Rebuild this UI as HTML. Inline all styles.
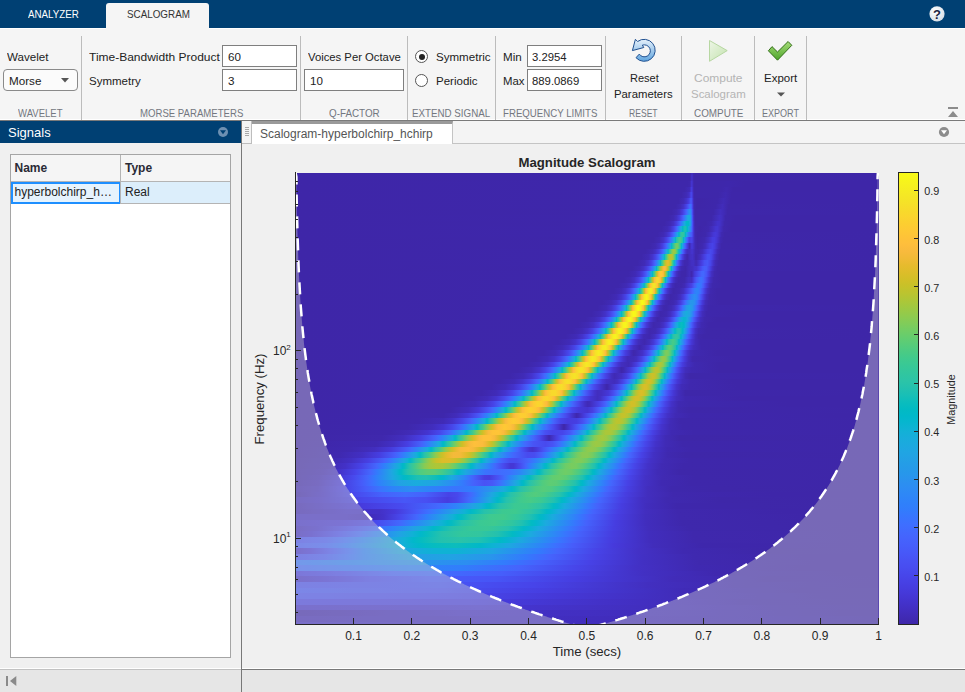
<!DOCTYPE html>
<html lang="en">
<head>
<meta charset="utf-8">
<title>Wavelet Time-Frequency Analyzer</title>
<style>
html,body{margin:0;padding:0}
body{width:965px;height:692px;overflow:hidden;background:#f0f0f0;font-family:"Liberation Sans",Arial,sans-serif;font-size:12px;color:#222}
#app{position:relative;width:965px;height:692px;overflow:hidden;background:#f0f0f0}
#app div,#app span,#app svg{position:absolute;box-sizing:border-box}
.t{white-space:nowrap;line-height:normal;transform-origin:0 0}
.titlebar{left:0;top:0;width:965px;height:28px;background:#004073}
.tabsel{left:106px;top:3px;width:103px;height:26px;background:#f5f5f5;border-radius:3px 3px 0 0}
.toolstrip{left:0;top:28px;width:965px;height:93px;background:#f5f5f5;border-top:1px solid #fff;border-bottom:1px solid #7a7a7a;box-shadow:inset 0 -1px 0 #fff}
.sep{top:36px;width:1px;height:84px;background:#bcbcbc}
.inp{height:22px;background:#fff;border:1px solid #7f7f7f}
.dd{left:3px;top:69px;width:75px;height:22px;background:#fbfbfb;border:1px solid #8a8a8a;border-radius:4px}
.radio{width:13px;height:13px;border-radius:50%;border:1px solid #555;background:#fff}
.radio.on::after{content:"";position:absolute;left:2.5px;top:2.5px;width:6px;height:6px;border-radius:50%;background:#222}
.sighead{left:0;top:121px;width:241px;height:22px;background:#004073}
.divider{left:241px;top:121px;width:1px;height:571px;background:#787878}
.tabstrip{left:242px;top:121px;width:723px;height:23px;background:#f4f4f4;border-bottom:1px solid #c4c4c4}
.grip{left:242px;top:121px;width:10px;height:23px;background:#f4f4f4;border-right:1px solid #bdbdbd;border-bottom:1px solid #bdbdbd}
.doctab{left:252px;top:121px;width:201px;height:23px;background:#fff;border-top:3px solid #9a9a9a;border-right:1px solid #c4c4c4}
.table{left:10px;top:154px;width:221px;height:504px;background:#fff;border:1px solid #a5a5a5}
.thead{left:0;top:0;width:219px;height:27px;background:#f5f5f5;border-bottom:1px solid #b4b4b4}
.colsep{left:109px;top:0;width:1px;height:49px;background:#b4b4b4}
.row{left:0;top:27px;width:219px;height:22px;background:#dceefb;border-bottom:1px solid #b4b4b4}
.cellsel{left:0;top:27px;width:110px;height:22px;border:2px solid #1e8fff;background:#e6f3fd}
.status{left:0;top:668px;width:965px;height:24px;background:#e6e6e6;border-top:1px solid #fff}
.stl{left:0;top:669px;width:241px;height:1px;background:#c2c2c2}
.str{left:242px;top:669px;width:723px;height:1px;background:#787878}
.plot{left:242px;top:144px}
</style>
</head>
<body>
<div id="app">
  <div class="titlebar"></div>
  <div class="toolstrip"></div>
  <div class="tabsel"></div>
  <div class="sep" style="left:81px"></div>
  <div class="sep" style="left:300px"></div>
  <div class="sep" style="left:407px"></div>
  <div class="sep" style="left:495px"></div>
  <div class="sep" style="left:605px"></div>
  <div class="sep" style="left:681px"></div>
  <div class="sep" style="left:754px"></div>
  <div class="sep" style="left:806px"></div>
  <div class="dd"></div>
  <div class="inp" style="left:222px;top:45px;width:75px"></div>
  <div class="inp" style="left:222px;top:69px;width:75px"></div>
  <div class="inp" style="left:304px;top:69px;width:100px"></div>
  <div class="inp" style="left:527px;top:45px;width:75px"></div>
  <div class="inp" style="left:527px;top:69px;width:75px"></div>
  <div class="radio on" style="left:415px;top:50px"></div>
  <div class="radio" style="left:415px;top:74px"></div>
  <svg style="left:0;top:0" width="965" height="121" viewBox="0 0 965 121">
    <defs>
      <linearGradient id="gr" x1="0" y1="0" x2="0" y2="1"><stop offset="0" stop-color="#e6f1fb"/><stop offset="1" stop-color="#5fa4de"/></linearGradient>
      <linearGradient id="gc" x1="0" y1="0" x2="0" y2="1"><stop offset="0" stop-color="#a6dc78"/><stop offset="1" stop-color="#4ea52c"/></linearGradient>
      <linearGradient id="gp" x1="0" y1="0" x2="1" y2="1"><stop offset="0" stop-color="#edf6e6"/><stop offset="1" stop-color="#c3e2ae"/></linearGradient>
      <radialGradient id="gh" cx=".4" cy=".35" r=".7"><stop offset="0" stop-color="#fff"/><stop offset="1" stop-color="#d5dde6"/></radialGradient>
    </defs>
    <path d="M61 78h8l-4 4.5z" fill="#555"/>
    <path d="M637.6 41.5A11 11 0 1 1 636 57.7L639.3 54.1A6 6 0 1 0 642.3 45.2L643.8 47.5L632.4 50.6L635.4 39.3Z" fill="url(#gr)" stroke="#1f4f8f" stroke-width="1" stroke-linejoin="round"/>
    <path d="M709.5 40.5V61.3L727.2 50.6Z" fill="url(#gp)" stroke="#b7d7a2" stroke-width="1" stroke-linejoin="round"/>
    <path d="M768.4 50.8L772 46.6L777.5 52L788.1 41.5L791.8 45.3L777.5 60.2Z" fill="url(#gc)" stroke="#336f18" stroke-width="1" stroke-linejoin="round"/>
    <path d="M777 92.5h8l-4 4z" fill="#555"/>
    <circle cx="937" cy="13.8" r="7.6" fill="url(#gh)"/>
    <text x="937" y="18.5" text-anchor="middle" font-family="Liberation Sans, Arial, sans-serif" font-weight="bold" font-size="13" fill="#1b2440">?</text>
    <path d="M948 107h10v2h-10zM948 117h10l-5-6z" fill="#8c8c8c"/>
  </svg>
<span class="t" style="left:27.6px;top:6.6px;font-size:11.6px;color:#ffffff;transform:scaleX(0.8433)">ANALYZER</span>
<span class="t" style="left:127.3px;top:6.6px;font-size:11.6px;color:#333333;transform:scaleX(0.8489)">SCALOGRAM</span>
<span class="t" style="left:7.0px;top:50.2px;font-size:11.6px;color:#222222;transform:scaleX(0.9987)">Wavelet</span>
<span class="t" style="left:8.6px;top:74.2px;font-size:11.6px;color:#222222;transform:scaleX(1.0056)">Morse</span>
<span class="t" style="left:88.7px;top:50.1px;font-size:11.6px;color:#222222;transform:scaleX(1.0339)">Time-Bandwidth Product</span>
<span class="t" style="left:88.7px;top:74.2px;font-size:11.6px;color:#222222;transform:scaleX(0.9910)">Symmetry</span>
<span class="t" style="left:227.7px;top:50.1px;font-size:11.6px;color:#222222;transform:scaleX(0.9995)">60</span>
<span class="t" style="left:227.7px;top:74.2px;font-size:11.6px;color:#222222;transform:scaleX(1.0073)">3</span>
<span class="t" style="left:307.5px;top:50.1px;font-size:11.6px;color:#222222;transform:scaleX(0.9730)">Voices Per Octave</span>
<span class="t" style="left:309.8px;top:74.2px;font-size:11.6px;color:#222222;transform:scaleX(0.9995)">10</span>
<span class="t" style="left:436.4px;top:50.1px;font-size:11.6px;color:#222222;transform:scaleX(0.9973)">Symmetric</span>
<span class="t" style="left:436.4px;top:74.2px;font-size:11.6px;color:#222222;transform:scaleX(0.9931)">Periodic</span>
<span class="t" style="left:503.2px;top:50.1px;font-size:11.6px;color:#222222;transform:scaleX(1.0007)">Min</span>
<span class="t" style="left:503.2px;top:74.2px;font-size:11.6px;color:#222222;transform:scaleX(0.9815)">Max</span>
<span class="t" style="left:532.2px;top:50.1px;font-size:11.6px;color:#222222;transform:scaleX(0.9755)">3.2954</span>
<span class="t" style="left:532.2px;top:74.2px;font-size:11.6px;color:#222222;transform:scaleX(0.9760)">889.0869</span>
<span class="t" style="left:629.5px;top:71.2px;font-size:11.6px;color:#222222;transform:scaleX(0.9506)">Reset</span>
<span class="t" style="left:614.3px;top:87.2px;font-size:11.6px;color:#222222;transform:scaleX(0.9779)">Parameters</span>
<span class="t" style="left:693.7px;top:71.2px;font-size:11.6px;color:#b4b4b4;transform:scaleX(1.0309)">Compute</span>
<span class="t" style="left:690.8px;top:87.2px;font-size:11.6px;color:#b4b4b4;transform:scaleX(0.9870)">Scalogram</span>
<span class="t" style="left:763.7px;top:71.2px;font-size:11.6px;color:#222222;transform:scaleX(0.9906)">Export</span>
<span class="t" style="left:18.2px;top:107.0px;font-size:11px;color:#737780;transform:scaleX(0.8667)">WAVELET</span>
<span class="t" style="left:139.7px;top:107.0px;font-size:11px;color:#737780;transform:scaleX(0.8727)">MORSE PARAMETERS</span>
<span class="t" style="left:328.7px;top:107.0px;font-size:11px;color:#737780;transform:scaleX(0.8951)">Q-FACTOR</span>
<span class="t" style="left:412.4px;top:107.0px;font-size:11px;color:#737780;transform:scaleX(0.8883)">EXTEND SIGNAL</span>
<span class="t" style="left:503.2px;top:107.0px;font-size:11px;color:#737780;transform:scaleX(0.8792)">FREQUENCY LIMITS</span>
<span class="t" style="left:629.0px;top:107.0px;font-size:11px;color:#737780;transform:scaleX(0.7796)">RESET</span>
<span class="t" style="left:693.6px;top:107.0px;font-size:11px;color:#737780;transform:scaleX(0.8982)">COMPUTE</span>
<span class="t" style="left:762.0px;top:107.0px;font-size:11px;color:#737780;transform:scaleX(0.8217)">EXPORT</span>
  <div class="sighead"></div>
  <span class="t" style="left:8px;top:125.2px;font-size:13px;color:#fff">Signals</span>
  <div class="tabstrip"></div>
  <div class="grip"></div>
  <div class="doctab"></div>
  <span class="t" style="left:260px;top:127.2px;font-size:12px;color:#555">Scalogram-hyperbolchirp_hchirp</span>
  <svg style="left:0;top:121px" width="965" height="23" viewBox="0 121 965 23">
    <circle cx="223" cy="132" r="5" fill="#6d90b2"/><path d="M220 130.3h6l-3 4z" fill="#004073"/>
    <circle cx="944" cy="132" r="5.1" fill="#8c8c8c"/><path d="M941 130.3h6l-3 4z" fill="#fff"/>
    <path d="M245 127.5h4M245 129.5h4M245 131.5h4M245 133.5h4M245 135.5h4" stroke="#a8a8a8" stroke-width="1"/>
  </svg>
  <div class="table">
    <div class="thead"></div>
    <div class="row"></div>
    <div class="cellsel"></div>
    <div class="colsep"></div>
    <span class="t" style="left:3.5px;top:5.7px;font-size:12px;font-weight:bold;color:#2a2a35">Name</span>
    <span class="t" style="left:114px;top:5.7px;font-size:12px;font-weight:bold;color:#2a2a35">Type</span>
    <span class="t" style="left:3.5px;top:30.1px;font-size:12px">hyperbolchirp_h…</span>
    <span class="t" style="left:114px;top:30.1px;font-size:12px">Real</span>
  </div>
  <div class="status"></div>
  <div class="stl"></div>
  <div class="str"></div>
  <svg style="left:0;top:670px" width="30" height="22" viewBox="0 670 30 22"><path d="M6 676h2v10h-2zM16.3 676v10l-6.3-5z" fill="#8a8a8a"/></svg>
  <div class="divider"></div>
<svg class="plot" width="723" height="525" viewBox="242 144 723 525" font-family="Liberation Sans, Arial, sans-serif" fill="#262626">
<defs><clipPath id="ax"><rect x="296" y="173" width="583" height="451"/></clipPath>
<linearGradient id="cb" x1="0" y1="0" x2="0" y2="1"><stop offset="0.0000" stop-color="#f9fb15"/><stop offset="0.0159" stop-color="#f7f51b"/><stop offset="0.0317" stop-color="#f6ef20"/><stop offset="0.0476" stop-color="#f5e924"/><stop offset="0.0635" stop-color="#f5e327"/><stop offset="0.0794" stop-color="#f7dc2a"/><stop offset="0.0952" stop-color="#fad62d"/><stop offset="0.1111" stop-color="#fccf30"/><stop offset="0.1270" stop-color="#fec934"/><stop offset="0.1429" stop-color="#fec338"/><stop offset="0.1587" stop-color="#febe3c"/><stop offset="0.1746" stop-color="#f8ba3d"/><stop offset="0.1905" stop-color="#f0ba36"/><stop offset="0.2063" stop-color="#e6bb2d"/><stop offset="0.2222" stop-color="#dcbd29"/><stop offset="0.2381" stop-color="#d1bf27"/><stop offset="0.2540" stop-color="#c5c22a"/><stop offset="0.2698" stop-color="#b9c431"/><stop offset="0.2857" stop-color="#abc739"/><stop offset="0.3016" stop-color="#9dc943"/><stop offset="0.3175" stop-color="#8fcb4e"/><stop offset="0.3333" stop-color="#81cc59"/><stop offset="0.3492" stop-color="#72cd64"/><stop offset="0.3651" stop-color="#64cd6f"/><stop offset="0.3810" stop-color="#57cc7a"/><stop offset="0.3968" stop-color="#4acb84"/><stop offset="0.4127" stop-color="#3fca8e"/><stop offset="0.4286" stop-color="#37c897"/><stop offset="0.4444" stop-color="#31c69f"/><stop offset="0.4603" stop-color="#2cc4a7"/><stop offset="0.4762" stop-color="#24c1ae"/><stop offset="0.4921" stop-color="#19bfb6"/><stop offset="0.5079" stop-color="#0bbdbd"/><stop offset="0.5238" stop-color="#02bac3"/><stop offset="0.5397" stop-color="#01b8ca"/><stop offset="0.5556" stop-color="#08b5d0"/><stop offset="0.5714" stop-color="#12b1d6"/><stop offset="0.5873" stop-color="#18addb"/><stop offset="0.6032" stop-color="#1ca9df"/><stop offset="0.6190" stop-color="#20a5e3"/><stop offset="0.6349" stop-color="#23a0e5"/><stop offset="0.6508" stop-color="#259be8"/><stop offset="0.6667" stop-color="#2797eb"/><stop offset="0.6825" stop-color="#2b91ef"/><stop offset="0.6984" stop-color="#2d8cf3"/><stop offset="0.7143" stop-color="#2e87f7"/><stop offset="0.7302" stop-color="#2f81fa"/><stop offset="0.7460" stop-color="#327cfc"/><stop offset="0.7619" stop-color="#3875fe"/><stop offset="0.7778" stop-color="#3e6fff"/><stop offset="0.7937" stop-color="#4269fe"/><stop offset="0.8095" stop-color="#4563fd"/><stop offset="0.8254" stop-color="#465efb"/><stop offset="0.8413" stop-color="#4758f8"/><stop offset="0.8571" stop-color="#4852f4"/><stop offset="0.8730" stop-color="#484df0"/><stop offset="0.8889" stop-color="#4747eb"/><stop offset="0.9048" stop-color="#4741e5"/><stop offset="0.9206" stop-color="#463cde"/><stop offset="0.9365" stop-color="#4537d5"/><stop offset="0.9524" stop-color="#4332cb"/><stop offset="0.9683" stop-color="#422ec0"/><stop offset="0.9841" stop-color="#402ab4"/><stop offset="1.0000" stop-color="#3e26a8"/></linearGradient>
<linearGradient id="r0"><stop offset=".0009" stop-color="#3e26a8"/><stop offset=".675" stop-color="#3e27a9"/><stop offset=".6767" stop-color="#3f28ad"/><stop offset=".6784" stop-color="#412dbc"/><stop offset=".6801" stop-color="#412dbb"/><stop offset=".6818" stop-color="#3f28ae"/><stop offset=".6852" stop-color="#3e27a9"/><stop offset=".9991" stop-color="#3e26a8"/></linearGradient>
<linearGradient id="r1"><stop offset=".0009" stop-color="#3e26a8"/><stop offset=".675" stop-color="#3e27aa"/><stop offset=".6767" stop-color="#3f29b1"/><stop offset=".6784" stop-color="#4230c4"/><stop offset=".6801" stop-color="#422fc0"/><stop offset=".6818" stop-color="#3f28af"/><stop offset=".6835" stop-color="#3e27a9"/><stop offset=".7453" stop-color="#3e27a9"/><stop offset=".9991" stop-color="#3e26a8"/></linearGradient>
<linearGradient id="r2"><stop offset=".0009" stop-color="#3e26a8"/><stop offset=".6715" stop-color="#3e27ab"/><stop offset=".675" stop-color="#3f28ad"/><stop offset=".6767" stop-color="#412cba"/><stop offset=".6784" stop-color="#4434cf"/><stop offset=".6801" stop-color="#4331c6"/><stop offset=".6818" stop-color="#3f29b1"/><stop offset=".6835" stop-color="#3e27a9"/><stop offset=".7333" stop-color="#3e27ab"/><stop offset=".7419" stop-color="#3e27ac"/><stop offset=".771" stop-color="#3e26a8"/><stop offset=".9991" stop-color="#3e26a8"/></linearGradient>
<linearGradient id="r3"><stop offset=".0009" stop-color="#3e26a8"/><stop offset=".6664" stop-color="#3e27ab"/><stop offset=".675" stop-color="#402bb7"/><stop offset=".6784" stop-color="#463bdd"/><stop offset=".6801" stop-color="#4434ce"/><stop offset=".6818" stop-color="#402ab4"/><stop offset=".6835" stop-color="#3e27aa"/><stop offset=".7298" stop-color="#3e27ab"/><stop offset=".7384" stop-color="#3f28af"/><stop offset=".7504" stop-color="#3e26a8"/><stop offset=".9991" stop-color="#3e26a8"/></linearGradient>
<linearGradient id="r4"><stop offset=".0009" stop-color="#3e26a8"/><stop offset=".6612" stop-color="#3e27ab"/><stop offset=".6698" stop-color="#402bb6"/><stop offset=".6732" stop-color="#422fc2"/><stop offset=".675" stop-color="#4433cd"/><stop offset=".6767" stop-color="#473fe2"/><stop offset=".6784" stop-color="#4746ea"/><stop offset=".6801" stop-color="#4538d7"/><stop offset=".6818" stop-color="#402bb8"/><stop offset=".6835" stop-color="#3e27ab"/><stop offset=".7247" stop-color="#3e27aa"/><stop offset=".7367" stop-color="#3f29b2"/><stop offset=".747" stop-color="#3e26a9"/><stop offset=".9991" stop-color="#3e26a8"/></linearGradient>
<linearGradient id="r5"><stop offset=".0009" stop-color="#3e26a8"/><stop offset=".6561" stop-color="#3e27ab"/><stop offset=".6647" stop-color="#402bb6"/><stop offset=".6698" stop-color="#4332ca"/><stop offset=".6732" stop-color="#463cdf"/><stop offset=".6767" stop-color="#4854f5"/><stop offset=".6784" stop-color="#4853f5"/><stop offset=".6801" stop-color="#463ee1"/><stop offset=".6818" stop-color="#412dbc"/><stop offset=".6835" stop-color="#3e28ac"/><stop offset=".6887" stop-color="#3e26a8"/><stop offset=".723" stop-color="#3e27ab"/><stop offset=".7333" stop-color="#402bb6"/><stop offset=".7453" stop-color="#3e26a9"/><stop offset=".9991" stop-color="#3e26a8"/></linearGradient>
<linearGradient id="r6"><stop offset=".0009" stop-color="#3e26a8"/><stop offset=".6509" stop-color="#3e27ab"/><stop offset=".6595" stop-color="#402bb6"/><stop offset=".6647" stop-color="#4332c9"/><stop offset=".6698" stop-color="#4744e8"/><stop offset=".6732" stop-color="#475af9"/><stop offset=".675" stop-color="#4368fe"/><stop offset=".6767" stop-color="#3e70ff"/><stop offset=".6784" stop-color="#4563fc"/><stop offset=".6801" stop-color="#4745e9"/><stop offset=".6818" stop-color="#422fc2"/><stop offset=".6835" stop-color="#3f28ae"/><stop offset=".687" stop-color="#3e26a8"/><stop offset=".7196" stop-color="#3e27ab"/><stop offset=".7316" stop-color="#412cba"/><stop offset=".7419" stop-color="#3e27a9"/><stop offset=".9991" stop-color="#3e26a8"/></linearGradient>
<linearGradient id="r7"><stop offset=".0009" stop-color="#3e26a8"/><stop offset=".6441" stop-color="#3e27aa"/><stop offset=".6527" stop-color="#402ab3"/><stop offset=".6578" stop-color="#422fc2"/><stop offset=".663" stop-color="#463cdf"/><stop offset=".6681" stop-color="#475af9"/><stop offset=".6698" stop-color="#4367fd"/><stop offset=".6715" stop-color="#3777fe"/><stop offset=".6732" stop-color="#2e86f8"/><stop offset=".675" stop-color="#2c90f0"/><stop offset=".6767" stop-color="#2d8cf3"/><stop offset=".6784" stop-color="#3b72fe"/><stop offset=".6801" stop-color="#484cf0"/><stop offset=".6818" stop-color="#4332c9"/><stop offset=".6835" stop-color="#3f29b1"/><stop offset=".6852" stop-color="#3e27a9"/><stop offset=".7161" stop-color="#3e27ab"/><stop offset=".7281" stop-color="#422ebf"/><stop offset=".7333" stop-color="#402bb8"/><stop offset=".7401" stop-color="#3e27aa"/><stop offset=".9991" stop-color="#3e26a8"/></linearGradient>
<linearGradient id="r8"><stop offset=".0009" stop-color="#3e26a8"/><stop offset=".6389" stop-color="#3e27ab"/><stop offset=".6475" stop-color="#402ab3"/><stop offset=".6527" stop-color="#4230c3"/><stop offset=".6578" stop-color="#463de0"/><stop offset=".663" stop-color="#475cfa"/><stop offset=".6647" stop-color="#4269fe"/><stop offset=".6664" stop-color="#347afd"/><stop offset=".6715" stop-color="#21a3e4"/><stop offset=".6732" stop-color="#1caadf"/><stop offset=".675" stop-color="#1baade"/><stop offset=".6767" stop-color="#259de7"/><stop offset=".6784" stop-color="#317dfc"/><stop offset=".6801" stop-color="#4852f4"/><stop offset=".6818" stop-color="#4434d0"/><stop offset=".6835" stop-color="#402ab4"/><stop offset=".6852" stop-color="#3e27aa"/><stop offset=".7127" stop-color="#3e27ab"/><stop offset=".7213" stop-color="#412dbb"/><stop offset=".7264" stop-color="#4330c5"/><stop offset=".7298" stop-color="#422fc0"/><stop offset=".7367" stop-color="#3e27ac"/><stop offset=".7539" stop-color="#3e26a8"/><stop offset=".9991" stop-color="#3e26a8"/></linearGradient>
<linearGradient id="r9"><stop offset=".0009" stop-color="#3e26a8"/><stop offset=".6321" stop-color="#3e27aa"/><stop offset=".6424" stop-color="#402ab5"/><stop offset=".6475" stop-color="#4330c4"/><stop offset=".6527" stop-color="#473fe2"/><stop offset=".6578" stop-color="#465efb"/><stop offset=".6595" stop-color="#406dfe"/><stop offset=".6612" stop-color="#317efb"/><stop offset=".6664" stop-color="#1da9e0"/><stop offset=".6698" stop-color="#02b7cb"/><stop offset=".6715" stop-color="#01b9c7"/><stop offset=".6732" stop-color="#01b8ca"/><stop offset=".675" stop-color="#12b1d6"/><stop offset=".6767" stop-color="#249ee6"/><stop offset=".6784" stop-color="#317dfb"/><stop offset=".6801" stop-color="#4854f6"/><stop offset=".6818" stop-color="#4537d5"/><stop offset=".6835" stop-color="#402bb7"/><stop offset=".6852" stop-color="#3e27ab"/><stop offset=".7024" stop-color="#3e27a9"/><stop offset=".7127" stop-color="#3f29b0"/><stop offset=".723" stop-color="#4332cb"/><stop offset=".7264" stop-color="#4332ca"/><stop offset=".735" stop-color="#3e28ac"/><stop offset=".7487" stop-color="#3e26a8"/><stop offset=".9991" stop-color="#3e26a8"/></linearGradient>
<linearGradient id="r10"><stop offset=".0009" stop-color="#3e26a8"/><stop offset=".6269" stop-color="#3e27ab"/><stop offset=".6372" stop-color="#402bb6"/><stop offset=".6424" stop-color="#4331c7"/><stop offset=".6475" stop-color="#4740e4"/><stop offset=".6509" stop-color="#4854f5"/><stop offset=".6527" stop-color="#4562fc"/><stop offset=".6544" stop-color="#3c72ff"/><stop offset=".6561" stop-color="#2e83f9"/><stop offset=".6595" stop-color="#22a2e4"/><stop offset=".6612" stop-color="#16afd9"/><stop offset=".663" stop-color="#01b7ca"/><stop offset=".6647" stop-color="#0bbdbd"/><stop offset=".6664" stop-color="#1abfb5"/><stop offset=".6681" stop-color="#1bc0b4"/><stop offset=".6698" stop-color="#0dbdbb"/><stop offset=".6715" stop-color="#01b8c9"/><stop offset=".6732" stop-color="#17aeda"/><stop offset=".6767" stop-color="#2d8df2"/><stop offset=".6784" stop-color="#3c72ff"/><stop offset=".6801" stop-color="#4852f4"/><stop offset=".6818" stop-color="#4538d7"/><stop offset=".6835" stop-color="#412cba"/><stop offset=".6852" stop-color="#3f28ad"/><stop offset=".6921" stop-color="#3e26a8"/><stop offset=".7075" stop-color="#3f28ae"/><stop offset=".7144" stop-color="#422ebf"/><stop offset=".7196" stop-color="#4435d0"/><stop offset=".723" stop-color="#4536d2"/><stop offset=".7281" stop-color="#422fc0"/><stop offset=".7333" stop-color="#3f28ad"/><stop offset=".7453" stop-color="#3e26a8"/><stop offset=".9991" stop-color="#3e26a8"/></linearGradient>
<linearGradient id="r11"><stop offset=".0009" stop-color="#3e26a8"/><stop offset=".6201" stop-color="#3e27ab"/><stop offset=".6304" stop-color="#402ab5"/><stop offset=".6355" stop-color="#4230c4"/><stop offset=".6407" stop-color="#463cdf"/><stop offset=".6458" stop-color="#4759f8"/><stop offset=".6475" stop-color="#4466fd"/><stop offset=".6492" stop-color="#3876fe"/><stop offset=".6509" stop-color="#2e87f7"/><stop offset=".6544" stop-color="#1da9e0"/><stop offset=".6561" stop-color="#07b5d0"/><stop offset=".6578" stop-color="#0abdbd"/><stop offset=".6595" stop-color="#25c2ad"/><stop offset=".6612" stop-color="#30c5a2"/><stop offset=".663" stop-color="#32c69e"/><stop offset=".6647" stop-color="#2fc5a3"/><stop offset=".6664" stop-color="#20c1b1"/><stop offset=".6681" stop-color="#01bac5"/><stop offset=".6698" stop-color="#19addc"/><stop offset=".6715" stop-color="#269ae9"/><stop offset=".6732" stop-color="#2e85f8"/><stop offset=".675" stop-color="#3974fe"/><stop offset=".6784" stop-color="#475dfa"/><stop offset=".6801" stop-color="#484aee"/><stop offset=".6818" stop-color="#4537d6"/><stop offset=".6835" stop-color="#412dbc"/><stop offset=".6852" stop-color="#3f28ae"/><stop offset=".6887" stop-color="#3e26a9"/><stop offset=".7024" stop-color="#3e28ac"/><stop offset=".7093" stop-color="#412cbb"/><stop offset=".7161" stop-color="#4537d5"/><stop offset=".7196" stop-color="#4639da"/><stop offset=".723" stop-color="#4536d3"/><stop offset=".7298" stop-color="#3f29b1"/><stop offset=".735" stop-color="#3e27a9"/><stop offset=".9991" stop-color="#3e26a8"/></linearGradient>
<linearGradient id="r12"><stop offset=".0009" stop-color="#3e26a8"/><stop offset=".6132" stop-color="#3e27aa"/><stop offset=".6235" stop-color="#402ab4"/><stop offset=".6304" stop-color="#4332c8"/><stop offset=".6355" stop-color="#4740e4"/><stop offset=".6407" stop-color="#465ffb"/><stop offset=".6424" stop-color="#406dfe"/><stop offset=".6441" stop-color="#307efb"/><stop offset=".6475" stop-color="#239fe5"/><stop offset=".6492" stop-color="#16aeda"/><stop offset=".6509" stop-color="#01b9c6"/><stop offset=".6527" stop-color="#25c2ae"/><stop offset=".6561" stop-color="#42ca8b"/><stop offset=".6578" stop-color="#4bcb84"/><stop offset=".6595" stop-color="#46cb88"/><stop offset=".6612" stop-color="#38c896"/><stop offset=".663" stop-color="#27c2ac"/><stop offset=".6647" stop-color="#01bac5"/><stop offset=".6664" stop-color="#1babde"/><stop offset=".6698" stop-color="#327cfc"/><stop offset=".6715" stop-color="#4562fc"/><stop offset=".6732" stop-color="#484df0"/><stop offset=".675" stop-color="#4741e5"/><stop offset=".6784" stop-color="#4746ea"/><stop offset=".6801" stop-color="#473fe3"/><stop offset=".6835" stop-color="#412dbc"/><stop offset=".6852" stop-color="#3f29b0"/><stop offset=".6887" stop-color="#3e26a9"/><stop offset=".7007" stop-color="#3f29b0"/><stop offset=".7075" stop-color="#4230c4"/><stop offset=".7144" stop-color="#463cdf"/><stop offset=".7178" stop-color="#463de0"/><stop offset=".7213" stop-color="#4537d6"/><stop offset=".7281" stop-color="#3f29b2"/><stop offset=".7333" stop-color="#3e27a9"/><stop offset=".9991" stop-color="#3e26a8"/></linearGradient>
<linearGradient id="r13"><stop offset=".0009" stop-color="#3e26a8"/><stop offset=".6063" stop-color="#3e27aa"/><stop offset=".6166" stop-color="#402ab3"/><stop offset=".6235" stop-color="#4331c6"/><stop offset=".6286" stop-color="#463ee0"/><stop offset=".6338" stop-color="#475af9"/><stop offset=".6355" stop-color="#4367fd"/><stop offset=".6372" stop-color="#3777fe"/><stop offset=".6424" stop-color="#1da9e0"/><stop offset=".6441" stop-color="#04b6cd"/><stop offset=".6458" stop-color="#18bfb6"/><stop offset=".6492" stop-color="#49cb85"/><stop offset=".6509" stop-color="#62cd71"/><stop offset=".6527" stop-color="#71cd64"/><stop offset=".6544" stop-color="#6ecd67"/><stop offset=".6561" stop-color="#5bcc77"/><stop offset=".6578" stop-color="#3dc990"/><stop offset=".6595" stop-color="#25c2ad"/><stop offset=".6612" stop-color="#02b7cb"/><stop offset=".663" stop-color="#1fa5e2"/><stop offset=".6664" stop-color="#3974fe"/><stop offset=".6681" stop-color="#475cfa"/><stop offset=".6715" stop-color="#463bde"/><stop offset=".675" stop-color="#3f29b2"/><stop offset=".6784" stop-color="#4537d6"/><stop offset=".6801" stop-color="#4537d6"/><stop offset=".6852" stop-color="#3f29b1"/><stop offset=".6887" stop-color="#3e27a9"/><stop offset=".6973" stop-color="#3f29b1"/><stop offset=".7024" stop-color="#422ebf"/><stop offset=".7093" stop-color="#463ddf"/><stop offset=".7144" stop-color="#4743e7"/><stop offset=".7178" stop-color="#463de0"/><stop offset=".7247" stop-color="#412cb9"/><stop offset=".7298" stop-color="#3e27aa"/><stop offset=".9991" stop-color="#3e26a8"/></linearGradient>
<linearGradient id="r14"><stop offset=".0009" stop-color="#3e26a8"/><stop offset=".5995" stop-color="#3e27ab"/><stop offset=".6115" stop-color="#402bb6"/><stop offset=".6166" stop-color="#4330c5"/><stop offset=".6218" stop-color="#463cde"/><stop offset=".6269" stop-color="#4756f7"/><stop offset=".6286" stop-color="#4562fc"/><stop offset=".6304" stop-color="#3c71ff"/><stop offset=".6321" stop-color="#2f83f9"/><stop offset=".6355" stop-color="#21a4e3"/><stop offset=".6372" stop-color="#0db3d4"/><stop offset=".6389" stop-color="#0cbdbc"/><stop offset=".6407" stop-color="#30c5a2"/><stop offset=".6424" stop-color="#4acb85"/><stop offset=".6441" stop-color="#6ecd67"/><stop offset=".6458" stop-color="#8ccb50"/><stop offset=".6475" stop-color="#9bc945"/><stop offset=".6492" stop-color="#9bc944"/><stop offset=".6509" stop-color="#89cb52"/><stop offset=".6527" stop-color="#61cd71"/><stop offset=".6544" stop-color="#3ac994"/><stop offset=".6561" stop-color="#18bfb6"/><stop offset=".6578" stop-color="#10b2d5"/><stop offset=".6595" stop-color="#259ce7"/><stop offset=".6612" stop-color="#2e84f9"/><stop offset=".663" stop-color="#426afe"/><stop offset=".6647" stop-color="#4855f6"/><stop offset=".6681" stop-color="#4538d7"/><stop offset=".6698" stop-color="#4331c7"/><stop offset=".6715" stop-color="#412ebe"/><stop offset=".675" stop-color="#422ebe"/><stop offset=".6784" stop-color="#4433cc"/><stop offset=".6801" stop-color="#4433cc"/><stop offset=".6852" stop-color="#3f29b1"/><stop offset=".6904" stop-color="#3f28ad"/><stop offset=".6973" stop-color="#412dbc"/><stop offset=".7058" stop-color="#4741e5"/><stop offset=".711" stop-color="#484aed"/><stop offset=".7144" stop-color="#4744e8"/><stop offset=".7178" stop-color="#4538d8"/><stop offset=".723" stop-color="#402bb8"/><stop offset=".7281" stop-color="#3e27ab"/><stop offset=".9991" stop-color="#3e26a8"/></linearGradient>
<linearGradient id="r15"><stop offset=".0009" stop-color="#3e26a8"/><stop offset=".5926" stop-color="#3e27ab"/><stop offset=".6046" stop-color="#402bb6"/><stop offset=".6115" stop-color="#4433cc"/><stop offset=".6166" stop-color="#4742e6"/><stop offset=".6218" stop-color="#4660fb"/><stop offset=".6235" stop-color="#3f6eff"/><stop offset=".6252" stop-color="#307ffb"/><stop offset=".6286" stop-color="#23a0e5"/><stop offset=".6304" stop-color="#14b0d8"/><stop offset=".6321" stop-color="#05bbc1"/><stop offset=".6338" stop-color="#2cc4a6"/><stop offset=".6355" stop-color="#47cb87"/><stop offset=".6372" stop-color="#72cd63"/><stop offset=".6389" stop-color="#9bc945"/><stop offset=".6407" stop-color="#b5c533"/><stop offset=".6424" stop-color="#c3c22b"/><stop offset=".6441" stop-color="#c1c32c"/><stop offset=".6458" stop-color="#b2c635"/><stop offset=".6475" stop-color="#90ca4d"/><stop offset=".6492" stop-color="#5fcd73"/><stop offset=".6509" stop-color="#33c69d"/><stop offset=".6527" stop-color="#02bac5"/><stop offset=".6544" stop-color="#1ea8e0"/><stop offset=".6578" stop-color="#3776fe"/><stop offset=".6595" stop-color="#465ffb"/><stop offset=".663" stop-color="#463ee1"/><stop offset=".6664" stop-color="#422fc1"/><stop offset=".6698" stop-color="#3f28af"/><stop offset=".6715" stop-color="#3e27ab"/><stop offset=".6767" stop-color="#4230c3"/><stop offset=".6801" stop-color="#4331c7"/><stop offset=".6835" stop-color="#412cb9"/><stop offset=".6852" stop-color="#3f28ae"/><stop offset=".687" stop-color="#3f28ad"/><stop offset=".6938" stop-color="#422ec0"/><stop offset=".7007" stop-color="#473fe3"/><stop offset=".7058" stop-color="#484ff2"/><stop offset=".7093" stop-color="#484ff2"/><stop offset=".7127" stop-color="#4746ea"/><stop offset=".7178" stop-color="#4332cb"/><stop offset=".7213" stop-color="#402bb7"/><stop offset=".7264" stop-color="#3e27aa"/><stop offset=".9991" stop-color="#3e26a8"/></linearGradient>
<linearGradient id="r16"><stop offset=".0009" stop-color="#3e26a8"/><stop offset=".5858" stop-color="#3e27ab"/><stop offset=".5978" stop-color="#402bb7"/><stop offset=".6046" stop-color="#4433cc"/><stop offset=".6098" stop-color="#4742e6"/><stop offset=".6149" stop-color="#465ffb"/><stop offset=".6166" stop-color="#406cfe"/><stop offset=".6184" stop-color="#327cfc"/><stop offset=".6218" stop-color="#249de6"/><stop offset=".6235" stop-color="#18aedb"/><stop offset=".6252" stop-color="#02bac4"/><stop offset=".6269" stop-color="#2ac3a9"/><stop offset=".6286" stop-color="#45cb89"/><stop offset=".6304" stop-color="#74cc62"/><stop offset=".6321" stop-color="#a3c83e"/><stop offset=".6338" stop-color="#c6c22a"/><stop offset=".6355" stop-color="#dbbd29"/><stop offset=".6372" stop-color="#e3bc2c"/><stop offset=".6389" stop-color="#e1bc2b"/><stop offset=".6407" stop-color="#d1bf27"/><stop offset=".6424" stop-color="#b2c635"/><stop offset=".6441" stop-color="#7fcc5a"/><stop offset=".6458" stop-color="#45cb89"/><stop offset=".6475" stop-color="#1fc1b1"/><stop offset=".6492" stop-color="#0db3d4"/><stop offset=".6509" stop-color="#259de7"/><stop offset=".6527" stop-color="#2f81fa"/><stop offset=".6544" stop-color="#4367fd"/><stop offset=".6561" stop-color="#4854f5"/><stop offset=".6595" stop-color="#4538d8"/><stop offset=".663" stop-color="#412dbc"/><stop offset=".6664" stop-color="#3f28af"/><stop offset=".6715" stop-color="#3f28af"/><stop offset=".6784" stop-color="#422fc2"/><stop offset=".6818" stop-color="#4230c3"/><stop offset=".6852" stop-color="#402bb6"/><stop offset=".687" stop-color="#402ab5"/><stop offset=".6955" stop-color="#463de0"/><stop offset=".7007" stop-color="#4851f3"/><stop offset=".7058" stop-color="#4757f7"/><stop offset=".711" stop-color="#4746ea"/><stop offset=".7161" stop-color="#4331c8"/><stop offset=".7196" stop-color="#402ab5"/><stop offset=".7247" stop-color="#3e27aa"/><stop offset=".9991" stop-color="#3e26a8"/></linearGradient>
<linearGradient id="r17"><stop offset=".0009" stop-color="#3e26a8"/><stop offset=".5772" stop-color="#3e27aa"/><stop offset=".5892" stop-color="#402ab5"/><stop offset=".5961" stop-color="#4331c6"/><stop offset=".6012" stop-color="#463cde"/><stop offset=".6063" stop-color="#4854f5"/><stop offset=".6098" stop-color="#406cfe"/><stop offset=".6115" stop-color="#327cfc"/><stop offset=".6149" stop-color="#259de7"/><stop offset=".6166" stop-color="#19addc"/><stop offset=".6184" stop-color="#01b9c6"/><stop offset=".6201" stop-color="#28c3aa"/><stop offset=".6218" stop-color="#45cb89"/><stop offset=".6235" stop-color="#77cc60"/><stop offset=".6252" stop-color="#aac73a"/><stop offset=".6269" stop-color="#d1bf27"/><stop offset=".6286" stop-color="#eaba31"/><stop offset=".6304" stop-color="#f7ba3c"/><stop offset=".6321" stop-color="#fbbc3d"/><stop offset=".6338" stop-color="#f7ba3c"/><stop offset=".6355" stop-color="#e8bb2f"/><stop offset=".6372" stop-color="#cac129"/><stop offset=".6389" stop-color="#99c946"/><stop offset=".6407" stop-color="#59cc79"/><stop offset=".6424" stop-color="#2dc4a6"/><stop offset=".6441" stop-color="#02b7ca"/><stop offset=".6458" stop-color="#21a3e3"/><stop offset=".6492" stop-color="#3b72ff"/><stop offset=".6509" stop-color="#475cfa"/><stop offset=".6527" stop-color="#4849ed"/><stop offset=".6544" stop-color="#463cde"/><stop offset=".6578" stop-color="#422fc0"/><stop offset=".6612" stop-color="#3f29b1"/><stop offset=".6681" stop-color="#3e27a9"/><stop offset=".6732" stop-color="#402bb6"/><stop offset=".6767" stop-color="#412dbb"/><stop offset=".6801" stop-color="#422ebe"/><stop offset=".6835" stop-color="#4332c9"/><stop offset=".687" stop-color="#4433cc"/><stop offset=".6921" stop-color="#4742e6"/><stop offset=".6973" stop-color="#4758f8"/><stop offset=".7007" stop-color="#465ffb"/><stop offset=".7041" stop-color="#475cfa"/><stop offset=".7093" stop-color="#4745e9"/><stop offset=".7144" stop-color="#4330c5"/><stop offset=".7178" stop-color="#402ab4"/><stop offset=".723" stop-color="#3e27aa"/><stop offset=".9991" stop-color="#3e26a8"/></linearGradient>
<linearGradient id="r18"><stop offset=".0009" stop-color="#3e26a8"/><stop offset=".5703" stop-color="#3e27ab"/><stop offset=".5823" stop-color="#402ab6"/><stop offset=".5892" stop-color="#4331c8"/><stop offset=".5943" stop-color="#463de0"/><stop offset=".5995" stop-color="#4755f6"/><stop offset=".6029" stop-color="#3f6efe"/><stop offset=".6046" stop-color="#317dfb"/><stop offset=".6081" stop-color="#249de6"/><stop offset=".6098" stop-color="#18addb"/><stop offset=".6115" stop-color="#02bac5"/><stop offset=".6132" stop-color="#2ac3a9"/><stop offset=".6149" stop-color="#47cb87"/><stop offset=".6166" stop-color="#7ccc5c"/><stop offset=".6184" stop-color="#b1c635"/><stop offset=".6201" stop-color="#dabd28"/><stop offset=".6218" stop-color="#f5ba3a"/><stop offset=".6235" stop-color="#fec13a"/><stop offset=".6252" stop-color="#fec835"/><stop offset=".6269" stop-color="#fec934"/><stop offset=".6286" stop-color="#fec338"/><stop offset=".6304" stop-color="#f7ba3c"/><stop offset=".6321" stop-color="#dabd28"/><stop offset=".6338" stop-color="#a9c73b"/><stop offset=".6355" stop-color="#66cd6d"/><stop offset=".6372" stop-color="#32c69f"/><stop offset=".6389" stop-color="#02bac5"/><stop offset=".6407" stop-color="#1ea7e1"/><stop offset=".6441" stop-color="#3677fe"/><stop offset=".6458" stop-color="#4660fc"/><stop offset=".6492" stop-color="#4741e5"/><stop offset=".6527" stop-color="#4330c5"/><stop offset=".6561" stop-color="#402ab4"/><stop offset=".6612" stop-color="#3e27ab"/><stop offset=".6681" stop-color="#3e27aa"/><stop offset=".675" stop-color="#412dbb"/><stop offset=".6784" stop-color="#3f28af"/><stop offset=".6801" stop-color="#412cb9"/><stop offset=".6835" stop-color="#4539d8"/><stop offset=".6904" stop-color="#4851f4"/><stop offset=".6955" stop-color="#4465fd"/><stop offset=".699" stop-color="#4368fe"/><stop offset=".7041" stop-color="#4756f7"/><stop offset=".7075" stop-color="#4743e7"/><stop offset=".7127" stop-color="#422fc2"/><stop offset=".7178" stop-color="#3f28ae"/><stop offset=".7281" stop-color="#3e26a8"/><stop offset=".9991" stop-color="#3e26a8"/></linearGradient>
<linearGradient id="r19"><stop offset=".0009" stop-color="#3e26a8"/><stop offset=".5617" stop-color="#3e27ab"/><stop offset=".5738" stop-color="#402ab4"/><stop offset=".5806" stop-color="#4230c4"/><stop offset=".5875" stop-color="#473fe2"/><stop offset=".5926" stop-color="#4758f8"/><stop offset=".5943" stop-color="#4563fc"/><stop offset=".5961" stop-color="#3d71ff"/><stop offset=".5978" stop-color="#2f80fa"/><stop offset=".6012" stop-color="#23a0e5"/><stop offset=".6029" stop-color="#15afd9"/><stop offset=".6046" stop-color="#04bbc2"/><stop offset=".6063" stop-color="#2dc4a6"/><stop offset=".6081" stop-color="#4dcc82"/><stop offset=".6098" stop-color="#84cb56"/><stop offset=".6115" stop-color="#bac430"/><stop offset=".6132" stop-color="#e3bc2c"/><stop offset=".6149" stop-color="#fcbd3d"/><stop offset=".6184" stop-color="#fad42e"/><stop offset=".6201" stop-color="#f9d82c"/><stop offset=".6218" stop-color="#fad52d"/><stop offset=".6235" stop-color="#fdcc32"/><stop offset=".6252" stop-color="#febd3c"/><stop offset=".6269" stop-color="#e1bc2b"/><stop offset=".6286" stop-color="#afc637"/><stop offset=".6304" stop-color="#69cd6a"/><stop offset=".6321" stop-color="#33c69d"/><stop offset=".6338" stop-color="#02bac4"/><stop offset=".6355" stop-color="#1da8e0"/><stop offset=".6389" stop-color="#347afd"/><stop offset=".6407" stop-color="#4563fc"/><stop offset=".6441" stop-color="#4743e7"/><stop offset=".6475" stop-color="#4332ca"/><stop offset=".6509" stop-color="#402bb7"/><stop offset=".6561" stop-color="#3e27ab"/><stop offset=".6664" stop-color="#3e28ac"/><stop offset=".6732" stop-color="#422fc1"/><stop offset=".6767" stop-color="#422fc1"/><stop offset=".6784" stop-color="#422ec0"/><stop offset=".6801" stop-color="#4433cc"/><stop offset=".6835" stop-color="#4747eb"/><stop offset=".687" stop-color="#475bf9"/><stop offset=".6921" stop-color="#3e6fff"/><stop offset=".6955" stop-color="#3c72ff"/><stop offset=".699" stop-color="#4367fd"/><stop offset=".7024" stop-color="#4854f5"/><stop offset=".7075" stop-color="#4538d7"/><stop offset=".711" stop-color="#422ebf"/><stop offset=".7161" stop-color="#3f28ad"/><stop offset=".7298" stop-color="#3e26a8"/><stop offset=".9991" stop-color="#3e26a8"/></linearGradient>
<linearGradient id="r20"><stop offset=".0009" stop-color="#3e26a8"/><stop offset=".5532" stop-color="#3e27ab"/><stop offset=".5669" stop-color="#402bb6"/><stop offset=".5738" stop-color="#4331c6"/><stop offset=".5806" stop-color="#4741e5"/><stop offset=".5858" stop-color="#475bf9"/><stop offset=".5875" stop-color="#4367fd"/><stop offset=".5892" stop-color="#3875fe"/><stop offset=".5909" stop-color="#2e85f8"/><stop offset=".5943" stop-color="#21a4e3"/><stop offset=".5961" stop-color="#0fb2d4"/><stop offset=".5978" stop-color="#0cbdbc"/><stop offset=".5995" stop-color="#31c69f"/><stop offset=".6012" stop-color="#57cc7a"/><stop offset=".6029" stop-color="#90ca4d"/><stop offset=".6046" stop-color="#c5c22a"/><stop offset=".6063" stop-color="#ecba32"/><stop offset=".6081" stop-color="#fec239"/><stop offset=".6115" stop-color="#f6de29"/><stop offset=".6132" stop-color="#f5e427"/><stop offset=".6149" stop-color="#f5e427"/><stop offset=".6166" stop-color="#f6dd29"/><stop offset=".6184" stop-color="#fcd130"/><stop offset=".6201" stop-color="#febe3c"/><stop offset=".6218" stop-color="#e0bc2a"/><stop offset=".6235" stop-color="#aac73a"/><stop offset=".6252" stop-color="#63cd70"/><stop offset=".6269" stop-color="#30c5a1"/><stop offset=".6286" stop-color="#01b9c7"/><stop offset=".6304" stop-color="#1ea7e1"/><stop offset=".6338" stop-color="#3579fd"/><stop offset=".6355" stop-color="#4563fd"/><stop offset=".6389" stop-color="#4744e8"/><stop offset=".6424" stop-color="#4433cc"/><stop offset=".6458" stop-color="#402bb8"/><stop offset=".6509" stop-color="#3e27ac"/><stop offset=".6612" stop-color="#3f28ad"/><stop offset=".6664" stop-color="#402ab5"/><stop offset=".675" stop-color="#4639da"/><stop offset=".6784" stop-color="#4741e4"/><stop offset=".6835" stop-color="#465efb"/><stop offset=".6887" stop-color="#347afd"/><stop offset=".6921" stop-color="#327cfc"/><stop offset=".6955" stop-color="#3d70ff"/><stop offset=".699" stop-color="#475bfa"/><stop offset=".7041" stop-color="#463cdf"/><stop offset=".7093" stop-color="#412dbb"/><stop offset=".7144" stop-color="#3e28ad"/><stop offset=".7333" stop-color="#3e26a8"/><stop offset=".9991" stop-color="#3e26a8"/></linearGradient>
<linearGradient id="r21"><stop offset=".0009" stop-color="#3e26a8"/><stop offset=".5446" stop-color="#3e27ab"/><stop offset=".5583" stop-color="#402ab5"/><stop offset=".5652" stop-color="#4330c5"/><stop offset=".572" stop-color="#463ee1"/><stop offset=".5789" stop-color="#4660fb"/><stop offset=".5806" stop-color="#406cfe"/><stop offset=".5823" stop-color="#337bfc"/><stop offset=".5875" stop-color="#1da8e0"/><stop offset=".5892" stop-color="#05b6ce"/><stop offset=".5909" stop-color="#1ac0b4"/><stop offset=".5926" stop-color="#38c896"/><stop offset=".5943" stop-color="#65cd6e"/><stop offset=".5961" stop-color="#9fc942"/><stop offset=".5978" stop-color="#d1bf27"/><stop offset=".5995" stop-color="#f5ba3a"/><stop offset=".6012" stop-color="#fec834"/><stop offset=".6046" stop-color="#f5e626"/><stop offset=".6063" stop-color="#f5ed22"/><stop offset=".6081" stop-color="#f5ee21"/><stop offset=".6098" stop-color="#f5ea24"/><stop offset=".6115" stop-color="#f6e028"/><stop offset=".6132" stop-color="#fccf30"/><stop offset=".6149" stop-color="#fbbc3d"/><stop offset=".6166" stop-color="#d5be28"/><stop offset=".6184" stop-color="#99c946"/><stop offset=".6201" stop-color="#52cc7e"/><stop offset=".6218" stop-color="#28c2ab"/><stop offset=".6235" stop-color="#05b6ce"/><stop offset=".6252" stop-color="#21a3e4"/><stop offset=".6286" stop-color="#3876fe"/><stop offset=".6304" stop-color="#4561fc"/><stop offset=".6338" stop-color="#4744e8"/><stop offset=".6372" stop-color="#4433cd"/><stop offset=".6407" stop-color="#412cb9"/><stop offset=".6475" stop-color="#3e27aa"/><stop offset=".6578" stop-color="#3f29b0"/><stop offset=".6647" stop-color="#422fc0"/><stop offset=".6698" stop-color="#463bde"/><stop offset=".675" stop-color="#4850f3"/><stop offset=".6801" stop-color="#4368fe"/><stop offset=".6835" stop-color="#337bfd"/><stop offset=".687" stop-color="#2e84f8"/><stop offset=".6904" stop-color="#3080fa"/><stop offset=".6938" stop-color="#3f6eff"/><stop offset=".6973" stop-color="#4757f7"/><stop offset=".7024" stop-color="#4539d9"/><stop offset=".7058" stop-color="#422fc1"/><stop offset=".711" stop-color="#3f28af"/><stop offset=".7213" stop-color="#3e26a8"/><stop offset=".9991" stop-color="#3e26a8"/></linearGradient>
<linearGradient id="r22"><stop offset=".0009" stop-color="#3e26a8"/><stop offset=".536" stop-color="#3e27ab"/><stop offset=".5497" stop-color="#402ab5"/><stop offset=".5583" stop-color="#4332ca"/><stop offset=".5652" stop-color="#4742e6"/><stop offset=".572" stop-color="#4465fd"/><stop offset=".5738" stop-color="#3c72ff"/><stop offset=".5755" stop-color="#2f83f9"/><stop offset=".5789" stop-color="#23a0e5"/><stop offset=".5806" stop-color="#17aeda"/><stop offset=".5823" stop-color="#02bac5"/><stop offset=".584" stop-color="#28c3ab"/><stop offset=".5858" stop-color="#44cb8a"/><stop offset=".5875" stop-color="#77cc5f"/><stop offset=".5892" stop-color="#b0c636"/><stop offset=".5909" stop-color="#debd29"/><stop offset=".5926" stop-color="#fcbc3d"/><stop offset=".5943" stop-color="#fccf31"/><stop offset=".5961" stop-color="#f6df29"/><stop offset=".5978" stop-color="#f5ec22"/><stop offset=".6012" stop-color="#f7f61a"/><stop offset=".6029" stop-color="#f6f21d"/><stop offset=".6046" stop-color="#f5ea24"/><stop offset=".6081" stop-color="#fec735"/><stop offset=".6098" stop-color="#eeba34"/><stop offset=".6115" stop-color="#bec32e"/><stop offset=".6132" stop-color="#7bcc5d"/><stop offset=".6149" stop-color="#3cc992"/><stop offset=".6166" stop-color="#13beb9"/><stop offset=".6184" stop-color="#14b0d8"/><stop offset=".6201" stop-color="#259ce7"/><stop offset=".6218" stop-color="#2e86f7"/><stop offset=".6235" stop-color="#3d70ff"/><stop offset=".6252" stop-color="#465efb"/><stop offset=".6286" stop-color="#4742e6"/><stop offset=".6321" stop-color="#4433cc"/><stop offset=".6355" stop-color="#412cb9"/><stop offset=".6424" stop-color="#3e27aa"/><stop offset=".6527" stop-color="#3f29b0"/><stop offset=".6595" stop-color="#422fc1"/><stop offset=".6647" stop-color="#463bdd"/><stop offset=".6698" stop-color="#4854f5"/><stop offset=".6732" stop-color="#4368fd"/><stop offset=".6784" stop-color="#2f82f9"/><stop offset=".6835" stop-color="#2d8df2"/><stop offset=".687" stop-color="#2e87f7"/><stop offset=".6887" stop-color="#3080fb"/><stop offset=".6921" stop-color="#4269fe"/><stop offset=".6955" stop-color="#4851f3"/><stop offset=".7007" stop-color="#4536d2"/><stop offset=".7041" stop-color="#412dbd"/><stop offset=".7093" stop-color="#3f28ad"/><stop offset=".723" stop-color="#3e26a8"/><stop offset=".9991" stop-color="#3e26a8"/></linearGradient>
<linearGradient id="r23"><stop offset=".0009" stop-color="#3e26a8"/><stop offset=".5257" stop-color="#3e27ab"/><stop offset=".5412" stop-color="#402bb6"/><stop offset=".5497" stop-color="#4332ca"/><stop offset=".5566" stop-color="#4742e6"/><stop offset=".5635" stop-color="#4562fc"/><stop offset=".5652" stop-color="#3f6eff"/><stop offset=".5669" stop-color="#327cfc"/><stop offset=".572" stop-color="#1fa6e2"/><stop offset=".5738" stop-color="#0cb3d2"/><stop offset=".5755" stop-color="#13beb8"/><stop offset=".5772" stop-color="#33c69d"/><stop offset=".5789" stop-color="#58cc79"/><stop offset=".5806" stop-color="#8fcb4e"/><stop offset=".5823" stop-color="#c2c22c"/><stop offset=".584" stop-color="#eaba31"/><stop offset=".5858" stop-color="#fec239"/><stop offset=".5892" stop-color="#f5e526"/><stop offset=".5926" stop-color="#f8f719"/><stop offset=".5943" stop-color="#f9fa16"/><stop offset=".5978" stop-color="#f6ef20"/><stop offset=".5995" stop-color="#f5e128"/><stop offset=".6012" stop-color="#fccf30"/><stop offset=".6029" stop-color="#fabb3d"/><stop offset=".6046" stop-color="#d3bf27"/><stop offset=".6063" stop-color="#97ca48"/><stop offset=".6081" stop-color="#54cc7d"/><stop offset=".6098" stop-color="#2bc3a8"/><stop offset=".6115" stop-color="#01b8c9"/><stop offset=".6132" stop-color="#1ea7e1"/><stop offset=".6149" stop-color="#2a93ee"/><stop offset=".6166" stop-color="#317efb"/><stop offset=".6184" stop-color="#4269fe"/><stop offset=".6218" stop-color="#484bef"/><stop offset=".6252" stop-color="#4538d7"/><stop offset=".6286" stop-color="#422fc0"/><stop offset=".6338" stop-color="#3f29b0"/><stop offset=".6389" stop-color="#3e27ab"/><stop offset=".6475" stop-color="#3f29b1"/><stop offset=".6527" stop-color="#412dbd"/><stop offset=".6595" stop-color="#463cde"/><stop offset=".6664" stop-color="#4660fc"/><stop offset=".6681" stop-color="#416cfe"/><stop offset=".6715" stop-color="#2f82f9"/><stop offset=".6767" stop-color="#2896eb"/><stop offset=".6801" stop-color="#2797ea"/><stop offset=".6835" stop-color="#2c8ff1"/><stop offset=".687" stop-color="#327cfc"/><stop offset=".6887" stop-color="#3e6fff"/><stop offset=".6921" stop-color="#4756f7"/><stop offset=".6973" stop-color="#4538d8"/><stop offset=".7024" stop-color="#412cb9"/><stop offset=".7075" stop-color="#3f28ad"/><stop offset=".7281" stop-color="#3e26a8"/><stop offset=".9991" stop-color="#3e26a8"/></linearGradient>
<linearGradient id="r24"><stop offset=".0009" stop-color="#3e26a8"/><stop offset=".5172" stop-color="#3e27ab"/><stop offset=".5326" stop-color="#402bb7"/><stop offset=".5412" stop-color="#4433cc"/><stop offset=".548" stop-color="#4742e6"/><stop offset=".5549" stop-color="#4562fc"/><stop offset=".5566" stop-color="#406dfe"/><stop offset=".5583" stop-color="#347afd"/><stop offset=".5635" stop-color="#21a3e4"/><stop offset=".5652" stop-color="#14b0d8"/><stop offset=".5669" stop-color="#02bac4"/><stop offset=".5686" stop-color="#27c2ab"/><stop offset=".5703" stop-color="#3fca8e"/><stop offset=".572" stop-color="#6dcd67"/><stop offset=".5738" stop-color="#a3c83f"/><stop offset=".5755" stop-color="#d7be28"/><stop offset=".5772" stop-color="#f8ba3d"/><stop offset=".5789" stop-color="#feca33"/><stop offset=".5823" stop-color="#f5e924"/><stop offset=".5858" stop-color="#f8f917"/><stop offset=".5875" stop-color="#f9fb15"/><stop offset=".5909" stop-color="#f6f020"/><stop offset=".5926" stop-color="#f5e327"/><stop offset=".5943" stop-color="#fcd12f"/><stop offset=".5961" stop-color="#fcbd3d"/><stop offset=".5978" stop-color="#dabd28"/><stop offset=".5995" stop-color="#a4c83e"/><stop offset=".6012" stop-color="#62cd70"/><stop offset=".6029" stop-color="#33c69d"/><stop offset=".6046" stop-color="#07bcbf"/><stop offset=".6063" stop-color="#17aedb"/><stop offset=".6081" stop-color="#259be8"/><stop offset=".6098" stop-color="#2e87f7"/><stop offset=".6115" stop-color="#3a73fe"/><stop offset=".6132" stop-color="#4561fc"/><stop offset=".6184" stop-color="#463de0"/><stop offset=".6235" stop-color="#422ebf"/><stop offset=".6304" stop-color="#3f28ad"/><stop offset=".6355" stop-color="#3e28ac"/><stop offset=".6441" stop-color="#402bb6"/><stop offset=".6492" stop-color="#4331c5"/><stop offset=".6544" stop-color="#473ee1"/><stop offset=".6595" stop-color="#4758f8"/><stop offset=".663" stop-color="#3e70ff"/><stop offset=".6647" stop-color="#327dfc"/><stop offset=".6698" stop-color="#2699e9"/><stop offset=".675" stop-color="#21a3e3"/><stop offset=".6801" stop-color="#2896ec"/><stop offset=".6835" stop-color="#2f82fa"/><stop offset=".6852" stop-color="#3975fe"/><stop offset=".687" stop-color="#4367fd"/><stop offset=".6904" stop-color="#484ff2"/><stop offset=".6955" stop-color="#4435d2"/><stop offset=".7007" stop-color="#402bb7"/><stop offset=".7075" stop-color="#3e27ab"/><stop offset=".9991" stop-color="#3e26a8"/></linearGradient>
<linearGradient id="r25"><stop offset=".0009" stop-color="#3e26a8"/><stop offset=".5069" stop-color="#3e27ab"/><stop offset=".5223" stop-color="#402bb6"/><stop offset=".5309" stop-color="#4332c9"/><stop offset=".5377" stop-color="#473fe2"/><stop offset=".5446" stop-color="#475af9"/><stop offset=".548" stop-color="#3f6efe"/><stop offset=".5497" stop-color="#337bfd"/><stop offset=".5549" stop-color="#22a2e4"/><stop offset=".5566" stop-color="#16afda"/><stop offset=".5583" stop-color="#01b9c7"/><stop offset=".56" stop-color="#21c1b0"/><stop offset=".5617" stop-color="#39c895"/><stop offset=".5635" stop-color="#60cd72"/><stop offset=".5652" stop-color="#93ca4b"/><stop offset=".5669" stop-color="#c2c22c"/><stop offset=".5686" stop-color="#e7bb2e"/><stop offset=".5703" stop-color="#febf3b"/><stop offset=".5738" stop-color="#f6e028"/><stop offset=".5755" stop-color="#f5ee21"/><stop offset=".5789" stop-color="#f9f916"/><stop offset=".5823" stop-color="#f7f51b"/><stop offset=".5858" stop-color="#f6df29"/><stop offset=".5875" stop-color="#fdcd31"/><stop offset=".5892" stop-color="#fabb3d"/><stop offset=".5909" stop-color="#d7be28"/><stop offset=".5926" stop-color="#a3c83e"/><stop offset=".5943" stop-color="#65cd6e"/><stop offset=".5961" stop-color="#35c79a"/><stop offset=".5978" stop-color="#0ebdbb"/><stop offset=".5995" stop-color="#12b1d6"/><stop offset=".6012" stop-color="#239fe5"/><stop offset=".6046" stop-color="#347afd"/><stop offset=".6063" stop-color="#4368fd"/><stop offset=".6098" stop-color="#484cf0"/><stop offset=".6149" stop-color="#4434cf"/><stop offset=".6184" stop-color="#412dbd"/><stop offset=".6252" stop-color="#3e27ac"/><stop offset=".6355" stop-color="#3f29b1"/><stop offset=".6424" stop-color="#422fc2"/><stop offset=".6492" stop-color="#4740e4"/><stop offset=".6544" stop-color="#465dfa"/><stop offset=".6561" stop-color="#4368fe"/><stop offset=".6578" stop-color="#3875fe"/><stop offset=".6595" stop-color="#2f82f9"/><stop offset=".6647" stop-color="#23a1e5"/><stop offset=".6698" stop-color="#19addc"/><stop offset=".675" stop-color="#21a4e3"/><stop offset=".6784" stop-color="#2b92ee"/><stop offset=".6818" stop-color="#3578fd"/><stop offset=".6835" stop-color="#426afe"/><stop offset=".687" stop-color="#4852f4"/><stop offset=".6921" stop-color="#4537d6"/><stop offset=".6973" stop-color="#412cba"/><stop offset=".7041" stop-color="#3e27ac"/><stop offset=".7642" stop-color="#3e26a8"/><stop offset=".9991" stop-color="#3e26a8"/></linearGradient>
<linearGradient id="r26"><stop offset=".0009" stop-color="#3e26a8"/><stop offset=".4966" stop-color="#3e27ab"/><stop offset=".512" stop-color="#402bb6"/><stop offset=".5206" stop-color="#4331c7"/><stop offset=".5292" stop-color="#4741e5"/><stop offset=".536" stop-color="#475dfa"/><stop offset=".5395" stop-color="#3c71ff"/><stop offset=".5412" stop-color="#317dfb"/><stop offset=".5463" stop-color="#21a3e3"/><stop offset=".548" stop-color="#15afd9"/><stop offset=".5497" stop-color="#01b9c6"/><stop offset=".5515" stop-color="#20c1b1"/><stop offset=".5532" stop-color="#37c897"/><stop offset=".5549" stop-color="#5bcc76"/><stop offset=".5566" stop-color="#8ccb50"/><stop offset=".5583" stop-color="#bac430"/><stop offset=".56" stop-color="#e0bc2a"/><stop offset=".5617" stop-color="#fabc3d"/><stop offset=".5635" stop-color="#fdcb33"/><stop offset=".5669" stop-color="#f5e725"/><stop offset=".5703" stop-color="#f8f61a"/><stop offset=".5738" stop-color="#f8f719"/><stop offset=".5772" stop-color="#f5e626"/><stop offset=".5806" stop-color="#fec636"/><stop offset=".5823" stop-color="#f1ba37"/><stop offset=".584" stop-color="#cbc029"/><stop offset=".5858" stop-color="#97ca48"/><stop offset=".5875" stop-color="#5ccc76"/><stop offset=".5892" stop-color="#32c69e"/><stop offset=".5909" stop-color="#0bbdbd"/><stop offset=".5926" stop-color="#12b1d6"/><stop offset=".5943" stop-color="#23a0e5"/><stop offset=".5978" stop-color="#317dfc"/><stop offset=".5995" stop-color="#416bfe"/><stop offset=".6029" stop-color="#4850f3"/><stop offset=".6081" stop-color="#4536d4"/><stop offset=".6132" stop-color="#412dbb"/><stop offset=".6201" stop-color="#3e27ab"/><stop offset=".6304" stop-color="#402ab4"/><stop offset=".6372" stop-color="#4331c7"/><stop offset=".6424" stop-color="#463ee1"/><stop offset=".6492" stop-color="#4561fc"/><stop offset=".6509" stop-color="#3f6dfe"/><stop offset=".6527" stop-color="#317dfc"/><stop offset=".6578" stop-color="#239fe5"/><stop offset=".663" stop-color="#0db3d3"/><stop offset=".6647" stop-color="#07b5cf"/><stop offset=".6681" stop-color="#0ab4d2"/><stop offset=".6715" stop-color="#1caadf"/><stop offset=".6767" stop-color="#2d89f5"/><stop offset=".6784" stop-color="#337bfc"/><stop offset=".6801" stop-color="#406cfe"/><stop offset=".6835" stop-color="#4853f4"/><stop offset=".6887" stop-color="#4538d8"/><stop offset=".6938" stop-color="#412dbd"/><stop offset=".7007" stop-color="#3f28ad"/><stop offset=".7213" stop-color="#3e26a8"/><stop offset=".9991" stop-color="#3e26a8"/></linearGradient>
<linearGradient id="r27"><stop offset=".0009" stop-color="#3e26a8"/><stop offset=".4846" stop-color="#3e27ab"/><stop offset=".5017" stop-color="#402bb6"/><stop offset=".5103" stop-color="#4331c6"/><stop offset=".5189" stop-color="#473fe3"/><stop offset=".5274" stop-color="#4561fc"/><stop offset=".5292" stop-color="#416bfe"/><stop offset=".5326" stop-color="#2f82f9"/><stop offset=".536" stop-color="#269be8"/><stop offset=".5377" stop-color="#1ea7e1"/><stop offset=".5395" stop-color="#0fb2d5"/><stop offset=".5412" stop-color="#03bbc2"/><stop offset=".5429" stop-color="#26c2ad"/><stop offset=".5446" stop-color="#3ac994"/><stop offset=".5463" stop-color="#5fcd73"/><stop offset=".548" stop-color="#8dcb4f"/><stop offset=".5497" stop-color="#b9c430"/><stop offset=".5515" stop-color="#debd29"/><stop offset=".5532" stop-color="#f9ba3d"/><stop offset=".5549" stop-color="#fec835"/><stop offset=".5583" stop-color="#f5e427"/><stop offset=".5617" stop-color="#f7f41c"/><stop offset=".5652" stop-color="#f8f61a"/><stop offset=".5686" stop-color="#f5eb23"/><stop offset=".572" stop-color="#fcd030"/><stop offset=".5738" stop-color="#febf3b"/><stop offset=".5755" stop-color="#e1bc2b"/><stop offset=".5772" stop-color="#b7c532"/><stop offset=".5789" stop-color="#81cc58"/><stop offset=".5806" stop-color="#4bcb84"/><stop offset=".5823" stop-color="#2cc4a7"/><stop offset=".584" stop-color="#03bbc3"/><stop offset=".5858" stop-color="#16aeda"/><stop offset=".5875" stop-color="#249ee6"/><stop offset=".5909" stop-color="#317dfc"/><stop offset=".5926" stop-color="#406cfe"/><stop offset=".5961" stop-color="#4852f4"/><stop offset=".6012" stop-color="#4538d8"/><stop offset=".6063" stop-color="#422ebe"/><stop offset=".6132" stop-color="#3f28ad"/><stop offset=".6235" stop-color="#402ab3"/><stop offset=".6304" stop-color="#4331c6"/><stop offset=".6355" stop-color="#463cdf"/><stop offset=".6424" stop-color="#465efb"/><stop offset=".6441" stop-color="#4269fe"/><stop offset=".6458" stop-color="#3776fe"/><stop offset=".6475" stop-color="#2e84f9"/><stop offset=".6509" stop-color="#259ce7"/><stop offset=".6544" stop-color="#14b0d8"/><stop offset=".6561" stop-color="#06b5cf"/><stop offset=".6578" stop-color="#01b9c6"/><stop offset=".6612" stop-color="#08bcbf"/><stop offset=".6647" stop-color="#01b9c6"/><stop offset=".6664" stop-color="#06b6ce"/><stop offset=".6681" stop-color="#15afd9"/><stop offset=".6732" stop-color="#2c8ef2"/><stop offset=".675" stop-color="#307ffb"/><stop offset=".6767" stop-color="#3e6fff"/><stop offset=".6784" stop-color="#4660fc"/><stop offset=".6835" stop-color="#473fe3"/><stop offset=".6887" stop-color="#4230c4"/><stop offset=".6955" stop-color="#3f29b1"/><stop offset=".7075" stop-color="#3e26a9"/><stop offset=".9991" stop-color="#3e26a8"/></linearGradient>
<linearGradient id="r28"><stop offset=".0009" stop-color="#3e26a8"/><stop offset=".4743" stop-color="#3e27ab"/><stop offset=".4914" stop-color="#402bb6"/><stop offset=".5" stop-color="#4331c6"/><stop offset=".5086" stop-color="#473fe2"/><stop offset=".5172" stop-color="#465ffb"/><stop offset=".5206" stop-color="#3b72ff"/><stop offset=".5223" stop-color="#317efb"/><stop offset=".5274" stop-color="#23a1e5"/><stop offset=".5292" stop-color="#1aacdd"/><stop offset=".5309" stop-color="#05b6cd"/><stop offset=".5326" stop-color="#0fbeba"/><stop offset=".5343" stop-color="#2dc4a5"/><stop offset=".536" stop-color="#43ca8b"/><stop offset=".5377" stop-color="#6acd6a"/><stop offset=".5395" stop-color="#97ca48"/><stop offset=".5412" stop-color="#c0c32d"/><stop offset=".5429" stop-color="#e1bc2b"/><stop offset=".5446" stop-color="#fabb3d"/><stop offset=".5463" stop-color="#fec835"/><stop offset=".5497" stop-color="#f5e227"/><stop offset=".5532" stop-color="#f6f21e"/><stop offset=".5566" stop-color="#f7f51b"/><stop offset=".56" stop-color="#f5eb23"/><stop offset=".5635" stop-color="#fbd42e"/><stop offset=".5652" stop-color="#fec438"/><stop offset=".5669" stop-color="#f1ba37"/><stop offset=".5686" stop-color="#d0c028"/><stop offset=".5703" stop-color="#a2c83f"/><stop offset=".572" stop-color="#6dcd68"/><stop offset=".5738" stop-color="#3eca8f"/><stop offset=".5755" stop-color="#1ec0b2"/><stop offset=".5772" stop-color="#02b7cb"/><stop offset=".5789" stop-color="#1caadf"/><stop offset=".584" stop-color="#347afd"/><stop offset=".5858" stop-color="#426afe"/><stop offset=".5892" stop-color="#4852f4"/><stop offset=".5943" stop-color="#4639d9"/><stop offset=".6012" stop-color="#412cba"/><stop offset=".6063" stop-color="#3f28af"/><stop offset=".6166" stop-color="#402ab3"/><stop offset=".6235" stop-color="#4331c6"/><stop offset=".6304" stop-color="#4742e6"/><stop offset=".6372" stop-color="#4366fd"/><stop offset=".6389" stop-color="#3a73fe"/><stop offset=".6407" stop-color="#2f81fa"/><stop offset=".6458" stop-color="#20a5e3"/><stop offset=".6475" stop-color="#17aeda"/><stop offset=".6492" stop-color="#05b6ce"/><stop offset=".6509" stop-color="#03bbc3"/><stop offset=".6527" stop-color="#14bfb8"/><stop offset=".6544" stop-color="#20c1b1"/><stop offset=".6561" stop-color="#24c1ae"/><stop offset=".6578" stop-color="#23c1af"/><stop offset=".6595" stop-color="#1cc0b3"/><stop offset=".663" stop-color="#01b9c6"/><stop offset=".6647" stop-color="#0bb3d2"/><stop offset=".6664" stop-color="#1babde"/><stop offset=".6698" stop-color="#2a92ee"/><stop offset=".6715" stop-color="#2e84f8"/><stop offset=".6732" stop-color="#3975fe"/><stop offset=".675" stop-color="#4466fd"/><stop offset=".6801" stop-color="#4743e7"/><stop offset=".6852" stop-color="#4330c5"/><stop offset=".6904" stop-color="#3f29b2"/><stop offset=".7041" stop-color="#3e27a9"/><stop offset=".9991" stop-color="#3e26a8"/></linearGradient>
<linearGradient id="r29"><stop offset=".0009" stop-color="#3e26a8"/><stop offset=".4623" stop-color="#3e27ab"/><stop offset=".4811" stop-color="#402bb7"/><stop offset=".4914" stop-color="#4433cc"/><stop offset=".5" stop-color="#4744e8"/><stop offset=".5069" stop-color="#465efb"/><stop offset=".5103" stop-color="#3d71ff"/><stop offset=".512" stop-color="#327cfc"/><stop offset=".5172" stop-color="#249de6"/><stop offset=".5189" stop-color="#1da8e0"/><stop offset=".5223" stop-color="#03bbc3"/><stop offset=".524" stop-color="#23c1af"/><stop offset=".5257" stop-color="#36c899"/><stop offset=".5274" stop-color="#54cc7d"/><stop offset=".5309" stop-color="#a7c73c"/><stop offset=".5326" stop-color="#cbc029"/><stop offset=".5343" stop-color="#e9bb2f"/><stop offset=".536" stop-color="#fdbd3d"/><stop offset=".5377" stop-color="#feca33"/><stop offset=".5412" stop-color="#f5e227"/><stop offset=".5446" stop-color="#f6f01f"/><stop offset=".548" stop-color="#f7f31d"/><stop offset=".5515" stop-color="#f5ea24"/><stop offset=".5549" stop-color="#fad42e"/><stop offset=".5566" stop-color="#fec636"/><stop offset=".5583" stop-color="#f5ba3a"/><stop offset=".56" stop-color="#d8be28"/><stop offset=".5617" stop-color="#b0c636"/><stop offset=".5635" stop-color="#7fcc5a"/><stop offset=".5652" stop-color="#4ecc81"/><stop offset=".5669" stop-color="#30c5a2"/><stop offset=".5686" stop-color="#0dbdbc"/><stop offset=".5703" stop-color="#0bb3d2"/><stop offset=".572" stop-color="#1fa6e2"/><stop offset=".5755" stop-color="#2e86f8"/><stop offset=".5772" stop-color="#3876fe"/><stop offset=".5789" stop-color="#4367fd"/><stop offset=".584" stop-color="#4747eb"/><stop offset=".5892" stop-color="#4435d1"/><stop offset=".5961" stop-color="#402ab5"/><stop offset=".6063" stop-color="#3f28af"/><stop offset=".6149" stop-color="#422fc1"/><stop offset=".6218" stop-color="#463bde"/><stop offset=".6286" stop-color="#475bf9"/><stop offset=".6304" stop-color="#4465fd"/><stop offset=".6321" stop-color="#3c72ff"/><stop offset=".6338" stop-color="#307ffb"/><stop offset=".6389" stop-color="#21a4e3"/><stop offset=".6407" stop-color="#17aeda"/><stop offset=".6424" stop-color="#05b6cd"/><stop offset=".6441" stop-color="#06bcc0"/><stop offset=".6458" stop-color="#1cc0b3"/><stop offset=".6475" stop-color="#2ac3a9"/><stop offset=".6509" stop-color="#33c69d"/><stop offset=".6544" stop-color="#30c5a2"/><stop offset=".6561" stop-color="#29c3a9"/><stop offset=".6578" stop-color="#1bc0b4"/><stop offset=".6595" stop-color="#05bbc1"/><stop offset=".6612" stop-color="#06b5cf"/><stop offset=".663" stop-color="#19acdc"/><stop offset=".6698" stop-color="#3579fd"/><stop offset=".6715" stop-color="#426afe"/><stop offset=".675" stop-color="#4853f4"/><stop offset=".6801" stop-color="#4639d9"/><stop offset=".6852" stop-color="#412dbc"/><stop offset=".6904" stop-color="#3f28ad"/><stop offset=".699" stop-color="#3e27a9"/><stop offset=".9991" stop-color="#3e26a8"/></linearGradient>
<linearGradient id="r30"><stop offset=".0009" stop-color="#3e26a8"/><stop offset=".4503" stop-color="#3e27ab"/><stop offset=".4691" stop-color="#402bb7"/><stop offset=".4794" stop-color="#4332ca"/><stop offset=".488" stop-color="#4741e4"/><stop offset=".4966" stop-color="#465ffb"/><stop offset=".5" stop-color="#3d70ff"/><stop offset=".5017" stop-color="#327cfc"/><stop offset=".5069" stop-color="#259ce7"/><stop offset=".5086" stop-color="#1ea7e1"/><stop offset=".5103" stop-color="#12b1d6"/><stop offset=".512" stop-color="#01b9c6"/><stop offset=".5154" stop-color="#31c6a0"/><stop offset=".5172" stop-color="#48cb86"/><stop offset=".5206" stop-color="#95ca49"/><stop offset=".5223" stop-color="#bbc42f"/><stop offset=".524" stop-color="#dbbd29"/><stop offset=".5257" stop-color="#f3ba39"/><stop offset=".5274" stop-color="#fec239"/><stop offset=".5326" stop-color="#f5e427"/><stop offset=".536" stop-color="#f6ef20"/><stop offset=".5395" stop-color="#f6f11f"/><stop offset=".5429" stop-color="#f5e725"/><stop offset=".5463" stop-color="#fbd22f"/><stop offset=".548" stop-color="#fec437"/><stop offset=".5497" stop-color="#f5ba3a"/><stop offset=".5515" stop-color="#dabd28"/><stop offset=".5532" stop-color="#b5c533"/><stop offset=".5549" stop-color="#87cb54"/><stop offset=".5566" stop-color="#58cc79"/><stop offset=".5583" stop-color="#35c79a"/><stop offset=".5617" stop-color="#01b7ca"/><stop offset=".5635" stop-color="#1aacdd"/><stop offset=".5669" stop-color="#2c90f0"/><stop offset=".5686" stop-color="#2f81fa"/><stop offset=".5703" stop-color="#3b72fe"/><stop offset=".572" stop-color="#4465fd"/><stop offset=".5772" stop-color="#4746ea"/><stop offset=".5823" stop-color="#4435d1"/><stop offset=".5875" stop-color="#412dbb"/><stop offset=".5978" stop-color="#3f28ae"/><stop offset=".6063" stop-color="#412ebd"/><stop offset=".6132" stop-color="#4538d7"/><stop offset=".6201" stop-color="#4852f4"/><stop offset=".6235" stop-color="#4466fd"/><stop offset=".6252" stop-color="#3c72ff"/><stop offset=".6269" stop-color="#307ffb"/><stop offset=".6321" stop-color="#21a4e3"/><stop offset=".6338" stop-color="#17aeda"/><stop offset=".6355" stop-color="#03b7cc"/><stop offset=".6372" stop-color="#0abdbd"/><stop offset=".6389" stop-color="#23c1af"/><stop offset=".6424" stop-color="#37c897"/><stop offset=".6458" stop-color="#44cb89"/><stop offset=".6475" stop-color="#44cb89"/><stop offset=".6509" stop-color="#38c896"/><stop offset=".6527" stop-color="#2ec5a3"/><stop offset=".6544" stop-color="#20c1b1"/><stop offset=".6561" stop-color="#07bcc0"/><stop offset=".6578" stop-color="#07b5cf"/><stop offset=".6595" stop-color="#1aacdd"/><stop offset=".663" stop-color="#2a93ed"/><stop offset=".6664" stop-color="#3678fd"/><stop offset=".6681" stop-color="#426afe"/><stop offset=".6732" stop-color="#484bef"/><stop offset=".6784" stop-color="#4537d6"/><stop offset=".6852" stop-color="#412cba"/><stop offset=".6938" stop-color="#3e27ac"/><stop offset=".7847" stop-color="#3e26a8"/><stop offset=".9991" stop-color="#3e26a8"/></linearGradient>
<linearGradient id="r31"><stop offset=".0009" stop-color="#3e26a8"/><stop offset=".4383" stop-color="#3e27ab"/><stop offset=".4571" stop-color="#402bb7"/><stop offset=".4674" stop-color="#4332c9"/><stop offset=".4777" stop-color="#4743e7"/><stop offset=".4863" stop-color="#4562fc"/><stop offset=".4897" stop-color="#3a73fe"/><stop offset=".4914" stop-color="#317efb"/><stop offset=".4966" stop-color="#259ce7"/><stop offset=".5" stop-color="#13b0d7"/><stop offset=".5017" stop-color="#01b9c6"/><stop offset=".5051" stop-color="#30c5a1"/><stop offset=".5069" stop-color="#44cb89"/><stop offset=".5086" stop-color="#66cd6d"/><stop offset=".512" stop-color="#b2c635"/><stop offset=".5137" stop-color="#d2bf27"/><stop offset=".5154" stop-color="#ebba31"/><stop offset=".5172" stop-color="#fdbd3d"/><stop offset=".5206" stop-color="#fad42e"/><stop offset=".5257" stop-color="#f5eb23"/><stop offset=".5309" stop-color="#f5ee21"/><stop offset=".5343" stop-color="#f5e327"/><stop offset=".5377" stop-color="#fdce31"/><stop offset=".5395" stop-color="#fec13a"/><stop offset=".5412" stop-color="#f1ba37"/><stop offset=".5429" stop-color="#d6be28"/><stop offset=".5446" stop-color="#b2c635"/><stop offset=".548" stop-color="#5acc77"/><stop offset=".5497" stop-color="#37c897"/><stop offset=".5515" stop-color="#21c1b0"/><stop offset=".5532" stop-color="#01b9c6"/><stop offset=".5549" stop-color="#15afd9"/><stop offset=".5566" stop-color="#21a3e4"/><stop offset=".5617" stop-color="#3479fd"/><stop offset=".5635" stop-color="#416cfe"/><stop offset=".5669" stop-color="#4756f7"/><stop offset=".5738" stop-color="#4539d9"/><stop offset=".5789" stop-color="#422fc2"/><stop offset=".5892" stop-color="#3e27ac"/><stop offset=".5978" stop-color="#412dbc"/><stop offset=".6046" stop-color="#4535d2"/><stop offset=".6115" stop-color="#484cef"/><stop offset=".6166" stop-color="#4368fd"/><stop offset=".6184" stop-color="#3a74fe"/><stop offset=".6201" stop-color="#2f81fa"/><stop offset=".6235" stop-color="#2699e9"/><stop offset=".6269" stop-color="#15afd9"/><stop offset=".6286" stop-color="#01b8ca"/><stop offset=".6304" stop-color="#0fbeba"/><stop offset=".6321" stop-color="#28c2ab"/><stop offset=".6372" stop-color="#4ecc81"/><stop offset=".6389" stop-color="#59cc78"/><stop offset=".6407" stop-color="#5fcd73"/><stop offset=".6424" stop-color="#5ecd74"/><stop offset=".6441" stop-color="#58cc79"/><stop offset=".6475" stop-color="#3dc990"/><stop offset=".6509" stop-color="#24c1af"/><stop offset=".6527" stop-color="#04bbc1"/><stop offset=".6544" stop-color="#0ab4d2"/><stop offset=".6561" stop-color="#1caadf"/><stop offset=".6595" stop-color="#2b90f0"/><stop offset=".6612" stop-color="#2e83f9"/><stop offset=".663" stop-color="#3974fe"/><stop offset=".6647" stop-color="#4367fd"/><stop offset=".6698" stop-color="#4848ec"/><stop offset=".675" stop-color="#4536d4"/><stop offset=".6818" stop-color="#412dbd"/><stop offset=".6955" stop-color="#3e27ac"/><stop offset=".7642" stop-color="#3e26a8"/><stop offset=".9991" stop-color="#3e26a8"/></linearGradient>
<linearGradient id="r32"><stop offset=".0009" stop-color="#3e26a8"/><stop offset=".4245" stop-color="#3e27ab"/><stop offset=".4451" stop-color="#402bb7"/><stop offset=".4571" stop-color="#4434ce"/><stop offset=".4674" stop-color="#4747eb"/><stop offset=".476" stop-color="#4367fd"/><stop offset=".4794" stop-color="#3579fd"/><stop offset=".488" stop-color="#1caadf"/><stop offset=".4914" stop-color="#02bac4"/><stop offset=".4931" stop-color="#1cc0b4"/><stop offset=".4966" stop-color="#43ca8b"/><stop offset=".4983" stop-color="#68cd6c"/><stop offset=".5" stop-color="#88cb53"/><stop offset=".5017" stop-color="#b0c636"/><stop offset=".5034" stop-color="#cfc028"/><stop offset=".5051" stop-color="#e8bb2e"/><stop offset=".5069" stop-color="#fabb3d"/><stop offset=".5086" stop-color="#fec537"/><stop offset=".5137" stop-color="#f5e227"/><stop offset=".5189" stop-color="#f5ed21"/><stop offset=".524" stop-color="#f5e526"/><stop offset=".5292" stop-color="#fec835"/><stop offset=".5309" stop-color="#fcbc3d"/><stop offset=".5326" stop-color="#e8bb2f"/><stop offset=".5343" stop-color="#ccc028"/><stop offset=".536" stop-color="#a9c73b"/><stop offset=".5395" stop-color="#55cc7b"/><stop offset=".5412" stop-color="#36c899"/><stop offset=".5429" stop-color="#21c1b0"/><stop offset=".5446" stop-color="#02bac5"/><stop offset=".5463" stop-color="#13b0d7"/><stop offset=".548" stop-color="#20a5e3"/><stop offset=".5532" stop-color="#317efb"/><stop offset=".5549" stop-color="#3d70ff"/><stop offset=".5583" stop-color="#475af9"/><stop offset=".5652" stop-color="#463cdf"/><stop offset=".5755" stop-color="#402bb8"/><stop offset=".5789" stop-color="#3f28ad"/><stop offset=".5823" stop-color="#3f29b0"/><stop offset=".5943" stop-color="#4331c8"/><stop offset=".6012" stop-color="#4741e5"/><stop offset=".6081" stop-color="#4660fc"/><stop offset=".6098" stop-color="#416bfe"/><stop offset=".6132" stop-color="#2e84f9"/><stop offset=".6166" stop-color="#259ce7"/><stop offset=".6184" stop-color="#1ea7e1"/><stop offset=".6218" stop-color="#01b9c7"/><stop offset=".6252" stop-color="#2cc4a6"/><stop offset=".6269" stop-color="#38c895"/><stop offset=".6321" stop-color="#6ccd68"/><stop offset=".6338" stop-color="#77cc60"/><stop offset=".6355" stop-color="#7ccc5c"/><stop offset=".6372" stop-color="#7acc5e"/><stop offset=".6389" stop-color="#72cd64"/><stop offset=".6424" stop-color="#53cc7e"/><stop offset=".6441" stop-color="#3eca8f"/><stop offset=".6475" stop-color="#20c1b1"/><stop offset=".6492" stop-color="#03bbc2"/><stop offset=".6509" stop-color="#0cb3d3"/><stop offset=".6527" stop-color="#1ea7e1"/><stop offset=".6561" stop-color="#2c8ef1"/><stop offset=".6578" stop-color="#2f80fa"/><stop offset=".6595" stop-color="#3b72ff"/><stop offset=".6612" stop-color="#4465fd"/><stop offset=".6664" stop-color="#4747eb"/><stop offset=".6715" stop-color="#4434ce"/><stop offset=".6767" stop-color="#412cb9"/><stop offset=".6835" stop-color="#3f29b0"/><stop offset=".7213" stop-color="#3e26a8"/><stop offset=".9991" stop-color="#3e26a8"/></linearGradient>
<linearGradient id="r33"><stop offset=".0009" stop-color="#3e26a8"/><stop offset=".4108" stop-color="#3e27ab"/><stop offset=".4314" stop-color="#402bb7"/><stop offset=".4434" stop-color="#4332cb"/><stop offset=".4537" stop-color="#4743e7"/><stop offset=".464" stop-color="#4465fd"/><stop offset=".4674" stop-color="#3777fe"/><stop offset=".4691" stop-color="#2f80fa"/><stop offset=".4743" stop-color="#259ce7"/><stop offset=".4777" stop-color="#16afd9"/><stop offset=".4794" stop-color="#04b6cc"/><stop offset=".4811" stop-color="#0abdbd"/><stop offset=".4828" stop-color="#26c2ac"/><stop offset=".4846" stop-color="#35c79a"/><stop offset=".4863" stop-color="#4ccb83"/><stop offset=".4897" stop-color="#90ca4d"/><stop offset=".4914" stop-color="#b1c635"/><stop offset=".4931" stop-color="#cec028"/><stop offset=".4949" stop-color="#e6bb2d"/><stop offset=".4966" stop-color="#f8ba3d"/><stop offset=".4983" stop-color="#fec437"/><stop offset=".5034" stop-color="#f6e028"/><stop offset=".5086" stop-color="#f5eb23"/><stop offset=".5137" stop-color="#f5e526"/><stop offset=".5189" stop-color="#fdcb33"/><stop offset=".5206" stop-color="#fec03b"/><stop offset=".5223" stop-color="#f2ba38"/><stop offset=".524" stop-color="#dbbd29"/><stop offset=".5257" stop-color="#bdc32e"/><stop offset=".5274" stop-color="#99c946"/><stop offset=".5309" stop-color="#4acb84"/><stop offset=".5343" stop-color="#1bc0b4"/><stop offset=".536" stop-color="#01b9c7"/><stop offset=".5377" stop-color="#14b0d8"/><stop offset=".5395" stop-color="#20a5e3"/><stop offset=".5429" stop-color="#2d8cf3"/><stop offset=".5446" stop-color="#3080fa"/><stop offset=".548" stop-color="#4367fd"/><stop offset=".5549" stop-color="#4746ea"/><stop offset=".5617" stop-color="#4433cd"/><stop offset=".5686" stop-color="#402bb6"/><stop offset=".5789" stop-color="#412cb9"/><stop offset=".584" stop-color="#422fc1"/><stop offset=".5926" stop-color="#473fe2"/><stop offset=".5995" stop-color="#475cfa"/><stop offset=".6029" stop-color="#3d70ff"/><stop offset=".6046" stop-color="#327cfc"/><stop offset=".6098" stop-color="#23a0e5"/><stop offset=".6115" stop-color="#1babde"/><stop offset=".6132" stop-color="#0ab4d1"/><stop offset=".6149" stop-color="#04bbc2"/><stop offset=".6166" stop-color="#20c1b1"/><stop offset=".6201" stop-color="#3fca8e"/><stop offset=".6252" stop-color="#7ecc5b"/><stop offset=".6269" stop-color="#8ccb50"/><stop offset=".6286" stop-color="#94ca4a"/><stop offset=".6304" stop-color="#96ca48"/><stop offset=".6321" stop-color="#93ca4a"/><stop offset=".6338" stop-color="#8acb52"/><stop offset=".6355" stop-color="#7bcc5d"/><stop offset=".6407" stop-color="#3bc992"/><stop offset=".6424" stop-color="#2dc4a5"/><stop offset=".6458" stop-color="#01b9c8"/><stop offset=".6475" stop-color="#13b0d7"/><stop offset=".6492" stop-color="#1fa5e2"/><stop offset=".6544" stop-color="#317efb"/><stop offset=".6561" stop-color="#3c71ff"/><stop offset=".6595" stop-color="#475af9"/><stop offset=".6664" stop-color="#463bde"/><stop offset=".6732" stop-color="#412ebe"/><stop offset=".6801" stop-color="#3f28ad"/><stop offset=".7521" stop-color="#3e26a8"/><stop offset=".9991" stop-color="#3e26a8"/></linearGradient>
<linearGradient id="r34"><stop offset=".0009" stop-color="#3e26a8"/><stop offset=".3971" stop-color="#3e27ab"/><stop offset=".4194" stop-color="#402bb8"/><stop offset=".4314" stop-color="#4433cd"/><stop offset=".4417" stop-color="#4744e9"/><stop offset=".452" stop-color="#4466fd"/><stop offset=".4571" stop-color="#3080fa"/><stop offset=".4623" stop-color="#259be8"/><stop offset=".4657" stop-color="#19addc"/><stop offset=".4674" stop-color="#07b5d0"/><stop offset=".4691" stop-color="#04bbc2"/><stop offset=".4708" stop-color="#1ec0b2"/><stop offset=".4743" stop-color="#40ca8d"/><stop offset=".4777" stop-color="#7ccc5c"/><stop offset=".4794" stop-color="#9ec943"/><stop offset=".4811" stop-color="#bcc42f"/><stop offset=".4828" stop-color="#d6be28"/><stop offset=".4846" stop-color="#ebba31"/><stop offset=".4863" stop-color="#fabb3d"/><stop offset=".488" stop-color="#fec437"/><stop offset=".4931" stop-color="#f6de29"/><stop offset=".4983" stop-color="#f5e924"/><stop offset=".5034" stop-color="#f5e327"/><stop offset=".5086" stop-color="#fdcc32"/><stop offset=".5103" stop-color="#fec239"/><stop offset=".512" stop-color="#f6ba3b"/><stop offset=".5137" stop-color="#e2bc2b"/><stop offset=".5154" stop-color="#c8c129"/><stop offset=".5172" stop-color="#a8c73b"/><stop offset=".5206" stop-color="#5dcc75"/><stop offset=".5223" stop-color="#3dc990"/><stop offset=".524" stop-color="#2cc4a7"/><stop offset=".5257" stop-color="#0fbeba"/><stop offset=".5274" stop-color="#03b7cc"/><stop offset=".5292" stop-color="#18aedb"/><stop offset=".5343" stop-color="#2d8bf3"/><stop offset=".536" stop-color="#3080fa"/><stop offset=".5395" stop-color="#4369fe"/><stop offset=".5463" stop-color="#4848ec"/><stop offset=".5532" stop-color="#4434d0"/><stop offset=".5583" stop-color="#422ebf"/><stop offset=".5703" stop-color="#402ab4"/><stop offset=".5755" stop-color="#422ec0"/><stop offset=".584" stop-color="#473ee1"/><stop offset=".5926" stop-color="#4562fc"/><stop offset=".5943" stop-color="#416cfe"/><stop offset=".5978" stop-color="#2e83f9"/><stop offset=".6012" stop-color="#269ae9"/><stop offset=".6046" stop-color="#16afd9"/><stop offset=".6063" stop-color="#02b7cb"/><stop offset=".6081" stop-color="#0ebdbb"/><stop offset=".6098" stop-color="#28c3aa"/><stop offset=".6115" stop-color="#36c898"/><stop offset=".6132" stop-color="#49cb85"/><stop offset=".6166" stop-color="#79cc5e"/><stop offset=".6184" stop-color="#8ecb4e"/><stop offset=".6218" stop-color="#a8c73b"/><stop offset=".6252" stop-color="#adc638"/><stop offset=".6286" stop-color="#9dc943"/><stop offset=".6304" stop-color="#8dcb4f"/><stop offset=".6338" stop-color="#60cd72"/><stop offset=".6355" stop-color="#47cb87"/><stop offset=".6389" stop-color="#25c2ad"/><stop offset=".6407" stop-color="#08bcbf"/><stop offset=".6424" stop-color="#06b5cf"/><stop offset=".6441" stop-color="#1aacdd"/><stop offset=".6475" stop-color="#2995ec"/><stop offset=".6509" stop-color="#327cfc"/><stop offset=".6527" stop-color="#3f6dfe"/><stop offset=".6561" stop-color="#4759f8"/><stop offset=".663" stop-color="#463cdf"/><stop offset=".6715" stop-color="#422fc0"/><stop offset=".6835" stop-color="#3f29b0"/><stop offset=".7247" stop-color="#3e26a8"/><stop offset=".9991" stop-color="#3e26a8"/></linearGradient>
<linearGradient id="r35"><stop offset=".0009" stop-color="#3e26a8"/><stop offset=".3816" stop-color="#3e27ab"/><stop offset=".4039" stop-color="#402bb6"/><stop offset=".4177" stop-color="#4433cc"/><stop offset=".428" stop-color="#4743e7"/><stop offset=".4383" stop-color="#4562fc"/><stop offset=".4417" stop-color="#3d71ff"/><stop offset=".4451" stop-color="#2f82f9"/><stop offset=".452" stop-color="#20a5e2"/><stop offset=".4537" stop-color="#18addb"/><stop offset=".4554" stop-color="#08b5d0"/><stop offset=".4571" stop-color="#02bbc3"/><stop offset=".4588" stop-color="#1bc0b4"/><stop offset=".4605" stop-color="#2ec4a4"/><stop offset=".4623" stop-color="#3cc992"/><stop offset=".4657" stop-color="#72cd63"/><stop offset=".4691" stop-color="#b0c636"/><stop offset=".4708" stop-color="#cbc129"/><stop offset=".4726" stop-color="#e1bc2b"/><stop offset=".4743" stop-color="#f2ba38"/><stop offset=".476" stop-color="#febe3c"/><stop offset=".4811" stop-color="#f9d72c"/><stop offset=".4863" stop-color="#f5e526"/><stop offset=".4914" stop-color="#f5e426"/><stop offset=".4966" stop-color="#fad42e"/><stop offset=".5" stop-color="#fec239"/><stop offset=".5017" stop-color="#f6ba3b"/><stop offset=".5034" stop-color="#e3bc2c"/><stop offset=".5051" stop-color="#cbc029"/><stop offset=".5069" stop-color="#aec637"/><stop offset=".5103" stop-color="#68cd6c"/><stop offset=".512" stop-color="#47cb87"/><stop offset=".5154" stop-color="#1fc1b1"/><stop offset=".5172" stop-color="#02bbc3"/><stop offset=".5189" stop-color="#0cb3d3"/><stop offset=".5206" stop-color="#1caadf"/><stop offset=".5257" stop-color="#2d89f5"/><stop offset=".5274" stop-color="#317efb"/><stop offset=".5309" stop-color="#4368fe"/><stop offset=".5377" stop-color="#4849ed"/><stop offset=".5446" stop-color="#4536d4"/><stop offset=".5583" stop-color="#3e27ac"/><stop offset=".5617" stop-color="#3f29b2"/><stop offset=".5738" stop-color="#4539d9"/><stop offset=".5823" stop-color="#4757f7"/><stop offset=".5858" stop-color="#4368fe"/><stop offset=".5892" stop-color="#307ffb"/><stop offset=".5943" stop-color="#23a0e5"/><stop offset=".5961" stop-color="#1baade"/><stop offset=".5978" stop-color="#0bb3d2"/><stop offset=".5995" stop-color="#02bac3"/><stop offset=".6012" stop-color="#1dc0b3"/><stop offset=".6046" stop-color="#3eca8f"/><stop offset=".6098" stop-color="#88cb53"/><stop offset=".6132" stop-color="#acc738"/><stop offset=".6166" stop-color="#bec32e"/><stop offset=".6201" stop-color="#bdc32e"/><stop offset=".6218" stop-color="#b6c532"/><stop offset=".6252" stop-color="#9ac945"/><stop offset=".6286" stop-color="#6bcd69"/><stop offset=".6321" stop-color="#3ac993"/><stop offset=".6338" stop-color="#2cc4a6"/><stop offset=".6372" stop-color="#01b8c8"/><stop offset=".6389" stop-color="#13b0d7"/><stop offset=".6424" stop-color="#269be8"/><stop offset=".6458" stop-color="#2e83f9"/><stop offset=".6492" stop-color="#416bfe"/><stop offset=".6544" stop-color="#484df1"/><stop offset=".6612" stop-color="#4536d4"/><stop offset=".6681" stop-color="#412dbb"/><stop offset=".6784" stop-color="#3f29b1"/><stop offset=".7264" stop-color="#3e26a8"/><stop offset=".9991" stop-color="#3e26a8"/></linearGradient>
<linearGradient id="r36"><stop offset=".0009" stop-color="#3e26a8"/><stop offset=".3662" stop-color="#3e27ab"/><stop offset=".3902" stop-color="#402bb7"/><stop offset=".4039" stop-color="#4433cd"/><stop offset=".416" stop-color="#4746ea"/><stop offset=".4262" stop-color="#4367fd"/><stop offset=".4314" stop-color="#307efb"/><stop offset=".4383" stop-color="#239fe5"/><stop offset=".4417" stop-color="#15afd8"/><stop offset=".4434" stop-color="#04b6cd"/><stop offset=".4451" stop-color="#06bcc0"/><stop offset=".4468" stop-color="#1fc0b2"/><stop offset=".4503" stop-color="#3dc991"/><stop offset=".4537" stop-color="#71cd65"/><stop offset=".4571" stop-color="#acc738"/><stop offset=".4588" stop-color="#c5c22a"/><stop offset=".4605" stop-color="#dbbd29"/><stop offset=".464" stop-color="#fabb3d"/><stop offset=".4674" stop-color="#fdcb33"/><stop offset=".4726" stop-color="#f6de29"/><stop offset=".4777" stop-color="#f5e426"/><stop offset=".4828" stop-color="#f7dd2a"/><stop offset=".488" stop-color="#fec835"/><stop offset=".4897" stop-color="#febf3b"/><stop offset=".4914" stop-color="#f4ba3a"/><stop offset=".4931" stop-color="#e3bc2c"/><stop offset=".4949" stop-color="#cdc028"/><stop offset=".4966" stop-color="#b2c635"/><stop offset=".4983" stop-color="#8ecb4f"/><stop offset=".5" stop-color="#70cd65"/><stop offset=".5017" stop-color="#4ccb83"/><stop offset=".5034" stop-color="#36c799"/><stop offset=".5051" stop-color="#26c2ac"/><stop offset=".5069" stop-color="#0abdbd"/><stop offset=".5086" stop-color="#04b6cd"/><stop offset=".5103" stop-color="#17aeda"/><stop offset=".5154" stop-color="#2c90f0"/><stop offset=".5189" stop-color="#337bfc"/><stop offset=".5223" stop-color="#4367fd"/><stop offset=".5309" stop-color="#4744e8"/><stop offset=".5412" stop-color="#422fc1"/><stop offset=".5463" stop-color="#402ab5"/><stop offset=".5583" stop-color="#4330c4"/><stop offset=".5669" stop-color="#463cdf"/><stop offset=".5738" stop-color="#4755f6"/><stop offset=".5772" stop-color="#4367fd"/><stop offset=".5806" stop-color="#327cfc"/><stop offset=".5858" stop-color="#259ce7"/><stop offset=".5892" stop-color="#14b0d8"/><stop offset=".5909" stop-color="#01b8ca"/><stop offset=".5926" stop-color="#0fbebb"/><stop offset=".5943" stop-color="#28c3aa"/><stop offset=".5961" stop-color="#36c899"/><stop offset=".5978" stop-color="#49cb85"/><stop offset=".6029" stop-color="#95ca49"/><stop offset=".6046" stop-color="#a8c73b"/><stop offset=".6081" stop-color="#c3c22b"/><stop offset=".6115" stop-color="#cdc028"/><stop offset=".6149" stop-color="#c8c129"/><stop offset=".6184" stop-color="#b2c535"/><stop offset=".6218" stop-color="#8bcb51"/><stop offset=".6269" stop-color="#3eca8f"/><stop offset=".6304" stop-color="#1cc0b3"/><stop offset=".6321" stop-color="#02bac4"/><stop offset=".6338" stop-color="#0cb3d3"/><stop offset=".6355" stop-color="#1caadf"/><stop offset=".6407" stop-color="#2d89f5"/><stop offset=".6424" stop-color="#317efb"/><stop offset=".6458" stop-color="#4367fd"/><stop offset=".6527" stop-color="#4746ea"/><stop offset=".6595" stop-color="#4434cd"/><stop offset=".6681" stop-color="#402ab3"/><stop offset=".6767" stop-color="#3e27a9"/><stop offset=".699" stop-color="#3e27ab"/><stop offset=".9991" stop-color="#3e26a8"/></linearGradient>
<linearGradient id="r37"><stop offset=".0009" stop-color="#3e26a8"/><stop offset=".3508" stop-color="#3e27ab"/><stop offset=".3748" stop-color="#402bb7"/><stop offset=".3885" stop-color="#4433cb"/><stop offset=".4005" stop-color="#4743e7"/><stop offset=".4125" stop-color="#4465fd"/><stop offset=".4177" stop-color="#327cfc"/><stop offset=".4262" stop-color="#20a5e3"/><stop offset=".428" stop-color="#19acdc"/><stop offset=".4314" stop-color="#01b9c7"/><stop offset=".4331" stop-color="#10beba"/><stop offset=".4348" stop-color="#27c2ac"/><stop offset=".4383" stop-color="#43ca8b"/><stop offset=".4434" stop-color="#93ca4b"/><stop offset=".4451" stop-color="#aec637"/><stop offset=".4468" stop-color="#c6c22a"/><stop offset=".4485" stop-color="#dabd28"/><stop offset=".452" stop-color="#f9ba3d"/><stop offset=".4537" stop-color="#fec13a"/><stop offset=".4605" stop-color="#f8da2b"/><stop offset=".4657" stop-color="#f5e228"/><stop offset=".4708" stop-color="#f7dc2a"/><stop offset=".4777" stop-color="#fec339"/><stop offset=".4794" stop-color="#fabb3d"/><stop offset=".4828" stop-color="#dbbd29"/><stop offset=".4846" stop-color="#c5c22a"/><stop offset=".4863" stop-color="#abc739"/><stop offset=".4897" stop-color="#6ccd68"/><stop offset=".4914" stop-color="#4fcc81"/><stop offset=".4931" stop-color="#38c896"/><stop offset=".4949" stop-color="#2ac3a9"/><stop offset=".4966" stop-color="#12beb9"/><stop offset=".4983" stop-color="#01b7ca"/><stop offset=".5017" stop-color="#1ea7e1"/><stop offset=".5086" stop-color="#2f81fa"/><stop offset=".512" stop-color="#406dfe"/><stop offset=".5172" stop-color="#4755f6"/><stop offset=".5257" stop-color="#463adb"/><stop offset=".5326" stop-color="#4331c6"/><stop offset=".5463" stop-color="#412dbc"/><stop offset=".5515" stop-color="#4331c5"/><stop offset=".56" stop-color="#4742e6"/><stop offset=".5686" stop-color="#4465fd"/><stop offset=".572" stop-color="#3579fd"/><stop offset=".5806" stop-color="#19addc"/><stop offset=".5823" stop-color="#07b5cf"/><stop offset=".584" stop-color="#05bbc1"/><stop offset=".5858" stop-color="#1fc1b1"/><stop offset=".5892" stop-color="#3eca8f"/><stop offset=".5943" stop-color="#89cb52"/><stop offset=".5978" stop-color="#b2c635"/><stop offset=".6012" stop-color="#cbc129"/><stop offset=".6046" stop-color="#d5be28"/><stop offset=".6081" stop-color="#d2bf27"/><stop offset=".6115" stop-color="#c1c32c"/><stop offset=".6149" stop-color="#a1c840"/><stop offset=".6201" stop-color="#57cc7a"/><stop offset=".6218" stop-color="#3fca8e"/><stop offset=".6252" stop-color="#1fc0b2"/><stop offset=".6269" stop-color="#04bbc2"/><stop offset=".6286" stop-color="#08b5d0"/><stop offset=".6304" stop-color="#19acdc"/><stop offset=".6355" stop-color="#2d8df2"/><stop offset=".6372" stop-color="#2e83f9"/><stop offset=".6407" stop-color="#406dfe"/><stop offset=".6458" stop-color="#4853f5"/><stop offset=".6544" stop-color="#4537d7"/><stop offset=".663" stop-color="#412dbd"/><stop offset=".6767" stop-color="#3f28af"/><stop offset=".7504" stop-color="#3e26a8"/><stop offset=".9991" stop-color="#3e26a8"/></linearGradient>
<linearGradient id="r38"><stop offset=".0009" stop-color="#3e26a8"/><stop offset=".3353" stop-color="#3e27ab"/><stop offset=".3593" stop-color="#402bb7"/><stop offset=".3731" stop-color="#4332cb"/><stop offset=".3851" stop-color="#4742e6"/><stop offset=".3971" stop-color="#4561fc"/><stop offset=".4022" stop-color="#3875fe"/><stop offset=".4057" stop-color="#2e85f8"/><stop offset=".4125" stop-color="#21a3e3"/><stop offset=".416" stop-color="#12b1d6"/><stop offset=".4177" stop-color="#03b7cb"/><stop offset=".4194" stop-color="#07bcbf"/><stop offset=".4211" stop-color="#1dc0b2"/><stop offset=".4245" stop-color="#3bc993"/><stop offset=".428" stop-color="#68cd6c"/><stop offset=".4314" stop-color="#9dc943"/><stop offset=".4331" stop-color="#b6c532"/><stop offset=".4348" stop-color="#cbc029"/><stop offset=".4365" stop-color="#debd29"/><stop offset=".44" stop-color="#f9bb3d"/><stop offset=".4417" stop-color="#fec03a"/><stop offset=".4485" stop-color="#f9d82c"/><stop offset=".4554" stop-color="#f6df29"/><stop offset=".4623" stop-color="#fcd12f"/><stop offset=".4674" stop-color="#fcbd3d"/><stop offset=".4691" stop-color="#f2ba37"/><stop offset=".4708" stop-color="#e2bc2c"/><stop offset=".4726" stop-color="#d0c028"/><stop offset=".4743" stop-color="#b9c431"/><stop offset=".4777" stop-color="#81cc59"/><stop offset=".4811" stop-color="#48cb86"/><stop offset=".4828" stop-color="#35c79a"/><stop offset=".4846" stop-color="#28c2ab"/><stop offset=".4863" stop-color="#10beba"/><stop offset=".488" stop-color="#01b8c8"/><stop offset=".4914" stop-color="#1caadf"/><stop offset=".4966" stop-color="#2c8ef1"/><stop offset=".5" stop-color="#327cfc"/><stop offset=".5034" stop-color="#4368fe"/><stop offset=".512" stop-color="#4848ec"/><stop offset=".5223" stop-color="#4434ce"/><stop offset=".5326" stop-color="#3e28ad"/><stop offset=".5343" stop-color="#3f28ae"/><stop offset=".5497" stop-color="#4741e4"/><stop offset=".5583" stop-color="#465efb"/><stop offset=".5617" stop-color="#3e6fff"/><stop offset=".5652" stop-color="#2e84f9"/><stop offset=".5703" stop-color="#23a1e4"/><stop offset=".572" stop-color="#1caadf"/><stop offset=".5755" stop-color="#01bac5"/><stop offset=".5789" stop-color="#2cc4a7"/><stop offset=".5806" stop-color="#37c897"/><stop offset=".5823" stop-color="#4acb84"/><stop offset=".5875" stop-color="#93ca4a"/><stop offset=".5909" stop-color="#b8c431"/><stop offset=".5943" stop-color="#cfc028"/><stop offset=".5978" stop-color="#d9be28"/><stop offset=".6012" stop-color="#d7be28"/><stop offset=".6046" stop-color="#c9c129"/><stop offset=".6081" stop-color="#aec637"/><stop offset=".6115" stop-color="#84cc57"/><stop offset=".6166" stop-color="#3cc992"/><stop offset=".6201" stop-color="#1dc0b3"/><stop offset=".6218" stop-color="#04bbc2"/><stop offset=".6235" stop-color="#07b5d0"/><stop offset=".6252" stop-color="#19addc"/><stop offset=".6304" stop-color="#2c90f0"/><stop offset=".6338" stop-color="#327bfc"/><stop offset=".6372" stop-color="#4367fd"/><stop offset=".6441" stop-color="#4849ed"/><stop offset=".6527" stop-color="#4433cd"/><stop offset=".6612" stop-color="#402bb8"/><stop offset=".675" stop-color="#3f28af"/><stop offset=".759" stop-color="#3e26a8"/><stop offset=".9991" stop-color="#3e26a8"/></linearGradient>
<linearGradient id="r39"><stop offset=".0009" stop-color="#3e26a8"/><stop offset=".3182" stop-color="#3e27ab"/><stop offset=".3439" stop-color="#402bb8"/><stop offset=".3593" stop-color="#4434cf"/><stop offset=".3714" stop-color="#4745e9"/><stop offset=".3834" stop-color="#4465fd"/><stop offset=".3885" stop-color="#3579fd"/><stop offset=".3988" stop-color="#20a4e3"/><stop offset=".4022" stop-color="#10b2d5"/><stop offset=".4039" stop-color="#02b7cb"/><stop offset=".4057" stop-color="#07bcbf"/><stop offset=".4074" stop-color="#1dc0b3"/><stop offset=".4091" stop-color="#2dc4a6"/><stop offset=".4108" stop-color="#37c897"/><stop offset=".4125" stop-color="#47cb87"/><stop offset=".4177" stop-color="#91ca4d"/><stop offset=".4211" stop-color="#bfc32e"/><stop offset=".4228" stop-color="#d2bf27"/><stop offset=".4245" stop-color="#e4bb2c"/><stop offset=".4262" stop-color="#f1ba37"/><stop offset=".428" stop-color="#fbbc3d"/><stop offset=".4314" stop-color="#fec835"/><stop offset=".4383" stop-color="#f8d92b"/><stop offset=".4451" stop-color="#f8da2b"/><stop offset=".452" stop-color="#fec934"/><stop offset=".4554" stop-color="#fcbc3d"/><stop offset=".4571" stop-color="#f2ba38"/><stop offset=".4588" stop-color="#e4bb2c"/><stop offset=".4605" stop-color="#d3bf27"/><stop offset=".4623" stop-color="#bfc32d"/><stop offset=".464" stop-color="#a7c73c"/><stop offset=".4691" stop-color="#55cc7b"/><stop offset=".4708" stop-color="#3eca8f"/><stop offset=".4743" stop-color="#22c1b0"/><stop offset=".476" stop-color="#09bdbe"/><stop offset=".4777" stop-color="#02b7cb"/><stop offset=".4794" stop-color="#13b1d7"/><stop offset=".4828" stop-color="#23a0e5"/><stop offset=".4897" stop-color="#317efb"/><stop offset=".4949" stop-color="#4465fd"/><stop offset=".5034" stop-color="#4746ea"/><stop offset=".512" stop-color="#4433cc"/><stop offset=".5172" stop-color="#422ebf"/><stop offset=".524" stop-color="#4230c3"/><stop offset=".536" stop-color="#4538d8"/><stop offset=".5446" stop-color="#484df0"/><stop offset=".5515" stop-color="#4269fe"/><stop offset=".5549" stop-color="#327cfc"/><stop offset=".5617" stop-color="#22a1e4"/><stop offset=".5652" stop-color="#10b2d5"/><stop offset=".5669" stop-color="#01b8c9"/><stop offset=".5686" stop-color="#0dbdbb"/><stop offset=".5703" stop-color="#25c2ad"/><stop offset=".5738" stop-color="#40ca8d"/><stop offset=".5789" stop-color="#88cb53"/><stop offset=".5823" stop-color="#aec637"/><stop offset=".5858" stop-color="#c8c129"/><stop offset=".5892" stop-color="#d6be28"/><stop offset=".5926" stop-color="#dabd28"/><stop offset=".5961" stop-color="#d3bf27"/><stop offset=".5995" stop-color="#c1c32c"/><stop offset=".6029" stop-color="#a2c840"/><stop offset=".6081" stop-color="#5ecd74"/><stop offset=".6098" stop-color="#48cb87"/><stop offset=".6115" stop-color="#36c898"/><stop offset=".6132" stop-color="#2bc3a8"/><stop offset=".6166" stop-color="#02bac4"/><stop offset=".6184" stop-color="#0ab4d1"/><stop offset=".6201" stop-color="#19acdc"/><stop offset=".6252" stop-color="#2b91ef"/><stop offset=".6286" stop-color="#317efb"/><stop offset=".6321" stop-color="#416bfe"/><stop offset=".6389" stop-color="#484df1"/><stop offset=".6475" stop-color="#4537d5"/><stop offset=".6561" stop-color="#412dbb"/><stop offset=".6681" stop-color="#3e27aa"/><stop offset=".9991" stop-color="#3e26a8"/></linearGradient>
<linearGradient id="r40"><stop offset=".0009" stop-color="#3e26a8"/><stop offset=".3027" stop-color="#3e27ac"/><stop offset=".3285" stop-color="#412cb9"/><stop offset=".3439" stop-color="#4435d0"/><stop offset=".3576" stop-color="#4849ed"/><stop offset=".3679" stop-color="#4464fd"/><stop offset=".3731" stop-color="#3678fe"/><stop offset=".3765" stop-color="#2e86f8"/><stop offset=".3851" stop-color="#1da8e0"/><stop offset=".3868" stop-color="#16aeda"/><stop offset=".3885" stop-color="#09b4d1"/><stop offset=".3902" stop-color="#01b9c7"/><stop offset=".3919" stop-color="#0dbdbc"/><stop offset=".3937" stop-color="#22c1b0"/><stop offset=".3971" stop-color="#39c895"/><stop offset=".3988" stop-color="#49cb85"/><stop offset=".4039" stop-color="#8fcb4e"/><stop offset=".4074" stop-color="#bbc430"/><stop offset=".4091" stop-color="#cdc028"/><stop offset=".4108" stop-color="#ddbd29"/><stop offset=".4142" stop-color="#f6ba3b"/><stop offset=".416" stop-color="#fdbd3d"/><stop offset=".4245" stop-color="#fad52d"/><stop offset=".4314" stop-color="#f8d82c"/><stop offset=".4383" stop-color="#fdcb32"/><stop offset=".4417" stop-color="#fec03b"/><stop offset=".4434" stop-color="#fabb3d"/><stop offset=".4468" stop-color="#e2bc2b"/><stop offset=".4485" stop-color="#d2bf27"/><stop offset=".4503" stop-color="#bfc32d"/><stop offset=".452" stop-color="#a9c73b"/><stop offset=".4571" stop-color="#5ccc76"/><stop offset=".4588" stop-color="#45cb89"/><stop offset=".4623" stop-color="#2ac3a9"/><stop offset=".4657" stop-color="#02bac4"/><stop offset=".4674" stop-color="#07b5d0"/><stop offset=".4691" stop-color="#16aeda"/><stop offset=".476" stop-color="#2c8ff1"/><stop offset=".4794" stop-color="#317efb"/><stop offset=".4846" stop-color="#4465fd"/><stop offset=".4949" stop-color="#4744e8"/><stop offset=".5051" stop-color="#4435d2"/><stop offset=".5172" stop-color="#412ebe"/><stop offset=".5223" stop-color="#4331c6"/><stop offset=".5309" stop-color="#4742e6"/><stop offset=".5395" stop-color="#465ffb"/><stop offset=".5429" stop-color="#3f6fff"/><stop offset=".5463" stop-color="#2f80fa"/><stop offset=".5532" stop-color="#21a3e3"/><stop offset=".5549" stop-color="#1babde"/><stop offset=".5583" stop-color="#01b8c8"/><stop offset=".56" stop-color="#0cbdbc"/><stop offset=".5617" stop-color="#24c1af"/><stop offset=".5652" stop-color="#3cc991"/><stop offset=".5703" stop-color="#7bcc5d"/><stop offset=".5755" stop-color="#b4c534"/><stop offset=".5789" stop-color="#cac129"/><stop offset=".5823" stop-color="#d5be28"/><stop offset=".5875" stop-color="#d5be28"/><stop offset=".5909" stop-color="#c9c129"/><stop offset=".5943" stop-color="#b2c535"/><stop offset=".5978" stop-color="#90ca4d"/><stop offset=".6029" stop-color="#4fcc80"/><stop offset=".6046" stop-color="#3cc991"/><stop offset=".6081" stop-color="#23c1af"/><stop offset=".6098" stop-color="#0bbdbc"/><stop offset=".6115" stop-color="#01b8c9"/><stop offset=".6149" stop-color="#1baade"/><stop offset=".6218" stop-color="#2d88f6"/><stop offset=".6235" stop-color="#307ffb"/><stop offset=".6269" stop-color="#406cfe"/><stop offset=".6321" stop-color="#4756f7"/><stop offset=".6424" stop-color="#4639da"/><stop offset=".6527" stop-color="#422ebe"/><stop offset=".6681" stop-color="#3f28af"/><stop offset=".7642" stop-color="#3e26a8"/><stop offset=".9991" stop-color="#3e26a8"/></linearGradient>
<linearGradient id="r41"><stop offset=".0009" stop-color="#3e26a8"/><stop offset=".2787" stop-color="#3e27ab"/><stop offset=".3079" stop-color="#402bb7"/><stop offset=".325" stop-color="#4433cd"/><stop offset=".3388" stop-color="#4744e8"/><stop offset=".3508" stop-color="#4561fc"/><stop offset=".3559" stop-color="#3b72ff"/><stop offset=".3611" stop-color="#2e86f7"/><stop offset=".3696" stop-color="#1ea7e1"/><stop offset=".3714" stop-color="#19addc"/><stop offset=".3748" stop-color="#01b8ca"/><stop offset=".3765" stop-color="#07bcc0"/><stop offset=".3799" stop-color="#2ac3a9"/><stop offset=".3834" stop-color="#3fca8e"/><stop offset=".3885" stop-color="#7dcc5c"/><stop offset=".3919" stop-color="#a9c73b"/><stop offset=".3954" stop-color="#cdc028"/><stop offset=".3971" stop-color="#dcbd29"/><stop offset=".4005" stop-color="#f3ba39"/><stop offset=".4022" stop-color="#fbbc3d"/><stop offset=".4074" stop-color="#feca33"/><stop offset=".4142" stop-color="#fad52d"/><stop offset=".4211" stop-color="#fbd32f"/><stop offset=".4297" stop-color="#fcbc3d"/><stop offset=".4314" stop-color="#f4ba3a"/><stop offset=".4348" stop-color="#dcbd29"/><stop offset=".4365" stop-color="#ccc028"/><stop offset=".4383" stop-color="#bac430"/><stop offset=".4417" stop-color="#8dcb4f"/><stop offset=".4468" stop-color="#47cb87"/><stop offset=".4485" stop-color="#37c898"/><stop offset=".4503" stop-color="#2dc4a6"/><stop offset=".452" stop-color="#1dc0b3"/><stop offset=".4537" stop-color="#07bcbf"/><stop offset=".4554" stop-color="#02b7cb"/><stop offset=".4588" stop-color="#1babde"/><stop offset=".4657" stop-color="#2d8cf3"/><stop offset=".4691" stop-color="#317dfc"/><stop offset=".4743" stop-color="#4367fd"/><stop offset=".4846" stop-color="#4747eb"/><stop offset=".4949" stop-color="#4331c7"/><stop offset=".5" stop-color="#402bb8"/><stop offset=".5034" stop-color="#412cba"/><stop offset=".5189" stop-color="#4742e6"/><stop offset=".5292" stop-color="#465efb"/><stop offset=".5326" stop-color="#406cfe"/><stop offset=".536" stop-color="#317dfc"/><stop offset=".5429" stop-color="#249ee6"/><stop offset=".5463" stop-color="#18addb"/><stop offset=".548" stop-color="#0ab4d1"/><stop offset=".5497" stop-color="#01b9c6"/><stop offset=".5515" stop-color="#10beba"/><stop offset=".5532" stop-color="#25c2ae"/><stop offset=".5566" stop-color="#3bc992"/><stop offset=".5617" stop-color="#74cc62"/><stop offset=".5669" stop-color="#a9c73a"/><stop offset=".5703" stop-color="#c1c32c"/><stop offset=".5755" stop-color="#d2bf27"/><stop offset=".5806" stop-color="#cfc028"/><stop offset=".5858" stop-color="#b9c430"/><stop offset=".5892" stop-color="#9ec942"/><stop offset=".5961" stop-color="#51cc7f"/><stop offset=".5978" stop-color="#3eca8f"/><stop offset=".6012" stop-color="#28c2ab"/><stop offset=".6046" stop-color="#02bac4"/><stop offset=".6063" stop-color="#07b5cf"/><stop offset=".6081" stop-color="#16afd9"/><stop offset=".6132" stop-color="#2797ea"/><stop offset=".6184" stop-color="#317efb"/><stop offset=".6235" stop-color="#4465fd"/><stop offset=".6338" stop-color="#4743e7"/><stop offset=".6441" stop-color="#4331c8"/><stop offset=".6561" stop-color="#3f29b2"/><stop offset=".675" stop-color="#3e28ad"/><stop offset=".8431" stop-color="#3e26a8"/><stop offset=".9991" stop-color="#3e26a8"/></linearGradient>
<linearGradient id="r42"><stop offset=".0009" stop-color="#3e26a8"/><stop offset=".265" stop-color="#3e27ab"/><stop offset=".2959" stop-color="#412dbd"/><stop offset=".313" stop-color="#4538d8"/><stop offset=".3285" stop-color="#4852f4"/><stop offset=".337" stop-color="#4269fe"/><stop offset=".3422" stop-color="#337bfc"/><stop offset=".3542" stop-color="#1da8e0"/><stop offset=".3559" stop-color="#18aedb"/><stop offset=".3593" stop-color="#01b8ca"/><stop offset=".3611" stop-color="#06bcc0"/><stop offset=".3645" stop-color="#28c2ab"/><stop offset=".3679" stop-color="#3bc992"/><stop offset=".3714" stop-color="#5ecd74"/><stop offset=".3782" stop-color="#b0c636"/><stop offset=".3799" stop-color="#c2c22c"/><stop offset=".3816" stop-color="#d1bf27"/><stop offset=".3851" stop-color="#eaba31"/><stop offset=".3885" stop-color="#fbbc3d"/><stop offset=".3937" stop-color="#fec834"/><stop offset=".4022" stop-color="#fbd32e"/><stop offset=".4108" stop-color="#feca33"/><stop offset=".416" stop-color="#fdbd3d"/><stop offset=".4177" stop-color="#f7ba3c"/><stop offset=".4211" stop-color="#e2bc2b"/><stop offset=".4228" stop-color="#d5be28"/><stop offset=".4245" stop-color="#c3c22b"/><stop offset=".428" stop-color="#9bc944"/><stop offset=".4331" stop-color="#58cc79"/><stop offset=".4348" stop-color="#44cb8a"/><stop offset=".44" stop-color="#1ec0b2"/><stop offset=".4417" stop-color="#09bcbe"/><stop offset=".4434" stop-color="#01b8c9"/><stop offset=".4468" stop-color="#19addc"/><stop offset=".4537" stop-color="#2b91ef"/><stop offset=".4588" stop-color="#337afd"/><stop offset=".464" stop-color="#4464fd"/><stop offset=".4743" stop-color="#4746ea"/><stop offset=".4846" stop-color="#4539d9"/><stop offset=".5" stop-color="#4435d1"/><stop offset=".5086" stop-color="#473fe2"/><stop offset=".5189" stop-color="#465efb"/><stop offset=".5223" stop-color="#406cfe"/><stop offset=".5257" stop-color="#327cfc"/><stop offset=".5343" stop-color="#21a3e3"/><stop offset=".5377" stop-color="#12b1d7"/><stop offset=".5395" stop-color="#04b6cd"/><stop offset=".5412" stop-color="#04bbc2"/><stop offset=".5446" stop-color="#28c2ab"/><stop offset=".548" stop-color="#3cc991"/><stop offset=".5549" stop-color="#83cc57"/><stop offset=".56" stop-color="#aec637"/><stop offset=".5652" stop-color="#c7c12a"/><stop offset=".5703" stop-color="#cdc028"/><stop offset=".5738" stop-color="#c8c129"/><stop offset=".5789" stop-color="#b0c636"/><stop offset=".584" stop-color="#85cb56"/><stop offset=".5909" stop-color="#3dc990"/><stop offset=".5943" stop-color="#29c3aa"/><stop offset=".5978" stop-color="#05bbc1"/><stop offset=".5995" stop-color="#03b7cc"/><stop offset=".6029" stop-color="#1babde"/><stop offset=".6098" stop-color="#2d8df2"/><stop offset=".6132" stop-color="#317dfc"/><stop offset=".6184" stop-color="#4466fd"/><stop offset=".6304" stop-color="#4741e5"/><stop offset=".6424" stop-color="#4230c4"/><stop offset=".6561" stop-color="#3f29b0"/><stop offset=".6732" stop-color="#3e27aa"/><stop offset=".9991" stop-color="#3e26a8"/></linearGradient>
<linearGradient id="r43"><stop offset=".0009" stop-color="#3e26a8"/><stop offset=".253" stop-color="#3e27ac"/><stop offset=".2753" stop-color="#412cba"/><stop offset=".2942" stop-color="#4537d7"/><stop offset=".3096" stop-color="#484ff2"/><stop offset=".3199" stop-color="#4269fe"/><stop offset=".3268" stop-color="#2f80fa"/><stop offset=".3353" stop-color="#249ee6"/><stop offset=".3405" stop-color="#15afd9"/><stop offset=".3439" stop-color="#01b8c8"/><stop offset=".3456" stop-color="#08bcbf"/><stop offset=".3473" stop-color="#1cc0b3"/><stop offset=".3491" stop-color="#2ac3a9"/><stop offset=".3525" stop-color="#3cc991"/><stop offset=".3559" stop-color="#5dcc75"/><stop offset=".3628" stop-color="#abc739"/><stop offset=".3662" stop-color="#cbc129"/><stop offset=".3696" stop-color="#e3bb2c"/><stop offset=".3731" stop-color="#f6ba3b"/><stop offset=".3765" stop-color="#fec03b"/><stop offset=".3851" stop-color="#fdce31"/><stop offset=".3937" stop-color="#fdcd32"/><stop offset=".4022" stop-color="#fbbc3d"/><stop offset=".4039" stop-color="#f5ba3a"/><stop offset=".4074" stop-color="#e2bc2b"/><stop offset=".4091" stop-color="#d6be28"/><stop offset=".4108" stop-color="#c8c129"/><stop offset=".4142" stop-color="#a5c83d"/><stop offset=".4211" stop-color="#52cc7e"/><stop offset=".4228" stop-color="#40ca8d"/><stop offset=".4262" stop-color="#2ac3a9"/><stop offset=".4297" stop-color="#07bcc0"/><stop offset=".4314" stop-color="#01b8ca"/><stop offset=".4348" stop-color="#18addb"/><stop offset=".4434" stop-color="#2d8cf3"/><stop offset=".4468" stop-color="#317efb"/><stop offset=".452" stop-color="#426afe"/><stop offset=".4623" stop-color="#484df0"/><stop offset=".4708" stop-color="#4539d9"/><stop offset=".4811" stop-color="#3f28af"/><stop offset=".4846" stop-color="#402bb7"/><stop offset=".4949" stop-color="#463de0"/><stop offset=".5069" stop-color="#465dfb"/><stop offset=".512" stop-color="#3e70ff"/><stop offset=".5154" stop-color="#307efb"/><stop offset=".524" stop-color="#22a2e4"/><stop offset=".5274" stop-color="#16afd9"/><stop offset=".5292" stop-color="#08b4d1"/><stop offset=".5309" stop-color="#01b9c7"/><stop offset=".5326" stop-color="#0bbdbd"/><stop offset=".5343" stop-color="#1ec0b2"/><stop offset=".536" stop-color="#2cc4a7"/><stop offset=".5395" stop-color="#3eca8f"/><stop offset=".548" stop-color="#8fcb4e"/><stop offset=".5532" stop-color="#b1c635"/><stop offset=".5583" stop-color="#c3c22b"/><stop offset=".5635" stop-color="#c5c22a"/><stop offset=".5686" stop-color="#b7c532"/><stop offset=".5738" stop-color="#99c946"/><stop offset=".5823" stop-color="#47cb87"/><stop offset=".5858" stop-color="#31c6a0"/><stop offset=".5875" stop-color="#27c2ab"/><stop offset=".5909" stop-color="#05bbc1"/><stop offset=".5926" stop-color="#02b7cb"/><stop offset=".5961" stop-color="#19acdc"/><stop offset=".6046" stop-color="#2d89f5"/><stop offset=".6081" stop-color="#337bfd"/><stop offset=".6132" stop-color="#4465fd"/><stop offset=".6252" stop-color="#4742e6"/><stop offset=".6372" stop-color="#4331c8"/><stop offset=".6509" stop-color="#402ab5"/><stop offset=".6767" stop-color="#3e27ac"/><stop offset=".9254" stop-color="#3e26a8"/><stop offset=".9991" stop-color="#3e26a8"/></linearGradient>
<linearGradient id="r44"><stop offset=".0009" stop-color="#3e26a8"/><stop offset=".2101" stop-color="#3e27ac"/><stop offset=".253" stop-color="#402bb7"/><stop offset=".2684" stop-color="#4331c8"/><stop offset=".2856" stop-color="#4744e8"/><stop offset=".301" stop-color="#4466fd"/><stop offset=".3079" stop-color="#327cfc"/><stop offset=".3199" stop-color="#21a3e3"/><stop offset=".3233" stop-color="#17aeda"/><stop offset=".3268" stop-color="#02b7cb"/><stop offset=".3285" stop-color="#03bbc2"/><stop offset=".3319" stop-color="#22c1af"/><stop offset=".337" stop-color="#3fca8e"/><stop offset=".3439" stop-color="#84cb56"/><stop offset=".3473" stop-color="#aac739"/><stop offset=".3508" stop-color="#c8c129"/><stop offset=".3542" stop-color="#e0bc2a"/><stop offset=".3593" stop-color="#f8ba3d"/><stop offset=".3645" stop-color="#fec438"/><stop offset=".3731" stop-color="#fdcd32"/><stop offset=".3816" stop-color="#fec736"/><stop offset=".3868" stop-color="#fdbd3d"/><stop offset=".3885" stop-color="#f8ba3d"/><stop offset=".3937" stop-color="#debc2a"/><stop offset=".3971" stop-color="#c5c22a"/><stop offset=".4005" stop-color="#a5c83d"/><stop offset=".4074" stop-color="#58cc79"/><stop offset=".4108" stop-color="#38c895"/><stop offset=".4142" stop-color="#26c2ad"/><stop offset=".4177" stop-color="#05bbc1"/><stop offset=".4194" stop-color="#02b7cb"/><stop offset=".4228" stop-color="#18addb"/><stop offset=".4297" stop-color="#2a93ed"/><stop offset=".4365" stop-color="#3579fd"/><stop offset=".4417" stop-color="#4465fd"/><stop offset=".4537" stop-color="#4746ea"/><stop offset=".4657" stop-color="#463cde"/><stop offset=".4811" stop-color="#463ee1"/><stop offset=".4914" stop-color="#484ff1"/><stop offset=".5" stop-color="#4269fe"/><stop offset=".5051" stop-color="#3080fb"/><stop offset=".5137" stop-color="#22a2e4"/><stop offset=".5172" stop-color="#17aeda"/><stop offset=".5206" stop-color="#01b8c9"/><stop offset=".5223" stop-color="#07bcbf"/><stop offset=".5257" stop-color="#27c2ac"/><stop offset=".5309" stop-color="#43ca8a"/><stop offset=".5395" stop-color="#8ccb50"/><stop offset=".5446" stop-color="#abc739"/><stop offset=".5497" stop-color="#bbc42f"/><stop offset=".5549" stop-color="#bdc32e"/><stop offset=".56" stop-color="#b1c635"/><stop offset=".5652" stop-color="#96ca48"/><stop offset=".572" stop-color="#5ecd74"/><stop offset=".5755" stop-color="#3fca8e"/><stop offset=".5806" stop-color="#24c1af"/><stop offset=".584" stop-color="#03bbc2"/><stop offset=".5858" stop-color="#03b7cc"/><stop offset=".5892" stop-color="#19addc"/><stop offset=".5978" stop-color="#2d8cf3"/><stop offset=".6012" stop-color="#307ffb"/><stop offset=".6063" stop-color="#426afe"/><stop offset=".6166" stop-color="#484bef"/><stop offset=".6286" stop-color="#4435d2"/><stop offset=".6424" stop-color="#402bb7"/><stop offset=".6595" stop-color="#3e27ab"/><stop offset=".9991" stop-color="#3e26a8"/></linearGradient>
<linearGradient id="r45"><stop offset=".0009" stop-color="#3e26a8"/><stop offset=".1913" stop-color="#3e28ac"/><stop offset=".2341" stop-color="#412dbd"/><stop offset=".253" stop-color="#4435d2"/><stop offset=".2684" stop-color="#4747eb"/><stop offset=".2822" stop-color="#4464fd"/><stop offset=".289" stop-color="#3579fd"/><stop offset=".3045" stop-color="#1caadf"/><stop offset=".3079" stop-color="#0bb3d2"/><stop offset=".3096" stop-color="#02b7cb"/><stop offset=".3113" stop-color="#03bbc2"/><stop offset=".3165" stop-color="#2cc4a7"/><stop offset=".3199" stop-color="#3bc992"/><stop offset=".325" stop-color="#68cd6b"/><stop offset=".3319" stop-color="#acc738"/><stop offset=".3353" stop-color="#c8c129"/><stop offset=".3388" stop-color="#debc2a"/><stop offset=".3439" stop-color="#f5ba3b"/><stop offset=".3473" stop-color="#febe3c"/><stop offset=".3576" stop-color="#fec934"/><stop offset=".3679" stop-color="#fec239"/><stop offset=".3731" stop-color="#f8ba3d"/><stop offset=".3782" stop-color="#e2bc2b"/><stop offset=".3816" stop-color="#ccc028"/><stop offset=".3851" stop-color="#b0c636"/><stop offset=".3919" stop-color="#69cd6b"/><stop offset=".3954" stop-color="#47cb87"/><stop offset=".3988" stop-color="#31c6a0"/><stop offset=".4022" stop-color="#1bc0b4"/><stop offset=".4039" stop-color="#0abdbe"/><stop offset=".4057" stop-color="#01b9c7"/><stop offset=".4074" stop-color="#07b5cf"/><stop offset=".4108" stop-color="#1babde"/><stop offset=".4194" stop-color="#2c8ef1"/><stop offset=".4245" stop-color="#327bfc"/><stop offset=".4297" stop-color="#426afe"/><stop offset=".4417" stop-color="#484aee"/><stop offset=".4503" stop-color="#4537d5"/><stop offset=".4588" stop-color="#3f28ad"/><stop offset=".4605" stop-color="#3f28ae"/><stop offset=".4708" stop-color="#463bdd"/><stop offset=".4811" stop-color="#4756f7"/><stop offset=".488" stop-color="#416cfe"/><stop offset=".4949" stop-color="#2e85f8"/><stop offset=".5034" stop-color="#20a4e3"/><stop offset=".5069" stop-color="#15afd9"/><stop offset=".5103" stop-color="#01b8c9"/><stop offset=".512" stop-color="#06bcc0"/><stop offset=".5154" stop-color="#24c2ae"/><stop offset=".5206" stop-color="#3dc990"/><stop offset=".5292" stop-color="#7fcc5a"/><stop offset=".5343" stop-color="#9ec942"/><stop offset=".5395" stop-color="#b0c636"/><stop offset=".5446" stop-color="#b6c532"/><stop offset=".5497" stop-color="#afc637"/><stop offset=".5549" stop-color="#9bc945"/><stop offset=".56" stop-color="#7acc5e"/><stop offset=".5686" stop-color="#39c994"/><stop offset=".572" stop-color="#2bc3a8"/><stop offset=".5738" stop-color="#1fc0b1"/><stop offset=".5755" stop-color="#0cbdbc"/><stop offset=".5772" stop-color="#02bac5"/><stop offset=".5789" stop-color="#05b6cd"/><stop offset=".5823" stop-color="#19acdc"/><stop offset=".5909" stop-color="#2c8ef1"/><stop offset=".5961" stop-color="#337bfc"/><stop offset=".6012" stop-color="#4368fe"/><stop offset=".6132" stop-color="#4848ec"/><stop offset=".6269" stop-color="#4433cd"/><stop offset=".6407" stop-color="#402bb7"/><stop offset=".663" stop-color="#3e27ab"/><stop offset=".9991" stop-color="#3e26a8"/></linearGradient>
<linearGradient id="r46"><stop offset=".0009" stop-color="#3e26a8"/><stop offset=".1621" stop-color="#3e27ac"/><stop offset=".1998" stop-color="#412cb8"/><stop offset=".2256" stop-color="#4434d0"/><stop offset=".2461" stop-color="#4747eb"/><stop offset=".2633" stop-color="#4367fd"/><stop offset=".2702" stop-color="#337bfc"/><stop offset=".2839" stop-color="#21a3e3"/><stop offset=".2873" stop-color="#18addb"/><stop offset=".2907" stop-color="#06b5ce"/><stop offset=".2925" stop-color="#01b9c7"/><stop offset=".2942" stop-color="#08bcbf"/><stop offset=".2976" stop-color="#24c1ae"/><stop offset=".3027" stop-color="#3cc991"/><stop offset=".3096" stop-color="#77cc60"/><stop offset=".3165" stop-color="#b5c533"/><stop offset=".3199" stop-color="#cdc028"/><stop offset=".325" stop-color="#e8bb2f"/><stop offset=".3302" stop-color="#f9bb3d"/><stop offset=".337" stop-color="#fec338"/><stop offset=".3473" stop-color="#fec537"/><stop offset=".3559" stop-color="#fabb3d"/><stop offset=".3593" stop-color="#f0ba36"/><stop offset=".3645" stop-color="#d8be28"/><stop offset=".3679" stop-color="#c2c22c"/><stop offset=".3731" stop-color="#97ca48"/><stop offset=".3799" stop-color="#54cc7d"/><stop offset=".3834" stop-color="#39c895"/><stop offset=".3868" stop-color="#29c3aa"/><stop offset=".3902" stop-color="#0cbdbc"/><stop offset=".3919" stop-color="#02bac5"/><stop offset=".3937" stop-color="#04b6cd"/><stop offset=".3971" stop-color="#18addb"/><stop offset=".4074" stop-color="#2d8bf4"/><stop offset=".4125" stop-color="#3479fd"/><stop offset=".4177" stop-color="#4368fe"/><stop offset=".428" stop-color="#484ff2"/><stop offset=".44" stop-color="#4744e8"/><stop offset=".4571" stop-color="#4745ea"/><stop offset=".4691" stop-color="#4756f7"/><stop offset=".476" stop-color="#4369fe"/><stop offset=".4811" stop-color="#337bfc"/><stop offset=".4931" stop-color="#1fa5e2"/><stop offset=".4966" stop-color="#14b0d8"/><stop offset=".4983" stop-color="#07b5d0"/><stop offset=".5" stop-color="#01b8c9"/><stop offset=".5017" stop-color="#07bcbf"/><stop offset=".5051" stop-color="#24c1ae"/><stop offset=".512" stop-color="#44cb89"/><stop offset=".5206" stop-color="#80cc59"/><stop offset=".5257" stop-color="#9ac945"/><stop offset=".5309" stop-color="#aac73a"/><stop offset=".5377" stop-color="#acc738"/><stop offset=".5429" stop-color="#a1c840"/><stop offset=".548" stop-color="#8acb52"/><stop offset=".5566" stop-color="#51cc7f"/><stop offset=".56" stop-color="#3bc993"/><stop offset=".5652" stop-color="#25c2ae"/><stop offset=".5686" stop-color="#08bcbf"/><stop offset=".5703" stop-color="#01b9c7"/><stop offset=".572" stop-color="#06b5cf"/><stop offset=".5755" stop-color="#1aacdd"/><stop offset=".5858" stop-color="#2d8af5"/><stop offset=".5909" stop-color="#3677fe"/><stop offset=".5961" stop-color="#4466fd"/><stop offset=".6115" stop-color="#4741e5"/><stop offset=".6269" stop-color="#4330c5"/><stop offset=".6441" stop-color="#3f29b2"/><stop offset=".6818" stop-color="#3e27ab"/><stop offset=".9991" stop-color="#3e26a8"/></linearGradient>
<linearGradient id="r47"><stop offset=".0009" stop-color="#3e26a8"/><stop offset=".1484" stop-color="#3f28ad"/><stop offset=".1844" stop-color="#422ebe"/><stop offset=".2136" stop-color="#473ee1"/><stop offset=".2358" stop-color="#465efb"/><stop offset=".2444" stop-color="#3d70ff"/><stop offset=".2513" stop-color="#2f82f9"/><stop offset=".2616" stop-color="#249de6"/><stop offset=".2684" stop-color="#15afd9"/><stop offset=".2719" stop-color="#03b7cc"/><stop offset=".2736" stop-color="#02bac5"/><stop offset=".2753" stop-color="#0abdbd"/><stop offset=".2787" stop-color="#25c2ae"/><stop offset=".2856" stop-color="#45cb89"/><stop offset=".2942" stop-color="#8dcb4f"/><stop offset=".2993" stop-color="#b5c533"/><stop offset=".3027" stop-color="#ccc028"/><stop offset=".3079" stop-color="#e5bb2d"/><stop offset=".3148" stop-color="#fabb3d"/><stop offset=".3216" stop-color="#fec13a"/><stop offset=".3336" stop-color="#fec13a"/><stop offset=".3405" stop-color="#f7ba3c"/><stop offset=".3473" stop-color="#debc2a"/><stop offset=".3508" stop-color="#ccc028"/><stop offset=".3559" stop-color="#a7c73c"/><stop offset=".3645" stop-color="#5acc77"/><stop offset=".3679" stop-color="#3eca8f"/><stop offset=".3731" stop-color="#26c2ac"/><stop offset=".3765" stop-color="#0abdbd"/><stop offset=".3782" stop-color="#01bac5"/><stop offset=".3799" stop-color="#04b6cd"/><stop offset=".3834" stop-color="#17aeda"/><stop offset=".3937" stop-color="#2c90f0"/><stop offset=".4005" stop-color="#337bfc"/><stop offset=".4074" stop-color="#4466fd"/><stop offset=".4177" stop-color="#484bee"/><stop offset=".4245" stop-color="#4639d9"/><stop offset=".4331" stop-color="#402ab3"/><stop offset=".4348" stop-color="#3f29b2"/><stop offset=".4468" stop-color="#4740e4"/><stop offset=".4571" stop-color="#475bf9"/><stop offset=".464" stop-color="#3e6fff"/><stop offset=".4691" stop-color="#2f81fa"/><stop offset=".4794" stop-color="#23a0e5"/><stop offset=".4846" stop-color="#16afd9"/><stop offset=".488" stop-color="#03b7cc"/><stop offset=".4897" stop-color="#02bac5"/><stop offset=".4914" stop-color="#0abdbd"/><stop offset=".4949" stop-color="#25c2ae"/><stop offset=".5017" stop-color="#42ca8b"/><stop offset=".512" stop-color="#81cc59"/><stop offset=".5189" stop-color="#9cc944"/><stop offset=".5257" stop-color="#a5c83d"/><stop offset=".5326" stop-color="#9cc944"/><stop offset=".5395" stop-color="#82cc58"/><stop offset=".5515" stop-color="#3bc993"/><stop offset=".5566" stop-color="#27c2ac"/><stop offset=".5617" stop-color="#02bbc3"/><stop offset=".5635" stop-color="#02b7ca"/><stop offset=".5686" stop-color="#1aabdd"/><stop offset=".5789" stop-color="#2d8bf4"/><stop offset=".584" stop-color="#347afd"/><stop offset=".5892" stop-color="#4269fe"/><stop offset=".6029" stop-color="#4848ec"/><stop offset=".6184" stop-color="#4433cd"/><stop offset=".6338" stop-color="#402bb6"/><stop offset=".6578" stop-color="#3e27a9"/><stop offset=".9991" stop-color="#3e26a8"/></linearGradient>
<linearGradient id="r48"><stop offset=".0009" stop-color="#3e26a8"/><stop offset=".1381" stop-color="#3f29b2"/><stop offset=".1672" stop-color="#4230c4"/><stop offset=".1913" stop-color="#473fe3"/><stop offset=".2153" stop-color="#4563fc"/><stop offset=".2238" stop-color="#3876fe"/><stop offset=".2307" stop-color="#2e87f7"/><stop offset=".2444" stop-color="#1da9e0"/><stop offset=".2479" stop-color="#13b0d7"/><stop offset=".2513" stop-color="#03b7cb"/><stop offset=".253" stop-color="#02bac5"/><stop offset=".2547" stop-color="#09bcbe"/><stop offset=".2599" stop-color="#2ac3a9"/><stop offset=".265" stop-color="#3eca90"/><stop offset=".2719" stop-color="#71cd64"/><stop offset=".2804" stop-color="#b2c535"/><stop offset=".2856" stop-color="#d0bf27"/><stop offset=".2925" stop-color="#ebba32"/><stop offset=".2976" stop-color="#f8ba3d"/><stop offset=".3062" stop-color="#fec03b"/><stop offset=".3199" stop-color="#fbbc3d"/><stop offset=".325" stop-color="#f2ba37"/><stop offset=".3319" stop-color="#d9bd28"/><stop offset=".3353" stop-color="#c8c129"/><stop offset=".3405" stop-color="#a5c83d"/><stop offset=".3491" stop-color="#5ccc76"/><stop offset=".3525" stop-color="#41ca8c"/><stop offset=".3593" stop-color="#21c1b1"/><stop offset=".3628" stop-color="#06bcc0"/><stop offset=".3645" stop-color="#01b8c8"/><stop offset=".3662" stop-color="#07b5cf"/><stop offset=".3696" stop-color="#19addc"/><stop offset=".3816" stop-color="#2d8af4"/><stop offset=".3868" stop-color="#327bfc"/><stop offset=".3937" stop-color="#4269fe"/><stop offset=".4074" stop-color="#4854f5"/><stop offset=".428" stop-color="#484aee"/><stop offset=".44" stop-color="#4853f5"/><stop offset=".4503" stop-color="#4369fe"/><stop offset=".4571" stop-color="#317efb"/><stop offset=".4691" stop-color="#21a3e3"/><stop offset=".4743" stop-color="#12b1d6"/><stop offset=".4777" stop-color="#01b8c9"/><stop offset=".4794" stop-color="#04bbc2"/><stop offset=".4846" stop-color="#27c2ac"/><stop offset=".4914" stop-color="#40ca8d"/><stop offset=".5017" stop-color="#7acc5e"/><stop offset=".5086" stop-color="#93ca4b"/><stop offset=".5154" stop-color="#9cc944"/><stop offset=".5223" stop-color="#96ca48"/><stop offset=".5292" stop-color="#80cc59"/><stop offset=".5412" stop-color="#40ca8d"/><stop offset=".548" stop-color="#27c2ab"/><stop offset=".5532" stop-color="#05bbc1"/><stop offset=".5549" stop-color="#01b9c8"/><stop offset=".5566" stop-color="#06b5ce"/><stop offset=".56" stop-color="#17aeda"/><stop offset=".5703" stop-color="#2b91ef"/><stop offset=".5772" stop-color="#327cfc"/><stop offset=".584" stop-color="#4367fd"/><stop offset=".5995" stop-color="#4746ea"/><stop offset=".6166" stop-color="#4332ca"/><stop offset=".6338" stop-color="#402bb6"/><stop offset=".663" stop-color="#3e27ab"/><stop offset=".9991" stop-color="#3e26a8"/></linearGradient>
<linearGradient id="r49"><stop offset=".0009" stop-color="#3e26a9"/><stop offset=".0935" stop-color="#3f29b0"/><stop offset=".1346" stop-color="#422ebe"/><stop offset=".1621" stop-color="#463adb"/><stop offset=".1861" stop-color="#4757f7"/><stop offset=".1981" stop-color="#3f6efe"/><stop offset=".2067" stop-color="#2f82f9"/><stop offset=".2187" stop-color="#249ee6"/><stop offset=".2256" stop-color="#17aedb"/><stop offset=".2307" stop-color="#02b7cb"/><stop offset=".2324" stop-color="#02bac5"/><stop offset=".2358" stop-color="#14bfb8"/><stop offset=".2393" stop-color="#29c3aa"/><stop offset=".2461" stop-color="#43ca8a"/><stop offset=".2564" stop-color="#8ccb50"/><stop offset=".2633" stop-color="#b9c431"/><stop offset=".2684" stop-color="#d3bf27"/><stop offset=".2753" stop-color="#ebba32"/><stop offset=".2822" stop-color="#f9bb3d"/><stop offset=".2959" stop-color="#fdbd3d"/><stop offset=".3045" stop-color="#f5ba3b"/><stop offset=".313" stop-color="#debc2a"/><stop offset=".3182" stop-color="#c7c129"/><stop offset=".3233" stop-color="#a9c73b"/><stop offset=".3336" stop-color="#5bcc77"/><stop offset=".3388" stop-color="#39c995"/><stop offset=".3439" stop-color="#25c2ad"/><stop offset=".3473" stop-color="#0bbdbd"/><stop offset=".3491" stop-color="#02bac4"/><stop offset=".3508" stop-color="#02b7cb"/><stop offset=".3559" stop-color="#19addc"/><stop offset=".3679" stop-color="#2d8cf3"/><stop offset=".3731" stop-color="#317dfc"/><stop offset=".3799" stop-color="#4368fd"/><stop offset=".3902" stop-color="#484bef"/><stop offset=".4005" stop-color="#4536d3"/><stop offset=".4057" stop-color="#4433cb"/><stop offset=".4125" stop-color="#4639da"/><stop offset=".4245" stop-color="#4853f5"/><stop offset=".4348" stop-color="#406cfe"/><stop offset=".4434" stop-color="#2e84f8"/><stop offset=".4554" stop-color="#21a3e3"/><stop offset=".4605" stop-color="#15afd9"/><stop offset=".464" stop-color="#05b6ce"/><stop offset=".4657" stop-color="#01b9c7"/><stop offset=".4674" stop-color="#05bbc1"/><stop offset=".4726" stop-color="#24c2ae"/><stop offset=".4811" stop-color="#42ca8c"/><stop offset=".4931" stop-color="#7acc5e"/><stop offset=".5" stop-color="#8dcb4f"/><stop offset=".5069" stop-color="#93ca4a"/><stop offset=".5137" stop-color="#8bcb51"/><stop offset=".5223" stop-color="#6dcd67"/><stop offset=".5343" stop-color="#36c898"/><stop offset=".5395" stop-color="#26c2ac"/><stop offset=".5446" stop-color="#06bcc0"/><stop offset=".5463" stop-color="#01b9c6"/><stop offset=".548" stop-color="#04b6cd"/><stop offset=".5532" stop-color="#1aacdd"/><stop offset=".5652" stop-color="#2d8cf3"/><stop offset=".572" stop-color="#3579fd"/><stop offset=".5789" stop-color="#4465fd"/><stop offset=".5978" stop-color="#4741e5"/><stop offset=".6166" stop-color="#4230c4"/><stop offset=".6372" stop-color="#3f29b2"/><stop offset=".6767" stop-color="#3e27ab"/><stop offset=".9991" stop-color="#3e26a8"/></linearGradient>
<linearGradient id="r50"><stop offset=".0009" stop-color="#3e26a8"/><stop offset=".0746" stop-color="#3f29b0"/><stop offset=".1141" stop-color="#422fc3"/><stop offset=".1432" stop-color="#463ee1"/><stop offset=".169" stop-color="#465efb"/><stop offset=".1792" stop-color="#3b72ff"/><stop offset=".1878" stop-color="#2e86f8"/><stop offset=".2015" stop-color="#20a5e3"/><stop offset=".2067" stop-color="#15afd9"/><stop offset=".2118" stop-color="#01b8c9"/><stop offset=".2136" stop-color="#02bac3"/><stop offset=".2204" stop-color="#28c3aa"/><stop offset=".2273" stop-color="#40ca8d"/><stop offset=".2393" stop-color="#8dcb4f"/><stop offset=".2461" stop-color="#b5c533"/><stop offset=".2513" stop-color="#cdc028"/><stop offset=".2599" stop-color="#e7bb2e"/><stop offset=".2702" stop-color="#f5ba3a"/><stop offset=".2822" stop-color="#f3ba39"/><stop offset=".2925" stop-color="#e0bc2a"/><stop offset=".2993" stop-color="#c8c129"/><stop offset=".3062" stop-color="#a3c83e"/><stop offset=".3182" stop-color="#51cc7f"/><stop offset=".3233" stop-color="#35c79a"/><stop offset=".3285" stop-color="#22c1b0"/><stop offset=".3319" stop-color="#0abdbe"/><stop offset=".3336" stop-color="#02bac4"/><stop offset=".3353" stop-color="#02b7ca"/><stop offset=".3405" stop-color="#18aedb"/><stop offset=".3542" stop-color="#2d8df2"/><stop offset=".3628" stop-color="#337afd"/><stop offset=".3731" stop-color="#4367fd"/><stop offset=".3971" stop-color="#484bef"/><stop offset=".4091" stop-color="#484df0"/><stop offset=".4211" stop-color="#4562fc"/><stop offset=".428" stop-color="#3876fe"/><stop offset=".4331" stop-color="#2e85f8"/><stop offset=".4451" stop-color="#1fa6e1"/><stop offset=".4503" stop-color="#0fb2d5"/><stop offset=".4537" stop-color="#01b8c9"/><stop offset=".4554" stop-color="#02bbc3"/><stop offset=".4623" stop-color="#29c3aa"/><stop offset=".4708" stop-color="#44ca8a"/><stop offset=".4828" stop-color="#75cc61"/><stop offset=".4914" stop-color="#88cb53"/><stop offset=".5" stop-color="#89cb53"/><stop offset=".5086" stop-color="#75cc61"/><stop offset=".524" stop-color="#38c896"/><stop offset=".5309" stop-color="#24c1af"/><stop offset=".536" stop-color="#06bcc0"/><stop offset=".5377" stop-color="#01b9c6"/><stop offset=".5412" stop-color="#0ab4d2"/><stop offset=".5463" stop-color="#1ca9df"/><stop offset=".56" stop-color="#2d87f7"/><stop offset=".5652" stop-color="#347afd"/><stop offset=".5738" stop-color="#4564fd"/><stop offset=".5926" stop-color="#4742e6"/><stop offset=".6132" stop-color="#4230c4"/><stop offset=".6372" stop-color="#3f29b0"/><stop offset=".6681" stop-color="#3e27a9"/><stop offset=".9991" stop-color="#3e26a8"/></linearGradient>
<linearGradient id="r51"><stop offset=".0009" stop-color="#3e27a9"/><stop offset=".0609" stop-color="#3f29b1"/><stop offset=".0952" stop-color="#4230c3"/><stop offset=".1244" stop-color="#4740e3"/><stop offset=".1518" stop-color="#4562fc"/><stop offset=".1621" stop-color="#3776fe"/><stop offset=".169" stop-color="#2e85f8"/><stop offset=".1844" stop-color="#20a5e2"/><stop offset=".1913" stop-color="#10b2d5"/><stop offset=".1947" stop-color="#02b7ca"/><stop offset=".1964" stop-color="#01bac5"/><stop offset=".1998" stop-color="#0fbeba"/><stop offset=".205" stop-color="#2ac3a9"/><stop offset=".2118" stop-color="#3eca8f"/><stop offset=".2256" stop-color="#8acb52"/><stop offset=".2341" stop-color="#b2c534"/><stop offset=".241" stop-color="#c9c129"/><stop offset=".2513" stop-color="#dcbd29"/><stop offset=".2633" stop-color="#debc2a"/><stop offset=".2736" stop-color="#cec028"/><stop offset=".2804" stop-color="#b9c431"/><stop offset=".289" stop-color="#91ca4c"/><stop offset=".3027" stop-color="#42ca8c"/><stop offset=".3113" stop-color="#24c1af"/><stop offset=".3165" stop-color="#05bbc1"/><stop offset=".3182" stop-color="#01b9c7"/><stop offset=".3216" stop-color="#0cb3d3"/><stop offset=".3268" stop-color="#1da9e0"/><stop offset=".3405" stop-color="#2e86f8"/><stop offset=".3456" stop-color="#3677fe"/><stop offset=".3525" stop-color="#4464fd"/><stop offset=".3662" stop-color="#484ef1"/><stop offset=".3782" stop-color="#484df0"/><stop offset=".3988" stop-color="#4368fd"/><stop offset=".4108" stop-color="#307ffb"/><stop offset=".4262" stop-color="#249fe6"/><stop offset=".4348" stop-color="#14b0d8"/><stop offset=".44" stop-color="#01b8ca"/><stop offset=".4434" stop-color="#07bcbf"/><stop offset=".4503" stop-color="#29c3aa"/><stop offset=".4605" stop-color="#45cb88"/><stop offset=".4726" stop-color="#6fcd66"/><stop offset=".4811" stop-color="#7fcc5a"/><stop offset=".4897" stop-color="#7fcc5a"/><stop offset=".4983" stop-color="#6dcd67"/><stop offset=".5154" stop-color="#34c79c"/><stop offset=".5206" stop-color="#26c2ac"/><stop offset=".5274" stop-color="#04bbc2"/><stop offset=".5309" stop-color="#04b6cc"/><stop offset=".536" stop-color="#18aedb"/><stop offset=".5515" stop-color="#2d8bf4"/><stop offset=".5583" stop-color="#347afd"/><stop offset=".5669" stop-color="#4465fd"/><stop offset=".5875" stop-color="#4742e6"/><stop offset=".6081" stop-color="#4331c7"/><stop offset=".6321" stop-color="#402ab3"/><stop offset=".675" stop-color="#3e27ab"/><stop offset=".9991" stop-color="#3e26a8"/></linearGradient>
<linearGradient id="r52"><stop offset=".0009" stop-color="#3e27a9"/><stop offset=".054" stop-color="#402ab3"/><stop offset=".0849" stop-color="#4331c7"/><stop offset=".1123" stop-color="#4743e7"/><stop offset=".1381" stop-color="#4466fd"/><stop offset=".1501" stop-color="#317dfc"/><stop offset=".169" stop-color="#22a1e4"/><stop offset=".1775" stop-color="#13b0d7"/><stop offset=".1827" stop-color="#01b7ca"/><stop offset=".1861" stop-color="#05bbc1"/><stop offset=".1947" stop-color="#2bc3a8"/><stop offset=".2033" stop-color="#41ca8c"/><stop offset=".2204" stop-color="#87cb54"/><stop offset=".2307" stop-color="#a3c83f"/><stop offset=".241" stop-color="#aec637"/><stop offset=".2513" stop-color="#a9c73a"/><stop offset=".2616" stop-color="#93ca4b"/><stop offset=".2719" stop-color="#6bcd69"/><stop offset=".2839" stop-color="#3ac994"/><stop offset=".2925" stop-color="#23c1af"/><stop offset=".2993" stop-color="#02bbc3"/><stop offset=".3027" stop-color="#04b6cd"/><stop offset=".3096" stop-color="#1aacdd"/><stop offset=".3268" stop-color="#2d8bf4"/><stop offset=".3336" stop-color="#327cfc"/><stop offset=".3422" stop-color="#4368fd"/><stop offset=".3559" stop-color="#484aee"/><stop offset=".3679" stop-color="#4537d5"/><stop offset=".3731" stop-color="#4537d6"/><stop offset=".3834" stop-color="#4849ed"/><stop offset=".3937" stop-color="#4464fd"/><stop offset=".4005" stop-color="#3479fd"/><stop offset=".4211" stop-color="#18addb"/><stop offset=".4262" stop-color="#04b6cd"/><stop offset=".4297" stop-color="#03bbc3"/><stop offset=".4383" stop-color="#2ac3a9"/><stop offset=".4503" stop-color="#49cb85"/><stop offset=".4623" stop-color="#6ccd68"/><stop offset=".4726" stop-color="#79cc5e"/><stop offset=".4811" stop-color="#74cd62"/><stop offset=".4931" stop-color="#58cc79"/><stop offset=".5051" stop-color="#34c79c"/><stop offset=".512" stop-color="#21c1b0"/><stop offset=".5189" stop-color="#02bac4"/><stop offset=".5223" stop-color="#05b6ce"/><stop offset=".5292" stop-color="#1baade"/><stop offset=".5446" stop-color="#2d8af5"/><stop offset=".5515" stop-color="#347afd"/><stop offset=".56" stop-color="#4367fd"/><stop offset=".5806" stop-color="#4745e9"/><stop offset=".6029" stop-color="#4332c9"/><stop offset=".6269" stop-color="#402ab4"/><stop offset=".6647" stop-color="#3e27ab"/><stop offset=".9991" stop-color="#3e26a8"/></linearGradient>
<linearGradient id="r53"><stop offset=".0009" stop-color="#3e27ab"/><stop offset=".0455" stop-color="#402ab4"/><stop offset=".0746" stop-color="#4332c9"/><stop offset=".1021" stop-color="#4744e9"/><stop offset=".1278" stop-color="#4466fd"/><stop offset=".1398" stop-color="#327cfc"/><stop offset=".1638" stop-color="#1fa6e2"/><stop offset=".1724" stop-color="#0fb2d5"/><stop offset=".1775" stop-color="#01b8ca"/><stop offset=".181" stop-color="#03bbc2"/><stop offset=".1913" stop-color="#27c2ac"/><stop offset=".2136" stop-color="#4fcc81"/><stop offset=".2256" stop-color="#5dcc75"/><stop offset=".2376" stop-color="#5acc78"/><stop offset=".2513" stop-color="#43ca8b"/><stop offset=".2684" stop-color="#22c1b0"/><stop offset=".2753" stop-color="#06bcc0"/><stop offset=".2787" stop-color="#01b8c8"/><stop offset=".2839" stop-color="#0eb2d4"/><stop offset=".2907" stop-color="#1da8e0"/><stop offset=".3096" stop-color="#2d88f6"/><stop offset=".325" stop-color="#3a73fe"/><stop offset=".3439" stop-color="#426afe"/><stop offset=".3662" stop-color="#3d71ff"/><stop offset=".3851" stop-color="#2d87f6"/><stop offset=".4022" stop-color="#20a5e2"/><stop offset=".4091" stop-color="#13b0d7"/><stop offset=".4142" stop-color="#02b7cb"/><stop offset=".4177" stop-color="#04bbc2"/><stop offset=".4262" stop-color="#29c3aa"/><stop offset=".44" stop-color="#48cb86"/><stop offset=".452" stop-color="#65cd6e"/><stop offset=".4623" stop-color="#6fcd66"/><stop offset=".4726" stop-color="#67cd6c"/><stop offset=".4846" stop-color="#4ccb83"/><stop offset=".5017" stop-color="#21c1b0"/><stop offset=".5086" stop-color="#03bbc2"/><stop offset=".512" stop-color="#02b7cb"/><stop offset=".5206" stop-color="#1baade"/><stop offset=".5377" stop-color="#2d88f6"/><stop offset=".5446" stop-color="#347afd"/><stop offset=".5532" stop-color="#4368fd"/><stop offset=".5738" stop-color="#4847ec"/><stop offset=".5961" stop-color="#4434cd"/><stop offset=".6201" stop-color="#402bb7"/><stop offset=".6578" stop-color="#3e27aa"/><stop offset=".9991" stop-color="#3e26a8"/></linearGradient>
<linearGradient id="r54"><stop offset=".0009" stop-color="#3e27ac"/><stop offset=".0403" stop-color="#402bb7"/><stop offset=".0695" stop-color="#4434ce"/><stop offset=".0986" stop-color="#4849ed"/><stop offset=".1226" stop-color="#4367fd"/><stop offset=".1364" stop-color="#317dfc"/><stop offset=".1655" stop-color="#1ea7e1"/><stop offset=".1775" stop-color="#0db3d3"/><stop offset=".1844" stop-color="#01b8ca"/><stop offset=".1913" stop-color="#04bbc1"/><stop offset=".2084" stop-color="#1dc0b3"/><stop offset=".2238" stop-color="#20c1b1"/><stop offset=".2376" stop-color="#11beb9"/><stop offset=".2479" stop-color="#02bac5"/><stop offset=".253" stop-color="#03b7cc"/><stop offset=".2667" stop-color="#1caadf"/><stop offset=".289" stop-color="#2e85f8"/><stop offset=".2959" stop-color="#3875fe"/><stop offset=".3045" stop-color="#4561fc"/><stop offset=".3233" stop-color="#473ee2"/><stop offset=".3319" stop-color="#463ddf"/><stop offset=".3456" stop-color="#4852f4"/><stop offset=".3576" stop-color="#406cfe"/><stop offset=".3662" stop-color="#2f81fa"/><stop offset=".3834" stop-color="#21a3e4"/><stop offset=".3919" stop-color="#13b0d7"/><stop offset=".3971" stop-color="#03b7cc"/><stop offset=".4005" stop-color="#02bac4"/><stop offset=".4108" stop-color="#27c2ac"/><stop offset=".428" stop-color="#4acb85"/><stop offset=".44" stop-color="#61cd71"/><stop offset=".452" stop-color="#67cd6c"/><stop offset=".464" stop-color="#5bcc76"/><stop offset=".4846" stop-color="#31c5a1"/><stop offset=".4914" stop-color="#20c1b1"/><stop offset=".4983" stop-color="#04bbc2"/><stop offset=".5017" stop-color="#01b8ca"/><stop offset=".5103" stop-color="#19acdc"/><stop offset=".5292" stop-color="#2d8af4"/><stop offset=".5377" stop-color="#3479fd"/><stop offset=".548" stop-color="#4465fd"/><stop offset=".5738" stop-color="#4742e6"/><stop offset=".5995" stop-color="#4331c6"/><stop offset=".6286" stop-color="#402ab3"/><stop offset=".6835" stop-color="#3e27aa"/><stop offset=".9991" stop-color="#3e26a8"/></linearGradient>
<linearGradient id="r55"><stop offset=".0009" stop-color="#3f28ae"/><stop offset=".0386" stop-color="#412cba"/><stop offset=".0746" stop-color="#463ada"/><stop offset=".1123" stop-color="#475bf9"/><stop offset=".1295" stop-color="#3d70ff"/><stop offset=".1432" stop-color="#2f82fa"/><stop offset=".1775" stop-color="#22a2e4"/><stop offset=".2067" stop-color="#1aacdd"/><stop offset=".2393" stop-color="#21a3e3"/><stop offset=".2719" stop-color="#2d8af5"/><stop offset=".2873" stop-color="#3579fd"/><stop offset=".3045" stop-color="#4563fc"/><stop offset=".3233" stop-color="#4853f5"/><stop offset=".337" stop-color="#4759f8"/><stop offset=".3491" stop-color="#406dfe"/><stop offset=".3593" stop-color="#2e84f8"/><stop offset=".3748" stop-color="#20a4e3"/><stop offset=".3816" stop-color="#14b0d8"/><stop offset=".3868" stop-color="#03b6cc"/><stop offset=".3902" stop-color="#02bac4"/><stop offset=".4005" stop-color="#27c2ac"/><stop offset=".4228" stop-color="#50cc7f"/><stop offset=".4348" stop-color="#5ecd74"/><stop offset=".4468" stop-color="#5bcc77"/><stop offset=".4623" stop-color="#41ca8c"/><stop offset=".4794" stop-color="#23c1af"/><stop offset=".488" stop-color="#04bbc2"/><stop offset=".4914" stop-color="#01b8c9"/><stop offset=".5017" stop-color="#1babde"/><stop offset=".5223" stop-color="#2d88f6"/><stop offset=".5309" stop-color="#3578fd"/><stop offset=".5412" stop-color="#4466fd"/><stop offset=".5686" stop-color="#4742e6"/><stop offset=".5961" stop-color="#4331c6"/><stop offset=".6269" stop-color="#3f29b2"/><stop offset=".6784" stop-color="#3e27aa"/><stop offset=".9991" stop-color="#3e26a8"/></linearGradient>
<linearGradient id="r56"><stop offset=".0009" stop-color="#402ab3"/><stop offset=".0369" stop-color="#422ebe"/><stop offset=".0798" stop-color="#473fe2"/><stop offset=".1209" stop-color="#465ffb"/><stop offset=".1449" stop-color="#3a74fe"/><stop offset=".1655" stop-color="#2e83f9"/><stop offset=".1981" stop-color="#2d8cf3"/><stop offset=".2358" stop-color="#2f81fa"/><stop offset=".2736" stop-color="#3a74fe"/><stop offset=".3045" stop-color="#317dfc"/><stop offset=".3319" stop-color="#2b92ee"/><stop offset=".3559" stop-color="#1aacdd"/><stop offset=".3696" stop-color="#01b9c8"/><stop offset=".3748" stop-color="#08bcbe"/><stop offset=".3851" stop-color="#27c2ac"/><stop offset=".4108" stop-color="#4ccb83"/><stop offset=".4245" stop-color="#56cc7b"/><stop offset=".4383" stop-color="#4fcc81"/><stop offset=".4588" stop-color="#32c69f"/><stop offset=".4674" stop-color="#23c1af"/><stop offset=".4777" stop-color="#02bbc3"/><stop offset=".4811" stop-color="#01b8ca"/><stop offset=".4931" stop-color="#1caadf"/><stop offset=".5137" stop-color="#2d89f5"/><stop offset=".524" stop-color="#3678fe"/><stop offset=".536" stop-color="#4564fd"/><stop offset=".5686" stop-color="#473fe2"/><stop offset=".6029" stop-color="#422ebe"/><stop offset=".6441" stop-color="#3e28ad"/><stop offset=".7196" stop-color="#3e27a9"/><stop offset=".9991" stop-color="#3e26a8"/></linearGradient>
<linearGradient id="r57"><stop offset=".0009" stop-color="#3f28ad"/><stop offset=".0472" stop-color="#4331c7"/><stop offset=".1003" stop-color="#4849ed"/><stop offset=".1484" stop-color="#4562fc"/><stop offset=".1878" stop-color="#416cfe"/><stop offset=".2204" stop-color="#4661fc"/><stop offset=".2616" stop-color="#4743e7"/><stop offset=".277" stop-color="#4848ec"/><stop offset=".2993" stop-color="#4368fe"/><stop offset=".3113" stop-color="#307ffb"/><stop offset=".3353" stop-color="#1fa6e2"/><stop offset=".3456" stop-color="#0eb2d4"/><stop offset=".3508" stop-color="#02b7cb"/><stop offset=".3559" stop-color="#05bbc1"/><stop offset=".3679" stop-color="#27c2ac"/><stop offset=".3954" stop-color="#49cb85"/><stop offset=".4108" stop-color="#53cc7d"/><stop offset=".4262" stop-color="#49cb85"/><stop offset=".452" stop-color="#29c3aa"/><stop offset=".4605" stop-color="#13beb8"/><stop offset=".4674" stop-color="#02bac5"/><stop offset=".4726" stop-color="#06b6ce"/><stop offset=".4828" stop-color="#1baade"/><stop offset=".5069" stop-color="#2e87f7"/><stop offset=".5172" stop-color="#3777fe"/><stop offset=".5309" stop-color="#4562fc"/><stop offset=".5652" stop-color="#473ee1"/><stop offset=".6029" stop-color="#422ebe"/><stop offset=".6475" stop-color="#3f28ae"/><stop offset=".8173" stop-color="#3e26a9"/><stop offset=".9991" stop-color="#3e26a8"/></linearGradient>
<linearGradient id="r58"><stop offset=".0009" stop-color="#412dbd"/><stop offset=".042" stop-color="#4331c8"/><stop offset=".1158" stop-color="#4747eb"/><stop offset=".1861" stop-color="#4757f7"/><stop offset=".2238" stop-color="#484ff2"/><stop offset=".2599" stop-color="#463de0"/><stop offset=".2753" stop-color="#4746eb"/><stop offset=".2959" stop-color="#4367fd"/><stop offset=".3062" stop-color="#327cfc"/><stop offset=".3319" stop-color="#1da9e0"/><stop offset=".3405" stop-color="#0bb3d2"/><stop offset=".3456" stop-color="#01b8c9"/><stop offset=".3508" stop-color="#08bcbf"/><stop offset=".3611" stop-color="#26c2ad"/><stop offset=".3851" stop-color="#3fca8e"/><stop offset=".4022" stop-color="#47cb87"/><stop offset=".4211" stop-color="#3bc993"/><stop offset=".4417" stop-color="#24c1af"/><stop offset=".4554" stop-color="#02bac5"/><stop offset=".4605" stop-color="#04b6cd"/><stop offset=".4726" stop-color="#1baade"/><stop offset=".4983" stop-color="#2d88f6"/><stop offset=".5086" stop-color="#3578fd"/><stop offset=".5223" stop-color="#4465fd"/><stop offset=".5583" stop-color="#4740e4"/><stop offset=".5943" stop-color="#422fc2"/><stop offset=".6355" stop-color="#3f29b0"/><stop offset=".7281" stop-color="#3e27a9"/><stop offset=".9991" stop-color="#3e26a8"/></linearGradient>
<linearGradient id="r59"><stop offset=".0009" stop-color="#402ab5"/><stop offset=".0489" stop-color="#4331c6"/><stop offset=".1123" stop-color="#463bdd"/><stop offset=".1792" stop-color="#484aee"/><stop offset=".2444" stop-color="#4269fe"/><stop offset=".2719" stop-color="#3080fb"/><stop offset=".3027" stop-color="#23a1e4"/><stop offset=".3182" stop-color="#13b1d7"/><stop offset=".3268" stop-color="#02b7cb"/><stop offset=".3319" stop-color="#02bac3"/><stop offset=".3491" stop-color="#27c2ab"/><stop offset=".3748" stop-color="#3bc993"/><stop offset=".3954" stop-color="#3cc991"/><stop offset=".4194" stop-color="#2dc4a5"/><stop offset=".4314" stop-color="#1ac0b4"/><stop offset=".4417" stop-color="#02bbc3"/><stop offset=".4485" stop-color="#04b6cd"/><stop offset=".4605" stop-color="#1aacdd"/><stop offset=".4897" stop-color="#2d88f6"/><stop offset=".5017" stop-color="#3777fe"/><stop offset=".5172" stop-color="#4563fc"/><stop offset=".5583" stop-color="#463de0"/><stop offset=".6012" stop-color="#412dbd"/><stop offset=".6527" stop-color="#3e27ac"/><stop offset=".7762" stop-color="#3e27a9"/><stop offset=".9991" stop-color="#3e26a8"/></linearGradient>
<linearGradient id="r60"><stop offset=".0009" stop-color="#402ab5"/><stop offset=".0883" stop-color="#4332ca"/><stop offset=".1432" stop-color="#4331c6"/><stop offset=".169" stop-color="#4639da"/><stop offset=".2067" stop-color="#4759f9"/><stop offset=".2273" stop-color="#3d70ff"/><stop offset=".2427" stop-color="#2e83f9"/><stop offset=".2719" stop-color="#21a2e4"/><stop offset=".289" stop-color="#10b2d5"/><stop offset=".2993" stop-color="#01b8c8"/><stop offset=".3062" stop-color="#07bcc0"/><stop offset=".3233" stop-color="#27c2ab"/><stop offset=".3542" stop-color="#3cc991"/><stop offset=".3765" stop-color="#3eca8f"/><stop offset=".4039" stop-color="#2ec5a4"/><stop offset=".4177" stop-color="#1cc0b4"/><stop offset=".4297" stop-color="#02bac4"/><stop offset=".4365" stop-color="#04b6cd"/><stop offset=".4503" stop-color="#1babde"/><stop offset=".4811" stop-color="#2d88f6"/><stop offset=".4949" stop-color="#3776fe"/><stop offset=".5103" stop-color="#4563fd"/><stop offset=".5532" stop-color="#473fe2"/><stop offset=".5995" stop-color="#422ebf"/><stop offset=".6544" stop-color="#3f28ae"/><stop offset=".8379" stop-color="#3e26a9"/><stop offset=".9991" stop-color="#3e26a8"/></linearGradient>
<linearGradient id="r61"><stop offset=".0009" stop-color="#4331c6"/><stop offset=".0866" stop-color="#4331c6"/><stop offset=".1312" stop-color="#412dbc"/><stop offset=".1501" stop-color="#4332ca"/><stop offset=".1792" stop-color="#4848ec"/><stop offset=".2067" stop-color="#4367fd"/><stop offset=".2238" stop-color="#307ffb"/><stop offset=".2564" stop-color="#1fa6e2"/><stop offset=".2684" stop-color="#12b1d6"/><stop offset=".277" stop-color="#02b7cb"/><stop offset=".2839" stop-color="#04bbc2"/><stop offset=".301" stop-color="#26c2ac"/><stop offset=".3336" stop-color="#3eca90"/><stop offset=".3559" stop-color="#41ca8c"/><stop offset=".3816" stop-color="#34c79b"/><stop offset=".4005" stop-color="#24c1af"/><stop offset=".4177" stop-color="#02bac4"/><stop offset=".4245" stop-color="#04b6cd"/><stop offset=".44" stop-color="#1baade"/><stop offset=".4726" stop-color="#2d88f6"/><stop offset=".4863" stop-color="#3677fe"/><stop offset=".5034" stop-color="#4563fd"/><stop offset=".5497" stop-color="#473ee2"/><stop offset=".5995" stop-color="#412ebe"/><stop offset=".6578" stop-color="#3f28ae"/><stop offset=".9031" stop-color="#3e26a8"/><stop offset=".9991" stop-color="#3e26a8"/></linearGradient>
<linearGradient id="r62"><stop offset=".0009" stop-color="#4433cc"/><stop offset=".0832" stop-color="#4639d9"/><stop offset=".1346" stop-color="#4848ec"/><stop offset=".1775" stop-color="#4367fd"/><stop offset=".1981" stop-color="#307ffb"/><stop offset=".2341" stop-color="#20a5e3"/><stop offset=".2496" stop-color="#10b2d5"/><stop offset=".2599" stop-color="#01b8c9"/><stop offset=".2667" stop-color="#05bbc1"/><stop offset=".2839" stop-color="#26c2ad"/><stop offset=".3148" stop-color="#3ac994"/><stop offset=".3405" stop-color="#3eca8f"/><stop offset=".3696" stop-color="#31c69f"/><stop offset=".3868" stop-color="#22c1b0"/><stop offset=".4039" stop-color="#02bbc3"/><stop offset=".4125" stop-color="#04b6cd"/><stop offset=".428" stop-color="#1babde"/><stop offset=".464" stop-color="#2d87f6"/><stop offset=".4794" stop-color="#3776fe"/><stop offset=".4983" stop-color="#4562fc"/><stop offset=".548" stop-color="#463de0"/><stop offset=".6012" stop-color="#412dbd"/><stop offset=".663" stop-color="#3e28ac"/><stop offset=".9631" stop-color="#3e26a8"/><stop offset=".9991" stop-color="#3e26a8"/></linearGradient>
<linearGradient id="r63"><stop offset=".0009" stop-color="#422fc0"/><stop offset=".0352" stop-color="#4434ce"/><stop offset=".0969" stop-color="#484ef1"/><stop offset=".1398" stop-color="#416afe"/><stop offset=".1655" stop-color="#2f82fa"/><stop offset=".2015" stop-color="#22a1e4"/><stop offset=".2221" stop-color="#13b0d7"/><stop offset=".2358" stop-color="#01b8c9"/><stop offset=".2444" stop-color="#06bcc1"/><stop offset=".2667" stop-color="#27c2ab"/><stop offset=".2993" stop-color="#37c897"/><stop offset=".3285" stop-color="#39c895"/><stop offset=".3628" stop-color="#29c3aa"/><stop offset=".3782" stop-color="#13beb8"/><stop offset=".3902" stop-color="#02bac5"/><stop offset=".3988" stop-color="#05b6ce"/><stop offset=".416" stop-color="#1babde"/><stop offset=".4537" stop-color="#2d88f6"/><stop offset=".4708" stop-color="#3777fe"/><stop offset=".4914" stop-color="#4562fc"/><stop offset=".5446" stop-color="#463ee1"/><stop offset=".6046" stop-color="#412dbc"/><stop offset=".6732" stop-color="#3e28ac"/><stop offset=".9734" stop-color="#3e26a8"/><stop offset=".9991" stop-color="#3e26a8"/></linearGradient>
<linearGradient id="r64"><stop offset=".0009" stop-color="#4230c3"/><stop offset=".0266" stop-color="#4435d2"/><stop offset=".0729" stop-color="#484ff2"/><stop offset=".1106" stop-color="#416bfe"/><stop offset=".1364" stop-color="#2f82fa"/><stop offset=".1775" stop-color="#21a3e4"/><stop offset=".1998" stop-color="#11b1d6"/><stop offset=".2136" stop-color="#01b8ca"/><stop offset=".2238" stop-color="#06bcc1"/><stop offset=".2496" stop-color="#26c2ac"/><stop offset=".2839" stop-color="#33c79c"/><stop offset=".3165" stop-color="#32c69f"/><stop offset=".3456" stop-color="#24c1ae"/><stop offset=".3714" stop-color="#02bac4"/><stop offset=".3816" stop-color="#05b6ce"/><stop offset=".4022" stop-color="#1caadf"/><stop offset=".4434" stop-color="#2d88f6"/><stop offset=".4623" stop-color="#3876fe"/><stop offset=".4846" stop-color="#4562fc"/><stop offset=".5429" stop-color="#463de0"/><stop offset=".6063" stop-color="#412dbd"/><stop offset=".6818" stop-color="#3f28ad"/><stop offset=".9991" stop-color="#3e26a8"/></linearGradient>
<linearGradient id="r65"><stop offset=".0009" stop-color="#4851f4"/><stop offset=".0506" stop-color="#475cfa"/><stop offset=".0866" stop-color="#3e70ff"/><stop offset=".1141" stop-color="#2e83f9"/><stop offset=".1621" stop-color="#20a4e3"/><stop offset=".1861" stop-color="#11b2d5"/><stop offset=".2015" stop-color="#01b8ca"/><stop offset=".2153" stop-color="#06bcc0"/><stop offset=".2461" stop-color="#22c1af"/><stop offset=".2822" stop-color="#2ac3a9"/><stop offset=".3148" stop-color="#21c1b1"/><stop offset=".3491" stop-color="#01bac5"/><stop offset=".3611" stop-color="#06b5ce"/><stop offset=".3834" stop-color="#1baade"/><stop offset=".4314" stop-color="#2d87f6"/><stop offset=".452" stop-color="#3876fe"/><stop offset=".476" stop-color="#4562fc"/><stop offset=".5377" stop-color="#463ee1"/><stop offset=".6063" stop-color="#412dbd"/><stop offset=".6835" stop-color="#3f28ad"/><stop offset=".9991" stop-color="#3e26a8"/></linearGradient>
<linearGradient id="r66"><stop offset=".0009" stop-color="#475bf9"/><stop offset=".0489" stop-color="#4465fd"/><stop offset=".0832" stop-color="#3678fe"/><stop offset=".1106" stop-color="#2d89f5"/><stop offset=".1775" stop-color="#18aedb"/><stop offset=".2101" stop-color="#01b8ca"/><stop offset=".2358" stop-color="#06bcc0"/><stop offset=".2736" stop-color="#0cbdbc"/><stop offset=".3165" stop-color="#01b8c8"/><stop offset=".3388" stop-color="#0eb3d4"/><stop offset=".3662" stop-color="#1ea7e1"/><stop offset=".4211" stop-color="#2e84f8"/><stop offset=".4451" stop-color="#3c71ff"/><stop offset=".476" stop-color="#475cfa"/><stop offset=".5446" stop-color="#463adc"/><stop offset=".6132" stop-color="#412dbb"/><stop offset=".6973" stop-color="#3e27ac"/><stop offset=".9991" stop-color="#3e26a8"/></linearGradient>
<linearGradient id="r67"><stop offset=".0009" stop-color="#4433cb"/><stop offset=".0232" stop-color="#463adb"/><stop offset=".0592" stop-color="#4855f6"/><stop offset=".0918" stop-color="#3f6eff"/><stop offset=".1175" stop-color="#2e83f9"/><stop offset=".1775" stop-color="#20a4e3"/><stop offset=".2358" stop-color="#0fb2d5"/><stop offset=".2753" stop-color="#0fb2d4"/><stop offset=".337" stop-color="#20a4e3"/><stop offset=".4142" stop-color="#327cfc"/><stop offset=".4485" stop-color="#4466fd"/><stop offset=".5172" stop-color="#4743e7"/><stop offset=".5875" stop-color="#4331c6"/><stop offset=".6647" stop-color="#3f29b1"/><stop offset=".8053" stop-color="#3e27a9"/><stop offset=".9991" stop-color="#3e26a8"/></linearGradient>
<linearGradient id="r68"><stop offset=".0009" stop-color="#484ff2"/><stop offset=".0472" stop-color="#475bf9"/><stop offset=".0883" stop-color="#3d70ff"/><stop offset=".1209" stop-color="#2e83f9"/><stop offset=".193" stop-color="#249ee6"/><stop offset=".2616" stop-color="#21a3e3"/><stop offset=".3336" stop-color="#2995ec"/><stop offset=".3937" stop-color="#337afd"/><stop offset=".4348" stop-color="#4564fd"/><stop offset=".5137" stop-color="#4742e6"/><stop offset=".5943" stop-color="#4230c4"/><stop offset=".6835" stop-color="#3f29b0"/><stop offset=".8688" stop-color="#3e26a9"/><stop offset=".9991" stop-color="#3e26a8"/></linearGradient>
<linearGradient id="r69"><stop offset=".0009" stop-color="#3876fe"/><stop offset=".0969" stop-color="#2e83f9"/><stop offset=".2118" stop-color="#2994ed"/><stop offset=".2925" stop-color="#2c8ef1"/><stop offset=".3593" stop-color="#337bfd"/><stop offset=".4142" stop-color="#4563fd"/><stop offset=".5034" stop-color="#4742e6"/><stop offset=".5943" stop-color="#4230c3"/><stop offset=".6921" stop-color="#3f29af"/><stop offset=".8894" stop-color="#3e26a9"/><stop offset=".9991" stop-color="#3e26a8"/></linearGradient>
<linearGradient id="r70"><stop offset=".0009" stop-color="#426afe"/><stop offset=".1021" stop-color="#3875fe"/><stop offset=".1947" stop-color="#2f82fa"/><stop offset=".2839" stop-color="#317efb"/><stop offset=".3816" stop-color="#4564fd"/><stop offset=".4811" stop-color="#4745e9"/><stop offset=".584" stop-color="#4331c6"/><stop offset=".687" stop-color="#3f29b1"/><stop offset=".8619" stop-color="#3e26a9"/><stop offset=".9991" stop-color="#3e26a8"/></linearGradient>
<linearGradient id="r71"><stop offset=".0009" stop-color="#463ee1"/><stop offset=".0695" stop-color="#484bee"/><stop offset=".1638" stop-color="#4563fd"/><stop offset=".2513" stop-color="#416bfe"/><stop offset=".3542" stop-color="#465efb"/><stop offset=".4726" stop-color="#4743e7"/><stop offset=".5961" stop-color="#4230c3"/><stop offset=".7196" stop-color="#3f28af"/><stop offset=".9631" stop-color="#3e26a8"/><stop offset=".9991" stop-color="#3e26a8"/></linearGradient>
<linearGradient id="r72"><stop offset=".0009" stop-color="#4433cb"/><stop offset=".0489" stop-color="#4539d9"/><stop offset=".1278" stop-color="#484df0"/><stop offset=".2307" stop-color="#475bfa"/><stop offset=".3422" stop-color="#4755f6"/><stop offset=".4777" stop-color="#463ee1"/><stop offset=".6458" stop-color="#412cb9"/><stop offset=".807" stop-color="#3e27ab"/><stop offset=".9991" stop-color="#3e26a9"/></linearGradient>
<linearGradient id="r73"><stop offset=".0009" stop-color="#4850f2"/><stop offset=".2496" stop-color="#4755f6"/><stop offset=".4091" stop-color="#4744e9"/><stop offset=".6029" stop-color="#422fc0"/><stop offset=".7693" stop-color="#3f28ae"/><stop offset=".9991" stop-color="#3e26a8"/></linearGradient>
<linearGradient id="r74"><stop offset=".0009" stop-color="#4759f8"/><stop offset=".2496" stop-color="#4851f3"/><stop offset=".428" stop-color="#463ee1"/><stop offset=".6647" stop-color="#402bb7"/><stop offset=".8671" stop-color="#3e27aa"/><stop offset=".9991" stop-color="#3e27a9"/></linearGradient>
<linearGradient id="r75"><stop offset=".0009" stop-color="#4852f4"/><stop offset=".2633" stop-color="#4849ed"/><stop offset=".4537" stop-color="#4538d7"/><stop offset=".6784" stop-color="#402bb6"/><stop offset=".9082" stop-color="#3e27aa"/><stop offset=".9991" stop-color="#3e27a9"/></linearGradient>
<linearGradient id="r76"><stop offset=".0009" stop-color="#4743e7"/><stop offset=".2959" stop-color="#463ee1"/><stop offset=".5309" stop-color="#4331c7"/><stop offset=".7762" stop-color="#3f28af"/><stop offset=".9991" stop-color="#3e27a9"/></linearGradient>
<linearGradient id="r77"><stop offset=".0009" stop-color="#4433cd"/><stop offset=".3165" stop-color="#4536d2"/><stop offset=".8379" stop-color="#3f28ae"/><stop offset=".9991" stop-color="#3e27ab"/></linearGradient>
<linearGradient id="r78"><stop offset=".0009" stop-color="#3f28af"/><stop offset=".2787" stop-color="#4331c6"/><stop offset=".4983" stop-color="#422fc1"/><stop offset=".934" stop-color="#3e27ab"/><stop offset=".9991" stop-color="#3e27aa"/></linearGradient>
<linearGradient id="r79"><stop offset=".0009" stop-color="#412cb9"/><stop offset=".3731" stop-color="#422fc2"/><stop offset=".9786" stop-color="#3e27ac"/><stop offset=".9991" stop-color="#3e27ac"/></linearGradient>
<linearGradient id="r80"><stop offset=".0009" stop-color="#4331c6"/><stop offset=".4331" stop-color="#422fc0"/><stop offset=".9666" stop-color="#3f28ad"/><stop offset=".9991" stop-color="#3f28ad"/></linearGradient>
</defs>
<g shape-rendering="crispEdges"><rect x="296" y="173" width="583" height="2" fill="url(#r0)"/>
<rect x="296" y="175" width="583" height="6" fill="url(#r1)"/>
<rect x="296" y="181" width="583" height="6" fill="url(#r2)"/>
<rect x="296" y="187" width="583" height="5" fill="url(#r3)"/>
<rect x="296" y="192" width="583" height="6" fill="url(#r4)"/>
<rect x="296" y="198" width="583" height="6" fill="url(#r5)"/>
<rect x="296" y="204" width="583" height="5" fill="url(#r6)"/>
<rect x="296" y="209" width="583" height="6" fill="url(#r7)"/>
<rect x="296" y="215" width="583" height="6" fill="url(#r8)"/>
<rect x="296" y="221" width="583" height="5" fill="url(#r9)"/>
<rect x="296" y="226" width="583" height="6" fill="url(#r10)"/>
<rect x="296" y="232" width="583" height="5" fill="url(#r11)"/>
<rect x="296" y="237" width="583" height="6" fill="url(#r12)"/>
<rect x="296" y="243" width="583" height="6" fill="url(#r13)"/>
<rect x="296" y="249" width="583" height="5" fill="url(#r14)"/>
<rect x="296" y="254" width="583" height="6" fill="url(#r15)"/>
<rect x="296" y="260" width="583" height="6" fill="url(#r16)"/>
<rect x="296" y="266" width="583" height="5" fill="url(#r17)"/>
<rect x="296" y="271" width="583" height="6" fill="url(#r18)"/>
<rect x="296" y="277" width="583" height="6" fill="url(#r19)"/>
<rect x="296" y="283" width="583" height="5" fill="url(#r20)"/>
<rect x="296" y="288" width="583" height="6" fill="url(#r21)"/>
<rect x="296" y="294" width="583" height="6" fill="url(#r22)"/>
<rect x="296" y="300" width="583" height="5" fill="url(#r23)"/>
<rect x="296" y="305" width="583" height="6" fill="url(#r24)"/>
<rect x="296" y="311" width="583" height="6" fill="url(#r25)"/>
<rect x="296" y="317" width="583" height="5" fill="url(#r26)"/>
<rect x="296" y="322" width="583" height="6" fill="url(#r27)"/>
<rect x="296" y="328" width="583" height="6" fill="url(#r28)"/>
<rect x="296" y="334" width="583" height="5" fill="url(#r29)"/>
<rect x="296" y="339" width="583" height="6" fill="url(#r30)"/>
<rect x="296" y="345" width="583" height="5" fill="url(#r31)"/>
<rect x="296" y="350" width="583" height="6" fill="url(#r32)"/>
<rect x="296" y="356" width="583" height="6" fill="url(#r33)"/>
<rect x="296" y="362" width="583" height="5" fill="url(#r34)"/>
<rect x="296" y="367" width="583" height="6" fill="url(#r35)"/>
<rect x="296" y="373" width="583" height="6" fill="url(#r36)"/>
<rect x="296" y="379" width="583" height="5" fill="url(#r37)"/>
<rect x="296" y="384" width="583" height="6" fill="url(#r38)"/>
<rect x="296" y="390" width="583" height="6" fill="url(#r39)"/>
<rect x="296" y="396" width="583" height="5" fill="url(#r40)"/>
<rect x="296" y="401" width="583" height="6" fill="url(#r41)"/>
<rect x="296" y="407" width="583" height="6" fill="url(#r42)"/>
<rect x="296" y="413" width="583" height="5" fill="url(#r43)"/>
<rect x="296" y="418" width="583" height="6" fill="url(#r44)"/>
<rect x="296" y="424" width="583" height="6" fill="url(#r45)"/>
<rect x="296" y="430" width="583" height="5" fill="url(#r46)"/>
<rect x="296" y="435" width="583" height="6" fill="url(#r47)"/>
<rect x="296" y="441" width="583" height="6" fill="url(#r48)"/>
<rect x="296" y="447" width="583" height="5" fill="url(#r49)"/>
<rect x="296" y="452" width="583" height="6" fill="url(#r50)"/>
<rect x="296" y="458" width="583" height="5" fill="url(#r51)"/>
<rect x="296" y="463" width="583" height="6" fill="url(#r52)"/>
<rect x="296" y="469" width="583" height="6" fill="url(#r53)"/>
<rect x="296" y="475" width="583" height="5" fill="url(#r54)"/>
<rect x="296" y="480" width="583" height="6" fill="url(#r55)"/>
<rect x="296" y="486" width="583" height="6" fill="url(#r56)"/>
<rect x="296" y="492" width="583" height="5" fill="url(#r57)"/>
<rect x="296" y="497" width="583" height="6" fill="url(#r58)"/>
<rect x="296" y="503" width="583" height="6" fill="url(#r59)"/>
<rect x="296" y="509" width="583" height="5" fill="url(#r60)"/>
<rect x="296" y="514" width="583" height="6" fill="url(#r61)"/>
<rect x="296" y="520" width="583" height="6" fill="url(#r62)"/>
<rect x="296" y="526" width="583" height="5" fill="url(#r63)"/>
<rect x="296" y="531" width="583" height="6" fill="url(#r64)"/>
<rect x="296" y="537" width="583" height="6" fill="url(#r65)"/>
<rect x="296" y="543" width="583" height="5" fill="url(#r66)"/>
<rect x="296" y="548" width="583" height="6" fill="url(#r67)"/>
<rect x="296" y="554" width="583" height="6" fill="url(#r68)"/>
<rect x="296" y="560" width="583" height="5" fill="url(#r69)"/>
<rect x="296" y="565" width="583" height="6" fill="url(#r70)"/>
<rect x="296" y="571" width="583" height="5" fill="url(#r71)"/>
<rect x="296" y="576" width="583" height="6" fill="url(#r72)"/>
<rect x="296" y="582" width="583" height="6" fill="url(#r73)"/>
<rect x="296" y="588" width="583" height="5" fill="url(#r74)"/>
<rect x="296" y="593" width="583" height="6" fill="url(#r75)"/>
<rect x="296" y="599" width="583" height="6" fill="url(#r76)"/>
<rect x="296" y="605" width="583" height="5" fill="url(#r77)"/>
<rect x="296" y="610" width="583" height="6" fill="url(#r78)"/>
<rect x="296" y="616" width="583" height="6" fill="url(#r79)"/>
<rect x="296" y="622" width="583" height="2" fill="url(#r80)"/></g>
<g clip-path="url(#ax)"><path d="M295.5 624.5 L295.5 172.5 L296.4 176.8 L296.6 195.0 L296.9 209.8 L297.2 222.4 L297.5 233.3 L297.8 242.9 L298.1 251.5 L298.3 259.2 L298.6 266.3 L298.9 272.9 L299.2 278.9 L299.5 284.5 L299.8 289.8 L300.1 294.7 L300.3 299.4 L300.6 303.8 L300.9 308.0 L301.2 311.9 L301.5 315.7 L301.8 319.4 L302.1 322.8 L302.3 326.2 L302.6 329.4 L302.9 332.4 L303.2 335.4 L303.5 338.3 L303.8 341.0 L304.0 343.7 L304.3 346.3 L304.6 348.8 L304.9 351.2 L305.2 353.6 L305.5 355.9 L305.8 358.1 L306.0 360.3 L306.3 362.4 L306.6 364.5 L306.9 366.5 L307.2 368.4 L307.5 370.4 L307.7 372.2 L308.0 374.1 L308.3 375.9 L308.6 377.6 L308.9 379.3 L309.2 381.0 L309.5 382.7 L309.7 384.3 L310.0 385.9 L310.3 387.4 L310.6 388.9 L310.9 390.4 L311.2 391.9 L311.4 393.3 L311.7 394.8 L312.0 396.1 L312.3 397.5 L312.6 398.9 L312.9 400.2 L313.2 401.5 L313.4 402.8 L313.7 404.0 L314.0 405.3 L314.3 406.5 L314.6 407.7 L314.9 408.9 L315.2 410.1 L315.4 411.2 L315.7 412.4 L316.0 413.5 L316.3 414.6 L316.6 415.7 L316.9 416.8 L317.1 417.9 L317.4 418.9 L317.7 419.9 L318.0 421.0 L318.3 422.0 L318.6 423.0 L318.9 424.0 L319.1 424.9 L319.4 425.9 L319.7 426.9 L320.0 427.8 L320.3 428.7 L320.6 429.7 L320.8 430.6 L321.1 431.5 L321.4 432.4 L321.7 433.2 L322.0 434.1 L322.3 435.0 L322.6 435.8 L322.8 436.7 L323.1 437.5 L323.4 438.3 L323.7 439.2 L324.0 440.0 L324.3 440.8 L324.6 441.6 L324.8 442.4 L325.1 443.1 L325.4 443.9 L325.7 444.7 L326.0 445.4 L326.3 446.2 L326.5 446.9 L326.8 447.7 L327.1 448.4 L327.4 449.1 L327.7 449.8 L328.0 450.5 L328.3 451.3 L328.5 452.0 L328.8 452.6 L329.1 453.3 L329.4 454.0 L329.7 454.7 L330.0 455.4 L330.2 456.0 L330.5 456.7 L330.8 457.3 L331.1 458.0 L331.4 458.6 L331.7 459.3 L332.0 459.9 L332.2 460.5 L332.5 461.2 L332.8 461.8 L333.1 462.4 L333.4 463.0 L333.7 463.6 L333.9 464.2 L334.2 464.8 L334.5 465.4 L334.8 466.0 L335.1 466.6 L335.4 467.2 L335.7 467.7 L335.9 468.3 L336.2 468.9 L336.5 469.4 L336.8 470.0 L337.1 470.6 L337.4 471.1 L337.7 471.7 L337.9 472.2 L338.2 472.7 L338.5 473.3 L338.8 473.8 L339.1 474.4 L339.4 474.9 L339.6 475.4 L339.9 475.9 L340.2 476.4 L340.8 477.5 L341.4 478.5 L341.9 479.5 L342.5 480.5 L343.1 481.4 L343.6 482.4 L344.2 483.4 L344.8 484.3 L345.3 485.2 L345.9 486.2 L346.5 487.1 L347.1 488.0 L347.6 488.9 L348.2 489.7 L348.8 490.6 L349.3 491.5 L349.9 492.3 L350.5 493.2 L351.0 494.0 L351.6 494.8 L352.2 495.7 L352.7 496.5 L353.3 497.3 L353.9 498.1 L354.5 498.9 L355.0 499.6 L355.6 500.4 L356.2 501.2 L356.7 501.9 L357.3 502.7 L357.9 503.4 L358.4 504.2 L359.0 504.9 L359.6 505.6 L360.2 506.3 L360.7 507.0 L361.3 507.8 L361.9 508.5 L362.4 509.1 L363.0 509.8 L363.6 510.5 L364.1 511.2 L364.7 511.9 L365.3 512.5 L365.8 513.2 L366.4 513.8 L367.0 514.5 L367.6 515.1 L368.1 515.8 L368.7 516.4 L369.3 517.0 L369.8 517.7 L370.4 518.3 L371.0 518.9 L371.5 519.5 L372.1 520.1 L372.7 520.7 L373.3 521.3 L373.8 521.9 L374.4 522.5 L375.0 523.1 L375.5 523.7 L376.1 524.2 L376.7 524.8 L377.2 525.4 L377.8 525.9 L378.4 526.5 L378.9 527.1 L379.5 527.6 L380.1 528.2 L380.7 528.7 L381.2 529.2 L381.8 529.8 L382.4 530.3 L382.9 530.9 L383.5 531.4 L384.1 531.9 L384.6 532.4 L385.2 532.9 L385.8 533.5 L386.4 534.0 L386.9 534.5 L387.5 535.0 L388.1 535.5 L388.6 536.0 L389.2 536.5 L389.8 537.0 L390.3 537.5 L390.9 537.9 L391.5 538.4 L392.0 538.9 L392.6 539.4 L393.2 539.9 L393.8 540.3 L394.3 540.8 L394.9 541.3 L395.5 541.7 L396.0 542.2 L396.6 542.7 L397.2 543.1 L397.7 543.6 L398.3 544.0 L398.9 544.5 L399.5 544.9 L400.0 545.4 L400.6 545.8 L401.2 546.2 L401.7 546.7 L402.3 547.1 L402.9 547.5 L403.4 548.0 L404.0 548.4 L404.6 548.8 L405.2 549.3 L405.7 549.7 L406.3 550.1 L406.9 550.5 L407.4 550.9 L408.0 551.3 L408.6 551.7 L409.1 552.2 L409.7 552.6 L410.3 553.0 L410.8 553.4 L411.4 553.8 L412.0 554.2 L412.6 554.6 L413.1 555.0 L413.7 555.4 L414.3 555.7 L414.8 556.1 L415.4 556.5 L416.0 556.9 L416.5 557.3 L417.1 557.7 L417.7 558.1 L418.3 558.4 L418.8 558.8 L419.4 559.2 L420.0 559.6 L420.5 559.9 L421.1 560.3 L421.7 560.7 L422.2 561.0 L422.8 561.4 L423.4 561.8 L423.9 562.1 L424.5 562.5 L425.1 562.8 L425.7 563.2 L426.2 563.5 L426.8 563.9 L427.4 564.3 L427.9 564.6 L428.5 565.0 L429.1 565.3 L429.6 565.6 L430.2 566.0 L430.8 566.3 L431.4 566.7 L431.9 567.0 L432.5 567.4 L433.1 567.7 L433.6 568.0 L434.2 568.4 L434.8 568.7 L435.3 569.0 L435.9 569.4 L436.5 569.7 L437.0 570.0 L437.6 570.3 L438.2 570.7 L438.8 571.0 L439.3 571.3 L439.9 571.6 L440.5 572.0 L441.0 572.3 L441.6 572.6 L442.2 572.9 L442.7 573.2 L443.3 573.5 L443.9 573.9 L444.5 574.2 L445.0 574.5 L445.6 574.8 L446.2 575.1 L446.7 575.4 L447.3 575.7 L447.9 576.0 L448.4 576.3 L449.0 576.6 L449.6 576.9 L450.2 577.2 L450.7 577.5 L451.3 577.8 L451.9 578.1 L452.4 578.4 L453.0 578.7 L453.6 579.0 L454.1 579.3 L454.7 579.6 L455.3 579.9 L455.8 580.2 L456.4 580.5 L457.0 580.7 L457.6 581.0 L458.1 581.3 L458.7 581.6 L459.3 581.9 L459.8 582.2 L460.4 582.4 L461.0 582.7 L461.5 583.0 L462.1 583.3 L462.7 583.6 L463.3 583.8 L463.8 584.1 L464.4 584.4 L465.0 584.7 L465.5 584.9 L466.1 585.2 L466.7 585.5 L467.2 585.7 L467.8 586.0 L468.4 586.3 L468.9 586.6 L469.5 586.8 L470.1 587.1 L470.7 587.4 L471.2 587.6 L471.8 587.9 L472.4 588.1 L472.9 588.4 L473.5 588.7 L474.1 588.9 L474.6 589.2 L475.2 589.4 L475.8 589.7 L476.4 590.0 L476.9 590.2 L477.5 590.5 L478.1 590.7 L478.6 591.0 L479.2 591.2 L479.8 591.5 L480.3 591.7 L480.9 592.0 L481.5 592.2 L482.0 592.5 L482.6 592.7 L483.2 593.0 L483.8 593.2 L484.3 593.5 L484.9 593.7 L485.5 594.0 L486.0 594.2 L486.6 594.4 L487.2 594.7 L487.7 594.9 L488.3 595.2 L488.9 595.4 L489.5 595.6 L490.0 595.9 L490.6 596.1 L491.2 596.4 L491.7 596.6 L492.3 596.8 L492.9 597.1 L493.4 597.3 L494.0 597.5 L494.6 597.8 L495.1 598.0 L495.7 598.2 L496.3 598.5 L496.9 598.7 L497.7 599.0 L498.6 599.4 L499.4 599.7 L500.3 600.1 L501.1 600.4 L502.0 600.7 L502.8 601.1 L503.7 601.4 L504.5 601.7 L505.4 602.1 L506.3 602.4 L507.1 602.7 L508.0 603.1 L508.8 603.4 L509.7 603.7 L510.5 604.0 L511.4 604.4 L512.2 604.7 L513.1 605.0 L513.9 605.3 L514.8 605.6 L515.7 606.0 L516.5 606.3 L517.4 606.6 L518.2 606.9 L519.1 607.2 L519.9 607.5 L520.8 607.8 L521.6 608.1 L522.5 608.5 L523.3 608.8 L524.2 609.1 L525.1 609.4 L525.9 609.7 L526.8 610.0 L527.6 610.3 L528.5 610.6 L529.3 610.9 L530.2 611.2 L531.0 611.5 L531.9 611.8 L532.7 612.0 L533.6 612.3 L534.5 612.6 L535.3 612.9 L536.2 613.2 L537.0 613.5 L537.9 613.8 L538.7 614.1 L539.6 614.4 L540.4 614.6 L541.3 614.9 L542.1 615.2 L543.0 615.5 L543.9 615.8 L544.7 616.1 L545.6 616.3 L546.4 616.6 L547.3 616.9 L548.1 617.2 L549.0 617.4 L549.8 617.7 L550.7 618.0 L551.5 618.3 L552.4 618.5 L553.3 618.8 L554.1 619.1 L555.0 619.3 L555.8 619.6 L556.7 619.9 L557.5 620.1 L558.4 620.4 L559.2 620.7 L560.1 620.9 L560.9 621.2 L561.8 621.5 L562.6 621.7 L563.5 622.0 L564.4 622.2 L565.2 622.5 L566.1 622.8 L566.9 623.0 L567.8 623.3 L568.6 623.5 L569.5 623.8 L570.3 624.0 L571.2 624.3 L572.0 624.5 L572.9 624.8 L573.8 625.0 L574.6 625.3 L575.5 625.5 L576.3 625.8 L577.2 626.0 L578.0 626.3 L578.9 626.5 L579.7 626.8 L580.6 627.0 L581.4 627.3 L582.3 627.5 L583.2 627.7 L584.0 628.0 L584.9 628.2 L585.7 628.5 L586.6 628.7 L587.4 628.7 L588.3 628.5 L589.1 628.2 L590.0 628.0 L590.8 627.7 L591.7 627.5 L592.6 627.3 L593.4 627.0 L594.3 626.8 L595.1 626.5 L596.0 626.3 L596.8 626.0 L597.7 625.8 L598.5 625.5 L599.4 625.3 L600.2 625.0 L601.1 624.8 L602.0 624.5 L602.8 624.3 L603.7 624.0 L604.5 623.8 L605.4 623.5 L606.2 623.3 L607.1 623.0 L607.9 622.8 L608.8 622.5 L609.6 622.2 L610.5 622.0 L611.4 621.7 L612.2 621.5 L613.1 621.2 L613.9 620.9 L614.8 620.7 L615.6 620.4 L616.5 620.1 L617.3 619.9 L618.2 619.6 L619.0 619.3 L619.9 619.1 L620.7 618.8 L621.6 618.5 L622.5 618.3 L623.3 618.0 L624.2 617.7 L625.0 617.4 L625.9 617.2 L626.7 616.9 L627.6 616.6 L628.4 616.3 L629.3 616.1 L630.1 615.8 L631.0 615.5 L631.9 615.2 L632.7 614.9 L633.6 614.6 L634.4 614.4 L635.3 614.1 L636.1 613.8 L637.0 613.5 L637.8 613.2 L638.7 612.9 L639.5 612.6 L640.4 612.3 L641.3 612.0 L642.1 611.8 L643.0 611.5 L643.8 611.2 L644.7 610.9 L645.5 610.6 L646.4 610.3 L647.2 610.0 L648.1 609.7 L648.9 609.4 L649.8 609.1 L650.7 608.8 L651.5 608.5 L652.4 608.1 L653.2 607.8 L654.1 607.5 L654.9 607.2 L655.8 606.9 L656.6 606.6 L657.5 606.3 L658.3 606.0 L659.2 605.6 L660.1 605.3 L660.9 605.0 L661.8 604.7 L662.6 604.4 L663.5 604.0 L664.3 603.7 L665.2 603.4 L666.0 603.1 L666.9 602.7 L667.7 602.4 L668.6 602.1 L669.5 601.7 L670.3 601.4 L671.2 601.1 L672.0 600.7 L672.9 600.4 L673.7 600.1 L674.6 599.7 L675.4 599.4 L676.3 599.0 L677.1 598.7 L677.7 598.5 L678.3 598.2 L678.9 598.0 L679.4 597.8 L680.0 597.5 L680.6 597.3 L681.1 597.1 L681.7 596.8 L682.3 596.6 L682.8 596.4 L683.4 596.1 L684.0 595.9 L684.5 595.6 L685.1 595.4 L685.7 595.2 L686.3 594.9 L686.8 594.7 L687.4 594.4 L688.0 594.2 L688.5 594.0 L689.1 593.7 L689.7 593.5 L690.2 593.2 L690.8 593.0 L691.4 592.7 L692.0 592.5 L692.5 592.2 L693.1 592.0 L693.7 591.7 L694.2 591.5 L694.8 591.2 L695.4 591.0 L695.9 590.7 L696.5 590.5 L697.1 590.2 L697.6 590.0 L698.2 589.7 L698.8 589.4 L699.4 589.2 L699.9 588.9 L700.5 588.7 L701.1 588.4 L701.6 588.1 L702.2 587.9 L702.8 587.6 L703.3 587.4 L703.9 587.1 L704.5 586.8 L705.1 586.6 L705.6 586.3 L706.2 586.0 L706.8 585.7 L707.3 585.5 L707.9 585.2 L708.5 584.9 L709.0 584.7 L709.6 584.4 L710.2 584.1 L710.7 583.8 L711.3 583.6 L711.9 583.3 L712.5 583.0 L713.0 582.7 L713.6 582.4 L714.2 582.2 L714.7 581.9 L715.3 581.6 L715.9 581.3 L716.4 581.0 L717.0 580.7 L717.6 580.5 L718.2 580.2 L718.7 579.9 L719.3 579.6 L719.9 579.3 L720.4 579.0 L721.0 578.7 L721.6 578.4 L722.1 578.1 L722.7 577.8 L723.3 577.5 L723.8 577.2 L724.4 576.9 L725.0 576.6 L725.6 576.3 L726.1 576.0 L726.7 575.7 L727.3 575.4 L727.8 575.1 L728.4 574.8 L729.0 574.5 L729.5 574.2 L730.1 573.9 L730.7 573.5 L731.3 573.2 L731.8 572.9 L732.4 572.6 L733.0 572.3 L733.5 572.0 L734.1 571.6 L734.7 571.3 L735.2 571.0 L735.8 570.7 L736.4 570.3 L737.0 570.0 L737.5 569.7 L738.1 569.4 L738.7 569.0 L739.2 568.7 L739.8 568.4 L740.4 568.0 L740.9 567.7 L741.5 567.4 L742.1 567.0 L742.6 566.7 L743.2 566.3 L743.8 566.0 L744.4 565.6 L744.9 565.3 L745.5 565.0 L746.1 564.6 L746.6 564.3 L747.2 563.9 L747.8 563.5 L748.3 563.2 L748.9 562.8 L749.5 562.5 L750.1 562.1 L750.6 561.8 L751.2 561.4 L751.8 561.0 L752.3 560.7 L752.9 560.3 L753.5 559.9 L754.0 559.6 L754.6 559.2 L755.2 558.8 L755.7 558.4 L756.3 558.1 L756.9 557.7 L757.5 557.3 L758.0 556.9 L758.6 556.5 L759.2 556.1 L759.7 555.7 L760.3 555.4 L760.9 555.0 L761.4 554.6 L762.0 554.2 L762.6 553.8 L763.2 553.4 L763.7 553.0 L764.3 552.6 L764.9 552.2 L765.4 551.7 L766.0 551.3 L766.6 550.9 L767.1 550.5 L767.7 550.1 L768.3 549.7 L768.8 549.3 L769.4 548.8 L770.0 548.4 L770.6 548.0 L771.1 547.5 L771.7 547.1 L772.3 546.7 L772.8 546.2 L773.4 545.8 L774.0 545.4 L774.5 544.9 L775.1 544.5 L775.7 544.0 L776.3 543.6 L776.8 543.1 L777.4 542.7 L778.0 542.2 L778.5 541.7 L779.1 541.3 L779.7 540.8 L780.2 540.3 L780.8 539.9 L781.4 539.4 L782.0 538.9 L782.5 538.4 L783.1 537.9 L783.7 537.5 L784.2 537.0 L784.8 536.5 L785.4 536.0 L785.9 535.5 L786.5 535.0 L787.1 534.5 L787.6 534.0 L788.2 533.5 L788.8 532.9 L789.4 532.4 L789.9 531.9 L790.5 531.4 L791.1 530.9 L791.6 530.3 L792.2 529.8 L792.8 529.2 L793.3 528.7 L793.9 528.2 L794.5 527.6 L795.1 527.1 L795.6 526.5 L796.2 525.9 L796.8 525.4 L797.3 524.8 L797.9 524.2 L798.5 523.7 L799.0 523.1 L799.6 522.5 L800.2 521.9 L800.7 521.3 L801.3 520.7 L801.9 520.1 L802.5 519.5 L803.0 518.9 L803.6 518.3 L804.2 517.7 L804.7 517.0 L805.3 516.4 L805.9 515.8 L806.4 515.1 L807.0 514.5 L807.6 513.8 L808.2 513.2 L808.7 512.5 L809.3 511.9 L809.9 511.2 L810.4 510.5 L811.0 509.8 L811.6 509.1 L812.1 508.5 L812.7 507.8 L813.3 507.0 L813.8 506.3 L814.4 505.6 L815.0 504.9 L815.6 504.2 L816.1 503.4 L816.7 502.7 L817.3 501.9 L817.8 501.2 L818.4 500.4 L819.0 499.6 L819.5 498.9 L820.1 498.1 L820.7 497.3 L821.3 496.5 L821.8 495.7 L822.4 494.8 L823.0 494.0 L823.5 493.2 L824.1 492.3 L824.7 491.5 L825.2 490.6 L825.8 489.7 L826.4 488.9 L826.9 488.0 L827.5 487.1 L828.1 486.2 L828.7 485.2 L829.2 484.3 L829.8 483.4 L830.4 482.4 L830.9 481.4 L831.5 480.5 L832.1 479.5 L832.6 478.5 L833.2 477.5 L833.8 476.4 L834.1 475.9 L834.4 475.4 L834.6 474.9 L834.9 474.4 L835.2 473.8 L835.5 473.3 L835.8 472.7 L836.1 472.2 L836.3 471.7 L836.6 471.1 L836.9 470.6 L837.2 470.0 L837.5 469.4 L837.8 468.9 L838.1 468.3 L838.3 467.7 L838.6 467.2 L838.9 466.6 L839.2 466.0 L839.5 465.4 L839.8 464.8 L840.1 464.2 L840.3 463.6 L840.6 463.0 L840.9 462.4 L841.2 461.8 L841.5 461.2 L841.8 460.5 L842.0 459.9 L842.3 459.3 L842.6 458.6 L842.9 458.0 L843.2 457.3 L843.5 456.7 L843.8 456.0 L844.0 455.4 L844.3 454.7 L844.6 454.0 L844.9 453.3 L845.2 452.6 L845.5 452.0 L845.7 451.3 L846.0 450.5 L846.3 449.8 L846.6 449.1 L846.9 448.4 L847.2 447.7 L847.5 446.9 L847.7 446.2 L848.0 445.4 L848.3 444.7 L848.6 443.9 L848.9 443.1 L849.2 442.4 L849.4 441.6 L849.7 440.8 L850.0 440.0 L850.3 439.2 L850.6 438.3 L850.9 437.5 L851.2 436.7 L851.4 435.8 L851.7 435.0 L852.0 434.1 L852.3 433.2 L852.6 432.4 L852.9 431.5 L853.2 430.6 L853.4 429.7 L853.7 428.7 L854.0 427.8 L854.3 426.9 L854.6 425.9 L854.9 424.9 L855.1 424.0 L855.4 423.0 L855.7 422.0 L856.0 421.0 L856.3 419.9 L856.6 418.9 L856.9 417.9 L857.1 416.8 L857.4 415.7 L857.7 414.6 L858.0 413.5 L858.3 412.4 L858.6 411.2 L858.8 410.1 L859.1 408.9 L859.4 407.7 L859.7 406.5 L860.0 405.3 L860.3 404.0 L860.6 402.8 L860.8 401.5 L861.1 400.2 L861.4 398.9 L861.7 397.5 L862.0 396.1 L862.3 394.8 L862.6 393.3 L862.8 391.9 L863.1 390.4 L863.4 388.9 L863.7 387.4 L864.0 385.9 L864.3 384.3 L864.5 382.7 L864.8 381.0 L865.1 379.3 L865.4 377.6 L865.7 375.9 L866.0 374.1 L866.3 372.2 L866.5 370.4 L866.8 368.4 L867.1 366.5 L867.4 364.5 L867.7 362.4 L868.0 360.3 L868.2 358.1 L868.5 355.9 L868.8 353.6 L869.1 351.2 L869.4 348.8 L869.7 346.3 L870.0 343.7 L870.2 341.0 L870.5 338.3 L870.8 335.4 L871.1 332.4 L871.4 329.4 L871.7 326.2 L871.9 322.8 L872.2 319.4 L872.5 315.7 L872.8 311.9 L873.1 308.0 L873.4 303.8 L873.7 299.4 L873.9 294.7 L874.2 289.8 L874.5 284.5 L874.8 278.9 L875.1 272.9 L875.4 266.3 L875.7 259.2 L875.9 251.5 L876.2 242.9 L876.5 233.3 L876.8 222.4 L877.1 209.8 L877.4 195.0 L877.6 176.8 L877.9 172.5 L878.5 172.5 L878.5 624.5 Z" fill="#cccccc" fill-opacity="0.4"/>
<path d="M295.5 172.5 L296.4 176.8 L296.6 195.0 L296.9 209.8 L297.2 222.4 L297.5 233.3 L297.8 242.9 L298.1 251.5 L298.3 259.2 L298.6 266.3 L298.9 272.9 L299.2 278.9 L299.5 284.5 L299.8 289.8 L300.1 294.7 L300.3 299.4 L300.6 303.8 L300.9 308.0 L301.2 311.9 L301.5 315.7 L301.8 319.4 L302.1 322.8 L302.3 326.2 L302.6 329.4 L302.9 332.4 L303.2 335.4 L303.5 338.3 L303.8 341.0 L304.0 343.7 L304.3 346.3 L304.6 348.8 L304.9 351.2 L305.2 353.6 L305.5 355.9 L305.8 358.1 L306.0 360.3 L306.3 362.4 L306.6 364.5 L306.9 366.5 L307.2 368.4 L307.5 370.4 L307.7 372.2 L308.0 374.1 L308.3 375.9 L308.6 377.6 L308.9 379.3 L309.2 381.0 L309.5 382.7 L309.7 384.3 L310.0 385.9 L310.3 387.4 L310.6 388.9 L310.9 390.4 L311.2 391.9 L311.4 393.3 L311.7 394.8 L312.0 396.1 L312.3 397.5 L312.6 398.9 L312.9 400.2 L313.2 401.5 L313.4 402.8 L313.7 404.0 L314.0 405.3 L314.3 406.5 L314.6 407.7 L314.9 408.9 L315.2 410.1 L315.4 411.2 L315.7 412.4 L316.0 413.5 L316.3 414.6 L316.6 415.7 L316.9 416.8 L317.1 417.9 L317.4 418.9 L317.7 419.9 L318.0 421.0 L318.3 422.0 L318.6 423.0 L318.9 424.0 L319.1 424.9 L319.4 425.9 L319.7 426.9 L320.0 427.8 L320.3 428.7 L320.6 429.7 L320.8 430.6 L321.1 431.5 L321.4 432.4 L321.7 433.2 L322.0 434.1 L322.3 435.0 L322.6 435.8 L322.8 436.7 L323.1 437.5 L323.4 438.3 L323.7 439.2 L324.0 440.0 L324.3 440.8 L324.6 441.6 L324.8 442.4 L325.1 443.1 L325.4 443.9 L325.7 444.7 L326.0 445.4 L326.3 446.2 L326.5 446.9 L326.8 447.7 L327.1 448.4 L327.4 449.1 L327.7 449.8 L328.0 450.5 L328.3 451.3 L328.5 452.0 L328.8 452.6 L329.1 453.3 L329.4 454.0 L329.7 454.7 L330.0 455.4 L330.2 456.0 L330.5 456.7 L330.8 457.3 L331.1 458.0 L331.4 458.6 L331.7 459.3 L332.0 459.9 L332.2 460.5 L332.5 461.2 L332.8 461.8 L333.1 462.4 L333.4 463.0 L333.7 463.6 L333.9 464.2 L334.2 464.8 L334.5 465.4 L334.8 466.0 L335.1 466.6 L335.4 467.2 L335.7 467.7 L335.9 468.3 L336.2 468.9 L336.5 469.4 L336.8 470.0 L337.1 470.6 L337.4 471.1 L337.7 471.7 L337.9 472.2 L338.2 472.7 L338.5 473.3 L338.8 473.8 L339.1 474.4 L339.4 474.9 L339.6 475.4 L339.9 475.9 L340.2 476.4 L340.8 477.5 L341.4 478.5 L341.9 479.5 L342.5 480.5 L343.1 481.4 L343.6 482.4 L344.2 483.4 L344.8 484.3 L345.3 485.2 L345.9 486.2 L346.5 487.1 L347.1 488.0 L347.6 488.9 L348.2 489.7 L348.8 490.6 L349.3 491.5 L349.9 492.3 L350.5 493.2 L351.0 494.0 L351.6 494.8 L352.2 495.7 L352.7 496.5 L353.3 497.3 L353.9 498.1 L354.5 498.9 L355.0 499.6 L355.6 500.4 L356.2 501.2 L356.7 501.9 L357.3 502.7 L357.9 503.4 L358.4 504.2 L359.0 504.9 L359.6 505.6 L360.2 506.3 L360.7 507.0 L361.3 507.8 L361.9 508.5 L362.4 509.1 L363.0 509.8 L363.6 510.5 L364.1 511.2 L364.7 511.9 L365.3 512.5 L365.8 513.2 L366.4 513.8 L367.0 514.5 L367.6 515.1 L368.1 515.8 L368.7 516.4 L369.3 517.0 L369.8 517.7 L370.4 518.3 L371.0 518.9 L371.5 519.5 L372.1 520.1 L372.7 520.7 L373.3 521.3 L373.8 521.9 L374.4 522.5 L375.0 523.1 L375.5 523.7 L376.1 524.2 L376.7 524.8 L377.2 525.4 L377.8 525.9 L378.4 526.5 L378.9 527.1 L379.5 527.6 L380.1 528.2 L380.7 528.7 L381.2 529.2 L381.8 529.8 L382.4 530.3 L382.9 530.9 L383.5 531.4 L384.1 531.9 L384.6 532.4 L385.2 532.9 L385.8 533.5 L386.4 534.0 L386.9 534.5 L387.5 535.0 L388.1 535.5 L388.6 536.0 L389.2 536.5 L389.8 537.0 L390.3 537.5 L390.9 537.9 L391.5 538.4 L392.0 538.9 L392.6 539.4 L393.2 539.9 L393.8 540.3 L394.3 540.8 L394.9 541.3 L395.5 541.7 L396.0 542.2 L396.6 542.7 L397.2 543.1 L397.7 543.6 L398.3 544.0 L398.9 544.5 L399.5 544.9 L400.0 545.4 L400.6 545.8 L401.2 546.2 L401.7 546.7 L402.3 547.1 L402.9 547.5 L403.4 548.0 L404.0 548.4 L404.6 548.8 L405.2 549.3 L405.7 549.7 L406.3 550.1 L406.9 550.5 L407.4 550.9 L408.0 551.3 L408.6 551.7 L409.1 552.2 L409.7 552.6 L410.3 553.0 L410.8 553.4 L411.4 553.8 L412.0 554.2 L412.6 554.6 L413.1 555.0 L413.7 555.4 L414.3 555.7 L414.8 556.1 L415.4 556.5 L416.0 556.9 L416.5 557.3 L417.1 557.7 L417.7 558.1 L418.3 558.4 L418.8 558.8 L419.4 559.2 L420.0 559.6 L420.5 559.9 L421.1 560.3 L421.7 560.7 L422.2 561.0 L422.8 561.4 L423.4 561.8 L423.9 562.1 L424.5 562.5 L425.1 562.8 L425.7 563.2 L426.2 563.5 L426.8 563.9 L427.4 564.3 L427.9 564.6 L428.5 565.0 L429.1 565.3 L429.6 565.6 L430.2 566.0 L430.8 566.3 L431.4 566.7 L431.9 567.0 L432.5 567.4 L433.1 567.7 L433.6 568.0 L434.2 568.4 L434.8 568.7 L435.3 569.0 L435.9 569.4 L436.5 569.7 L437.0 570.0 L437.6 570.3 L438.2 570.7 L438.8 571.0 L439.3 571.3 L439.9 571.6 L440.5 572.0 L441.0 572.3 L441.6 572.6 L442.2 572.9 L442.7 573.2 L443.3 573.5 L443.9 573.9 L444.5 574.2 L445.0 574.5 L445.6 574.8 L446.2 575.1 L446.7 575.4 L447.3 575.7 L447.9 576.0 L448.4 576.3 L449.0 576.6 L449.6 576.9 L450.2 577.2 L450.7 577.5 L451.3 577.8 L451.9 578.1 L452.4 578.4 L453.0 578.7 L453.6 579.0 L454.1 579.3 L454.7 579.6 L455.3 579.9 L455.8 580.2 L456.4 580.5 L457.0 580.7 L457.6 581.0 L458.1 581.3 L458.7 581.6 L459.3 581.9 L459.8 582.2 L460.4 582.4 L461.0 582.7 L461.5 583.0 L462.1 583.3 L462.7 583.6 L463.3 583.8 L463.8 584.1 L464.4 584.4 L465.0 584.7 L465.5 584.9 L466.1 585.2 L466.7 585.5 L467.2 585.7 L467.8 586.0 L468.4 586.3 L468.9 586.6 L469.5 586.8 L470.1 587.1 L470.7 587.4 L471.2 587.6 L471.8 587.9 L472.4 588.1 L472.9 588.4 L473.5 588.7 L474.1 588.9 L474.6 589.2 L475.2 589.4 L475.8 589.7 L476.4 590.0 L476.9 590.2 L477.5 590.5 L478.1 590.7 L478.6 591.0 L479.2 591.2 L479.8 591.5 L480.3 591.7 L480.9 592.0 L481.5 592.2 L482.0 592.5 L482.6 592.7 L483.2 593.0 L483.8 593.2 L484.3 593.5 L484.9 593.7 L485.5 594.0 L486.0 594.2 L486.6 594.4 L487.2 594.7 L487.7 594.9 L488.3 595.2 L488.9 595.4 L489.5 595.6 L490.0 595.9 L490.6 596.1 L491.2 596.4 L491.7 596.6 L492.3 596.8 L492.9 597.1 L493.4 597.3 L494.0 597.5 L494.6 597.8 L495.1 598.0 L495.7 598.2 L496.3 598.5 L496.9 598.7 L497.7 599.0 L498.6 599.4 L499.4 599.7 L500.3 600.1 L501.1 600.4 L502.0 600.7 L502.8 601.1 L503.7 601.4 L504.5 601.7 L505.4 602.1 L506.3 602.4 L507.1 602.7 L508.0 603.1 L508.8 603.4 L509.7 603.7 L510.5 604.0 L511.4 604.4 L512.2 604.7 L513.1 605.0 L513.9 605.3 L514.8 605.6 L515.7 606.0 L516.5 606.3 L517.4 606.6 L518.2 606.9 L519.1 607.2 L519.9 607.5 L520.8 607.8 L521.6 608.1 L522.5 608.5 L523.3 608.8 L524.2 609.1 L525.1 609.4 L525.9 609.7 L526.8 610.0 L527.6 610.3 L528.5 610.6 L529.3 610.9 L530.2 611.2 L531.0 611.5 L531.9 611.8 L532.7 612.0 L533.6 612.3 L534.5 612.6 L535.3 612.9 L536.2 613.2 L537.0 613.5 L537.9 613.8 L538.7 614.1 L539.6 614.4 L540.4 614.6 L541.3 614.9 L542.1 615.2 L543.0 615.5 L543.9 615.8 L544.7 616.1 L545.6 616.3 L546.4 616.6 L547.3 616.9 L548.1 617.2 L549.0 617.4 L549.8 617.7 L550.7 618.0 L551.5 618.3 L552.4 618.5 L553.3 618.8 L554.1 619.1 L555.0 619.3 L555.8 619.6 L556.7 619.9 L557.5 620.1 L558.4 620.4 L559.2 620.7 L560.1 620.9 L560.9 621.2 L561.8 621.5 L562.6 621.7 L563.5 622.0 L564.4 622.2 L565.2 622.5 L566.1 622.8 L566.9 623.0 L567.8 623.3 L568.6 623.5 L569.5 623.8 L570.3 624.0 L571.2 624.3 L572.0 624.5 L572.9 624.8 L573.8 625.0 L574.6 625.3 L575.5 625.5 L576.3 625.8 L577.2 626.0 L578.0 626.3 L578.9 626.5 L579.7 626.8 L580.6 627.0 L581.4 627.3 L582.3 627.5 L583.2 627.7 L584.0 628.0 L584.9 628.2 L585.7 628.5 L586.6 628.7 L587.4 628.7 L588.3 628.5 L589.1 628.2 L590.0 628.0 L590.8 627.7 L591.7 627.5 L592.6 627.3 L593.4 627.0 L594.3 626.8 L595.1 626.5 L596.0 626.3 L596.8 626.0 L597.7 625.8 L598.5 625.5 L599.4 625.3 L600.2 625.0 L601.1 624.8 L602.0 624.5 L602.8 624.3 L603.7 624.0 L604.5 623.8 L605.4 623.5 L606.2 623.3 L607.1 623.0 L607.9 622.8 L608.8 622.5 L609.6 622.2 L610.5 622.0 L611.4 621.7 L612.2 621.5 L613.1 621.2 L613.9 620.9 L614.8 620.7 L615.6 620.4 L616.5 620.1 L617.3 619.9 L618.2 619.6 L619.0 619.3 L619.9 619.1 L620.7 618.8 L621.6 618.5 L622.5 618.3 L623.3 618.0 L624.2 617.7 L625.0 617.4 L625.9 617.2 L626.7 616.9 L627.6 616.6 L628.4 616.3 L629.3 616.1 L630.1 615.8 L631.0 615.5 L631.9 615.2 L632.7 614.9 L633.6 614.6 L634.4 614.4 L635.3 614.1 L636.1 613.8 L637.0 613.5 L637.8 613.2 L638.7 612.9 L639.5 612.6 L640.4 612.3 L641.3 612.0 L642.1 611.8 L643.0 611.5 L643.8 611.2 L644.7 610.9 L645.5 610.6 L646.4 610.3 L647.2 610.0 L648.1 609.7 L648.9 609.4 L649.8 609.1 L650.7 608.8 L651.5 608.5 L652.4 608.1 L653.2 607.8 L654.1 607.5 L654.9 607.2 L655.8 606.9 L656.6 606.6 L657.5 606.3 L658.3 606.0 L659.2 605.6 L660.1 605.3 L660.9 605.0 L661.8 604.7 L662.6 604.4 L663.5 604.0 L664.3 603.7 L665.2 603.4 L666.0 603.1 L666.9 602.7 L667.7 602.4 L668.6 602.1 L669.5 601.7 L670.3 601.4 L671.2 601.1 L672.0 600.7 L672.9 600.4 L673.7 600.1 L674.6 599.7 L675.4 599.4 L676.3 599.0 L677.1 598.7 L677.7 598.5 L678.3 598.2 L678.9 598.0 L679.4 597.8 L680.0 597.5 L680.6 597.3 L681.1 597.1 L681.7 596.8 L682.3 596.6 L682.8 596.4 L683.4 596.1 L684.0 595.9 L684.5 595.6 L685.1 595.4 L685.7 595.2 L686.3 594.9 L686.8 594.7 L687.4 594.4 L688.0 594.2 L688.5 594.0 L689.1 593.7 L689.7 593.5 L690.2 593.2 L690.8 593.0 L691.4 592.7 L692.0 592.5 L692.5 592.2 L693.1 592.0 L693.7 591.7 L694.2 591.5 L694.8 591.2 L695.4 591.0 L695.9 590.7 L696.5 590.5 L697.1 590.2 L697.6 590.0 L698.2 589.7 L698.8 589.4 L699.4 589.2 L699.9 588.9 L700.5 588.7 L701.1 588.4 L701.6 588.1 L702.2 587.9 L702.8 587.6 L703.3 587.4 L703.9 587.1 L704.5 586.8 L705.1 586.6 L705.6 586.3 L706.2 586.0 L706.8 585.7 L707.3 585.5 L707.9 585.2 L708.5 584.9 L709.0 584.7 L709.6 584.4 L710.2 584.1 L710.7 583.8 L711.3 583.6 L711.9 583.3 L712.5 583.0 L713.0 582.7 L713.6 582.4 L714.2 582.2 L714.7 581.9 L715.3 581.6 L715.9 581.3 L716.4 581.0 L717.0 580.7 L717.6 580.5 L718.2 580.2 L718.7 579.9 L719.3 579.6 L719.9 579.3 L720.4 579.0 L721.0 578.7 L721.6 578.4 L722.1 578.1 L722.7 577.8 L723.3 577.5 L723.8 577.2 L724.4 576.9 L725.0 576.6 L725.6 576.3 L726.1 576.0 L726.7 575.7 L727.3 575.4 L727.8 575.1 L728.4 574.8 L729.0 574.5 L729.5 574.2 L730.1 573.9 L730.7 573.5 L731.3 573.2 L731.8 572.9 L732.4 572.6 L733.0 572.3 L733.5 572.0 L734.1 571.6 L734.7 571.3 L735.2 571.0 L735.8 570.7 L736.4 570.3 L737.0 570.0 L737.5 569.7 L738.1 569.4 L738.7 569.0 L739.2 568.7 L739.8 568.4 L740.4 568.0 L740.9 567.7 L741.5 567.4 L742.1 567.0 L742.6 566.7 L743.2 566.3 L743.8 566.0 L744.4 565.6 L744.9 565.3 L745.5 565.0 L746.1 564.6 L746.6 564.3 L747.2 563.9 L747.8 563.5 L748.3 563.2 L748.9 562.8 L749.5 562.5 L750.1 562.1 L750.6 561.8 L751.2 561.4 L751.8 561.0 L752.3 560.7 L752.9 560.3 L753.5 559.9 L754.0 559.6 L754.6 559.2 L755.2 558.8 L755.7 558.4 L756.3 558.1 L756.9 557.7 L757.5 557.3 L758.0 556.9 L758.6 556.5 L759.2 556.1 L759.7 555.7 L760.3 555.4 L760.9 555.0 L761.4 554.6 L762.0 554.2 L762.6 553.8 L763.2 553.4 L763.7 553.0 L764.3 552.6 L764.9 552.2 L765.4 551.7 L766.0 551.3 L766.6 550.9 L767.1 550.5 L767.7 550.1 L768.3 549.7 L768.8 549.3 L769.4 548.8 L770.0 548.4 L770.6 548.0 L771.1 547.5 L771.7 547.1 L772.3 546.7 L772.8 546.2 L773.4 545.8 L774.0 545.4 L774.5 544.9 L775.1 544.5 L775.7 544.0 L776.3 543.6 L776.8 543.1 L777.4 542.7 L778.0 542.2 L778.5 541.7 L779.1 541.3 L779.7 540.8 L780.2 540.3 L780.8 539.9 L781.4 539.4 L782.0 538.9 L782.5 538.4 L783.1 537.9 L783.7 537.5 L784.2 537.0 L784.8 536.5 L785.4 536.0 L785.9 535.5 L786.5 535.0 L787.1 534.5 L787.6 534.0 L788.2 533.5 L788.8 532.9 L789.4 532.4 L789.9 531.9 L790.5 531.4 L791.1 530.9 L791.6 530.3 L792.2 529.8 L792.8 529.2 L793.3 528.7 L793.9 528.2 L794.5 527.6 L795.1 527.1 L795.6 526.5 L796.2 525.9 L796.8 525.4 L797.3 524.8 L797.9 524.2 L798.5 523.7 L799.0 523.1 L799.6 522.5 L800.2 521.9 L800.7 521.3 L801.3 520.7 L801.9 520.1 L802.5 519.5 L803.0 518.9 L803.6 518.3 L804.2 517.7 L804.7 517.0 L805.3 516.4 L805.9 515.8 L806.4 515.1 L807.0 514.5 L807.6 513.8 L808.2 513.2 L808.7 512.5 L809.3 511.9 L809.9 511.2 L810.4 510.5 L811.0 509.8 L811.6 509.1 L812.1 508.5 L812.7 507.8 L813.3 507.0 L813.8 506.3 L814.4 505.6 L815.0 504.9 L815.6 504.2 L816.1 503.4 L816.7 502.7 L817.3 501.9 L817.8 501.2 L818.4 500.4 L819.0 499.6 L819.5 498.9 L820.1 498.1 L820.7 497.3 L821.3 496.5 L821.8 495.7 L822.4 494.8 L823.0 494.0 L823.5 493.2 L824.1 492.3 L824.7 491.5 L825.2 490.6 L825.8 489.7 L826.4 488.9 L826.9 488.0 L827.5 487.1 L828.1 486.2 L828.7 485.2 L829.2 484.3 L829.8 483.4 L830.4 482.4 L830.9 481.4 L831.5 480.5 L832.1 479.5 L832.6 478.5 L833.2 477.5 L833.8 476.4 L834.1 475.9 L834.4 475.4 L834.6 474.9 L834.9 474.4 L835.2 473.8 L835.5 473.3 L835.8 472.7 L836.1 472.2 L836.3 471.7 L836.6 471.1 L836.9 470.6 L837.2 470.0 L837.5 469.4 L837.8 468.9 L838.1 468.3 L838.3 467.7 L838.6 467.2 L838.9 466.6 L839.2 466.0 L839.5 465.4 L839.8 464.8 L840.1 464.2 L840.3 463.6 L840.6 463.0 L840.9 462.4 L841.2 461.8 L841.5 461.2 L841.8 460.5 L842.0 459.9 L842.3 459.3 L842.6 458.6 L842.9 458.0 L843.2 457.3 L843.5 456.7 L843.8 456.0 L844.0 455.4 L844.3 454.7 L844.6 454.0 L844.9 453.3 L845.2 452.6 L845.5 452.0 L845.7 451.3 L846.0 450.5 L846.3 449.8 L846.6 449.1 L846.9 448.4 L847.2 447.7 L847.5 446.9 L847.7 446.2 L848.0 445.4 L848.3 444.7 L848.6 443.9 L848.9 443.1 L849.2 442.4 L849.4 441.6 L849.7 440.8 L850.0 440.0 L850.3 439.2 L850.6 438.3 L850.9 437.5 L851.2 436.7 L851.4 435.8 L851.7 435.0 L852.0 434.1 L852.3 433.2 L852.6 432.4 L852.9 431.5 L853.2 430.6 L853.4 429.7 L853.7 428.7 L854.0 427.8 L854.3 426.9 L854.6 425.9 L854.9 424.9 L855.1 424.0 L855.4 423.0 L855.7 422.0 L856.0 421.0 L856.3 419.9 L856.6 418.9 L856.9 417.9 L857.1 416.8 L857.4 415.7 L857.7 414.6 L858.0 413.5 L858.3 412.4 L858.6 411.2 L858.8 410.1 L859.1 408.9 L859.4 407.7 L859.7 406.5 L860.0 405.3 L860.3 404.0 L860.6 402.8 L860.8 401.5 L861.1 400.2 L861.4 398.9 L861.7 397.5 L862.0 396.1 L862.3 394.8 L862.6 393.3 L862.8 391.9 L863.1 390.4 L863.4 388.9 L863.7 387.4 L864.0 385.9 L864.3 384.3 L864.5 382.7 L864.8 381.0 L865.1 379.3 L865.4 377.6 L865.7 375.9 L866.0 374.1 L866.3 372.2 L866.5 370.4 L866.8 368.4 L867.1 366.5 L867.4 364.5 L867.7 362.4 L868.0 360.3 L868.2 358.1 L868.5 355.9 L868.8 353.6 L869.1 351.2 L869.4 348.8 L869.7 346.3 L870.0 343.7 L870.2 341.0 L870.5 338.3 L870.8 335.4 L871.1 332.4 L871.4 329.4 L871.7 326.2 L871.9 322.8 L872.2 319.4 L872.5 315.7 L872.8 311.9 L873.1 308.0 L873.4 303.8 L873.7 299.4 L873.9 294.7 L874.2 289.8 L874.5 284.5 L874.8 278.9 L875.1 272.9 L875.4 266.3 L875.7 259.2 L875.9 251.5 L876.2 242.9 L876.5 233.3 L876.8 222.4 L877.1 209.8 L877.4 195.0 L877.6 176.8 L877.9 172.5 L878.5 172.5" fill="none" stroke="#fff" stroke-width="2.5" stroke-dasharray="12 10"/></g>
<path d="M295.5 172 V625 M295 624.5 H879 M353.5 624 v-6 M411.5 624 v-6 M470.5 624 v-6 M528.5 624 v-6 M586.5 624 v-6 M645.5 624 v-6 M703.5 624 v-6 M761.5 624 v-6 M820.5 624 v-6 M878.5 624 v-6 M296 612.5 h2 M296 594.5 h2 M296 579.5 h2 M296 567.5 h2 M296 556.5 h2 M296 546.5 h2 M296 538.5 h4.5 M296 481.5 h2 M296 448.5 h2 M296 425.5 h2 M296 407.5 h2 M296 392.5 h2 M296 379.5 h2 M296 368.5 h2 M296 359.5 h2 M296 350.5 h4.5 M296 294.5 h2 M296 261.5 h2 M296 237.5 h2 M296 219.5 h2 M296 204.5 h2 M296 191.5 h2 M296 181.5 h2" stroke="#262626" stroke-width="1" fill="none" shape-rendering="crispEdges"/>
<text x="353.5" y="640" font-size="12" text-anchor="middle">0.1</text>
<text x="411.9" y="640" font-size="12" text-anchor="middle">0.2</text>
<text x="470.2" y="640" font-size="12" text-anchor="middle">0.3</text>
<text x="528.5" y="640" font-size="12" text-anchor="middle">0.4</text>
<text x="586.9" y="640" font-size="12" text-anchor="middle">0.5</text>
<text x="645.2" y="640" font-size="12" text-anchor="middle">0.6</text>
<text x="703.5" y="640" font-size="12" text-anchor="middle">0.7</text>
<text x="761.8" y="640" font-size="12" text-anchor="middle">0.8</text>
<text x="820.2" y="640" font-size="12" text-anchor="middle">0.9</text>
<text x="878.5" y="640" font-size="12" text-anchor="middle">1</text>
<text x="587" y="656" font-size="13.2" text-anchor="middle">Time (secs)</text>
<text transform="translate(264 399) rotate(-90)" font-size="13.2" text-anchor="middle">Frequency (Hz)</text>
<text x="587" y="166.7" font-size="13.2" font-weight="bold" text-anchor="middle">Magnitude Scalogram</text>
<text x="273" y="355.1" font-size="12">10<tspan font-size="8" dy="-5.5">2</tspan></text>
<text x="273" y="542.8" font-size="12">10<tspan font-size="8" dy="-5.5">1</tspan></text>
<rect x="898.5" y="172.5" width="20" height="452" fill="url(#cb)" stroke="#262626" stroke-width="1"/>
<text x="924.3" y="580.9" font-size="10.8">0.1</text>
<text x="924.3" y="532.7" font-size="10.8">0.2</text>
<text x="924.3" y="484.5" font-size="10.8">0.3</text>
<text x="924.3" y="436.3" font-size="10.8">0.4</text>
<text x="924.3" y="388.1" font-size="10.8">0.5</text>
<text x="924.3" y="339.9" font-size="10.8">0.6</text>
<text x="924.3" y="291.7" font-size="10.8">0.7</text>
<text x="924.3" y="243.5" font-size="10.8">0.8</text>
<text x="924.3" y="195.3" font-size="10.8">0.9</text>
<path d="M918 575.5 h-4 M918 527.5 h-4 M918 479.5 h-4 M918 431.5 h-4 M918 383.5 h-4 M918 334.5 h-4 M918 286.5 h-4 M918 238.5 h-4 M918 190.5 h-4" stroke="#262626" stroke-width="1" fill="none" shape-rendering="crispEdges"/>
<text transform="translate(955 399.5) rotate(-90)" font-size="10.8" text-anchor="middle">Magnitude</text>
</svg>
</div>
</body>
</html>
